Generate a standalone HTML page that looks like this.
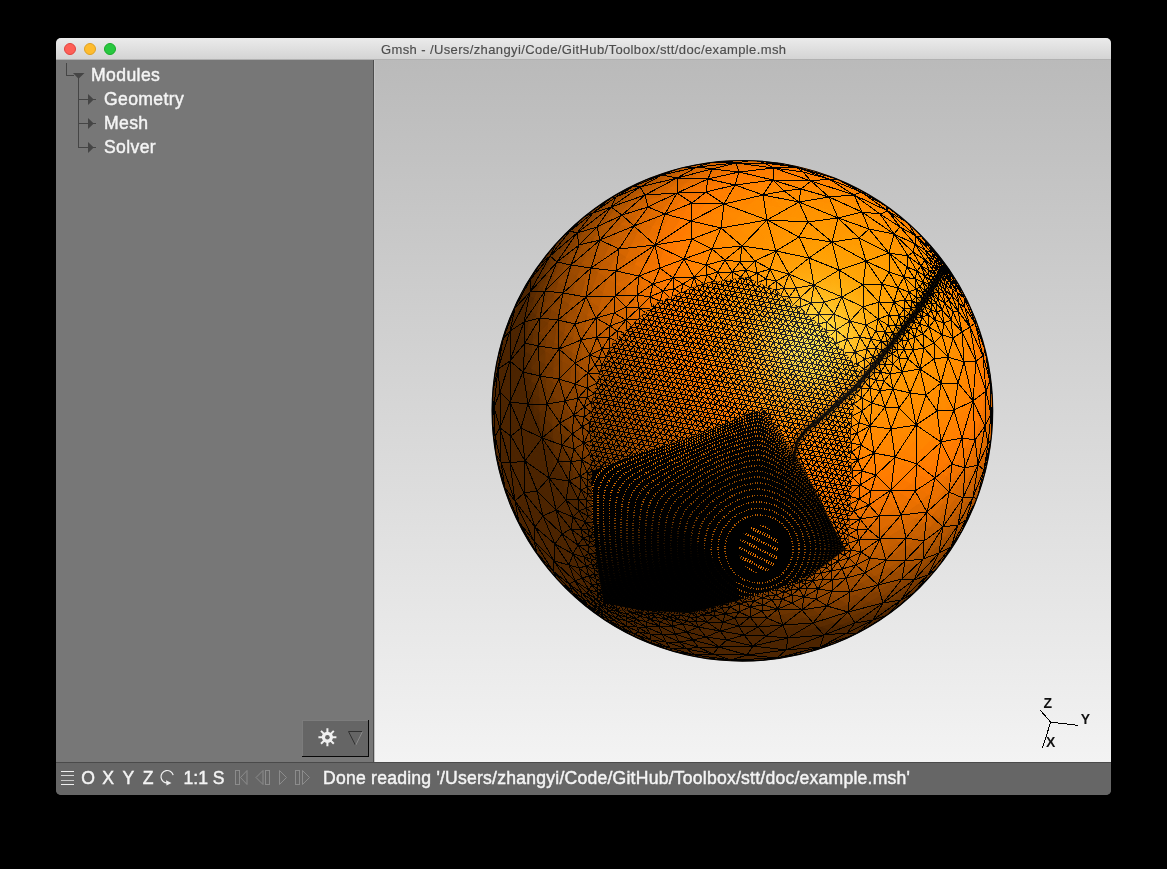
<!DOCTYPE html>
<html><head><meta charset="utf-8">
<style>
*{box-sizing:border-box;margin:0;padding:0}
html,body{width:1167px;height:869px;background:#000;overflow:hidden;font-family:"Liberation Sans",sans-serif}
#win{position:absolute;left:56px;top:38px;width:1055px;height:757px;border-radius:5px;overflow:hidden;background:#666}
#title{position:absolute;left:0;top:0;width:1055px;height:22px;background:linear-gradient(#ebebeb,#d4d4d4);border-bottom:1px solid #b1b1b1}
#title .t{position:absolute;left:325px;top:4px;font-size:13px;letter-spacing:0.38px;color:#4d4d4d;white-space:nowrap;-webkit-text-stroke:0.15px #4d4d4d;will-change:transform}
.dot{position:absolute;top:5px;width:12px;height:12px;border-radius:50%}
#side{position:absolute;left:0;top:22px;width:318px;height:702px;background:#777;border-right:1px solid #4d4d4d}
#view{position:absolute;left:318px;top:22px;width:737px;height:702px;background:linear-gradient(#bababa,#f3f3f3);border-left:1px solid #c4c4c4}
#status{position:absolute;left:0;top:724px;width:1055px;height:33px;background:#666;border-top:1px solid #4a4a4a}
.lbl{position:absolute;color:#f4f4f4;font-size:17.6px;white-space:nowrap;-webkit-text-stroke:0.45px #f4f4f4;will-change:transform}
svg{position:absolute;overflow:visible}
</style></head><body>
<div id="win">
 <div id="title">
  <div class="dot" style="left:8px;background:#fe5f57;border:0.5px solid #e0443e"></div>
  <div class="dot" style="left:28px;background:#febc2e;border:0.5px solid #dea123"></div>
  <div class="dot" style="left:48px;background:#28c840;border:0.5px solid #1aab29"></div>
  <div class="t">Gmsh - /Users/zhangyi/Code/GitHub/Toolbox/stt/doc/example.msh</div>
 </div>
 <div id="side">
  <div class="lbl" style="left:35px;top:5px;letter-spacing:0.4px">Modules</div>
  <div class="lbl" style="left:48px;top:29px;letter-spacing:0.35px">Geometry</div>
  <div class="lbl" style="left:48px;top:53px;letter-spacing:0.35px">Mesh</div>
  <div class="lbl" style="left:48px;top:77px;letter-spacing:0.35px">Solver</div>
 </div>
 <div id="view"></div>
 <div id="status">
  <div class="lbl" style="left:266.5px;top:5px;letter-spacing:0.22px">Done reading '/Users/zhangyi/Code/GitHub/Toolbox/stt/doc/example.msh'</div>
 </div>
</div>
<svg width="1167" height="869" viewBox="0 0 1167 869" style="left:0;top:0">
<g shape-rendering="crispEdges" stroke="#454545" stroke-width="1" fill="none">
<path d="M66.5 63V75.5H74M78.5 78V148M78.5 99.5H96M78.5 123.5H96M78.5 147.5H96"/>
</g>
<g fill="#454545">
<path d="M73 73H84.5L78.5 78.8Z"/>
<path d="M88 94V105L93.8 99.5Z"/>
<path d="M88 118V129L93.8 123.5Z"/>
<path d="M88 142V153L93.8 147.5Z"/>
</g>
<!-- gear button -->
<g shape-rendering="crispEdges">
<rect x="302" y="720" width="67" height="37" fill="#656565"/>
<path d="M302.5 757V720.5H368" stroke="#7c7c7c" fill="none"/>
<path d="M302 756.5H368.5V720" stroke="#080808" fill="none"/>
</g>
<g transform="translate(327.4 737.3)" fill="#f0f0f0" stroke="none">
<circle r="5.6"/>
<g stroke="#f0f0f0" stroke-width="2" stroke-linecap="butt">
<path d="M0 -9V9M-9 0H9M-6.4 -6.4L6.4 6.4M-6.4 6.4L6.4 -6.4"/>
</g>
<circle r="2.3" fill="#656565"/>
</g>
<path d="M348.5 731.5H362.5" stroke="#303030" stroke-width="1"/>
<path d="M348.5 731.5L355.6 745.5" stroke="#303030" stroke-width="1"/>
<path d="M362.5 731.5L355.6 745.5" stroke="#8a8a8a" stroke-width="1"/>
<!-- status icons -->
<g stroke-width="1" shape-rendering="crispEdges">
<path d="M61 771.5H74" stroke="#f0f0f0"/>
<path d="M61 775.5H74" stroke="#d8d8d8"/>
<path d="M61 780.5H74" stroke="#c8c8c8"/>
<path d="M61 784.5H74" stroke="#f0f0f0"/>
</g>
<g fill="none" stroke="#eeeeee" stroke-width="1.2">
<path d="M173.2 775.2A6.2 6.2 0 1 0 167.5 782.9"/>
</g>
<path d="M166 780.3L171.5 783L166.5 785.5Z" fill="#eeeeee"/>
<g fill="none" stroke="#8c8c8c" stroke-width="1">
<rect x="235.5" y="770.5" width="4" height="14"/>
<path d="M247 770.5V784.5L240.5 777.5Z"/>
<path d="M263 770.5V784.5L256 777.5Z"/>
<rect x="265.5" y="770.5" width="4" height="14"/>
<path d="M279.5 770.5V784.5L286.5 777.5Z"/>
<rect x="295.5" y="770.5" width="4" height="14"/>
<path d="M302.5 770.5V784.5L309.5 777.5Z"/>
</g>
<!-- axes -->
<g stroke="#000" stroke-width="1" fill="none" shape-rendering="crispEdges">
<path d="M1040.1 710.1L1050.7 722.1L1077.6 725.3M1050.7 722.1L1042.4 748.3"/>
</g>
<g font-family="Liberation Sans" font-size="14px" font-weight="bold" fill="#111">
<text x="1043.5" y="707.8">Z</text>
<text x="1080.8" y="723.6">Y</text>
<text x="1046" y="747.2">X</text>
</g>
<!-- status letters -->
<g font-family="Liberation Sans" font-size="17.6px" fill="#f4f4f4" stroke="#f4f4f4" stroke-width="0.45" style="will-change:transform">
<text x="81.3" y="783.9">O</text>
<text x="102.3" y="783.9">X</text>
<text x="122.6" y="783.9">Y</text>
<text x="142.8" y="783.9">Z</text>
<text x="183.5" y="783.9">1:1</text>
<text x="212.8" y="783.9">S</text>
</g>
</svg>

<svg id="sph" width="1167" height="869" viewBox="0 0 1167 869" style="left:0;top:0">
<defs>
<clipPath id="cs"><circle cx="742.4" cy="410.8" r="250.6"/></clipPath>
<clipPath id="cD"><polygon points="592.0,471.0 640.0,452.0 683.0,440.0 720.0,425.0 751.0,412.0 765.0,410.0 798.0,458.0 816.0,491.0 841.0,542.0 846.0,549.0 803.0,582.0 740.0,600.0 690.0,613.0 640.0,610.0 604.0,603.0 596.0,560.0 592.0,520.0"/></clipPath>
<clipPath id="cE"><ellipse cx="759" cy="549" rx="20" ry="24"/></clipPath>
<linearGradient id="gR" gradientUnits="userSpaceOnUse" x1="690" y1="445" x2="735" y2="560"><stop offset="0" stop-color="#fff" stop-opacity="1"/><stop offset="1" stop-color="#fff" stop-opacity="0.12"/></linearGradient>
<radialGradient id="gRc" gradientUnits="userSpaceOnUse" cx="759" cy="549" r="75"><stop offset="0" stop-color="#fff" stop-opacity="0.9"/><stop offset="0.6" stop-color="#fff" stop-opacity="0.7"/><stop offset="1" stop-color="#fff" stop-opacity="0"/></radialGradient>
<mask id="mR" maskUnits="userSpaceOnUse" x="0" y="0" width="1167" height="869"><rect width="1167" height="869" fill="url(#gR)"/><circle cx="759" cy="549" r="75" fill="url(#gRc)"/></mask>
<linearGradient id="gSo" gradientUnits="userSpaceOnUse" x1="640" y1="505" x2="660" y2="570"><stop offset="0" stop-color="#000" stop-opacity="0"/><stop offset="1" stop-color="#000" stop-opacity="0.96"/></linearGradient>
<clipPath id="cF"><polygon points="745.0,277.0 771.0,288.0 803.0,311.0 829.0,333.0 852.0,361.0 862.0,372.0 855.0,400.0 850.0,430.0 852.0,480.0 848.0,548.0 800.0,575.0 749.0,600.0 690.0,615.0 618.0,610.0 607.0,574.0 593.0,527.0 590.0,469.0 590.0,415.0 596.0,383.0 613.0,342.0 654.0,304.0 700.0,284.0"/></clipPath>
<mask id="mF" maskUnits="userSpaceOnUse" x="0" y="0" width="1167" height="869"><rect width="1167" height="869" fill="#fff"/><polygon points="745.0,277.0 771.0,288.0 803.0,311.0 829.0,333.0 852.0,361.0 862.0,372.0 855.0,400.0 850.0,430.0 852.0,480.0 848.0,548.0 800.0,575.0 749.0,600.0 690.0,615.0 618.0,610.0 607.0,574.0 593.0,527.0 590.0,469.0 590.0,415.0 596.0,383.0 613.0,342.0 654.0,304.0 700.0,284.0" fill="#000"/></mask>
<radialGradient id="gS"><stop offset="0.000" stop-color="#ffffd0" stop-opacity="0.130"/><stop offset="0.067" stop-color="#ffffd0" stop-opacity="0.126"/><stop offset="0.133" stop-color="#ffffd0" stop-opacity="0.114"/><stop offset="0.200" stop-color="#ffffd0" stop-opacity="0.098"/><stop offset="0.267" stop-color="#ffffd0" stop-opacity="0.078"/><stop offset="0.333" stop-color="#ffffd0" stop-opacity="0.058"/><stop offset="0.400" stop-color="#ffffd0" stop-opacity="0.041"/><stop offset="0.467" stop-color="#ffffd0" stop-opacity="0.027"/><stop offset="0.533" stop-color="#ffffd0" stop-opacity="0.016"/><stop offset="0.600" stop-color="#ffffd0" stop-opacity="0.009"/><stop offset="0.667" stop-color="#ffffd0" stop-opacity="0.005"/><stop offset="0.733" stop-color="#ffffd0" stop-opacity="0.002"/><stop offset="0.800" stop-color="#ffffd0" stop-opacity="0.001"/><stop offset="0.867" stop-color="#ffffd0" stop-opacity="0.000"/><stop offset="0.933" stop-color="#ffffd0" stop-opacity="0.000"/><stop offset="1.000" stop-color="#ffffd0" stop-opacity="0.000"/></radialGradient>
<radialGradient id="gS2"><stop offset="0.000" stop-color="#dde4ff" stop-opacity="0.190"/><stop offset="0.067" stop-color="#dde4ff" stop-opacity="0.184"/><stop offset="0.133" stop-color="#dde4ff" stop-opacity="0.167"/><stop offset="0.200" stop-color="#dde4ff" stop-opacity="0.143"/><stop offset="0.267" stop-color="#dde4ff" stop-opacity="0.114"/><stop offset="0.333" stop-color="#dde4ff" stop-opacity="0.085"/><stop offset="0.400" stop-color="#dde4ff" stop-opacity="0.060"/><stop offset="0.467" stop-color="#dde4ff" stop-opacity="0.039"/><stop offset="0.533" stop-color="#dde4ff" stop-opacity="0.024"/><stop offset="0.600" stop-color="#dde4ff" stop-opacity="0.014"/><stop offset="0.667" stop-color="#dde4ff" stop-opacity="0.007"/><stop offset="0.733" stop-color="#dde4ff" stop-opacity="0.004"/><stop offset="0.800" stop-color="#dde4ff" stop-opacity="0.002"/><stop offset="0.867" stop-color="#dde4ff" stop-opacity="0.001"/><stop offset="0.933" stop-color="#dde4ff" stop-opacity="0.000"/><stop offset="1.000" stop-color="#dde4ff" stop-opacity="0.000"/></radialGradient>
<filter id="fb" x="-20%" y="-20%" width="140%" height="140%"><feGaussianBlur stdDeviation="2"/></filter>
</defs>
<g clip-path="url(#cs)" style="isolation:isolate">
<path fill="#4c2400" stroke="#4c2400" stroke-width="1.2" d="M534 404l-6 -4l1 11zM533 393l-7 -5l2 12zM529 411l-1 -11l-5 11zM528 400l-6 0l1 11zM523 411l-1 -11l-4 11zM522 400l-6 -1l2 12zM518 411l-2 -12l-4 12zM516 399l-5 0l1 12zM512 411l-1 -12l-4 12zM511 399l-5 0l1 12zM507 411l-1 -12l-3 12zM506 399l-4 0l1 12zM503 411l-1 -12l-3 12zM502 399l-4 -1l1 13zM499 411l-1 -13l-2 13zM498 398l-3 0l1 13zM496 411l-1 -13l-1 13zM495 398l-2 0l1 13zM494 411l-1 -13l-1 13zM493 398l-1 0l0 13zM492 411l0 -13l0 13zM492 398l0 0l0 13zM492 411l0 -13l0 13zM492 398l1 0l-1 13zM528 400l-2 -12l-4 12zM526 388l-6 0l2 12zM522 400l-2 -12l-4 11zM520 388l-5 -1l1 12zM516 399l-1 -12l-4 12zM515 387l-5 0l1 12zM511 399l-1 -12l-4 12zM510 387l-5 -1l1 13zM506 399l-1 -13l-3 13zM505 386l-4 0l1 13zM502 399l-1 -13l-3 12zM501 386l-3 -1l0 13zM498 398l0 -13l-3 13zM498 385l-3 0l0 13zM495 398l0 -13l-2 13zM495 385l-1 0l-1 13zM493 398l1 -13l-2 13zM494 385l-1 0l-1 13zM492 398l1 -13l-1 13zM493 385l1 0l-2 13zM492 398l2 -13l-1 13zM526 388l0 -12l-6 12zM526 376l-6 -1l0 13zM520 388l0 -13l-5 12zM520 375l-6 0l1 12zM515 387l-1 -12l-4 12zM514 375l-5 -1l1 13zM510 387l-1 -13l-4 12zM509 374l-4 -1l0 13zM505 386l0 -13l-4 13zM505 373l-4 -1l0 14zM501 386l0 -14l-3 13zM501 372l-3 0l0 13zM498 385l0 -13l-3 13zM498 372l-2 0l-1 13zM495 385l1 -13l-2 13zM496 372l-1 -1l-1 14zM494 385l1 -14l-2 14zM495 371l0 0l-2 14zM493 385l2 -14l-1 14zM495 371l1 1l-2 13zM526 376l-1 -12l-5 11zM525 364l-5 -1l0 12zM520 375l0 -12l-6 12zM520 363l-6 -2l0 14zM514 375l0 -14l-5 13zM514 361l-4 -1l-1 14zM509 374l1 -14l-5 13zM510 360l-5 -1l0 14zM505 373l0 -14l-4 13zM505 359l-3 0l-1 13zM501 372l1 -13l-4 13zM502 359l-2 -1l-2 14zM498 372l2 -14l-4 14zM500 358l-2 0l-2 14zM496 372l2 -14l-3 13zM498 358l-1 0l-2 13zM495 371l2 -13l-2 13zM497 358l1 0l-3 13zM495 371l3 -13l-2 14zM525 364l1 -13l-6 12zM526 351l-6 -2l0 14zM520 363l0 -14l-6 12zM520 349l-5 -1l-1 13zM514 361l1 -13l-5 12zM515 348l-4 -1l-1 13zM510 360l1 -13l-6 12zM511 347l-4 -1l-2 13zM505 359l2 -13l-5 13zM507 346l-3 -1l-2 14zM502 359l2 -14l-4 13zM504 345l-2 -1l-2 14zM500 358l2 -14l-4 14zM502 344l-1 0l-3 14zM498 358l3 -14l-4 14zM501 344l0 0l-4 14zM497 358l4 -14l-3 14zM501 344l1 0l-4 14zM527 338l-5 -2l-2 13zM520 349l2 -13l-7 12zM522 336l-5 -2l-2 14zM515 348l2 -14l-6 13zM517 334l-4 -1l-2 14zM511 347l2 -14l-6 13zM513 333l-3 -1l-3 14zM507 346l3 -14l-6 13zM510 332l-3 -1l-3 14zM504 345l3 -14l-5 13zM507 331l-1 0l-4 13zM502 344l4 -13l-5 13zM506 331l-1 -1l-4 14zM501 344l4 -14l-4 14zM505 330l1 1l-5 13zM501 344l5 -13l-4 13zM522 336l2 -13l-7 11zM524 323l-4 -2l-3 13zM517 334l3 -13l-7 12zM520 321l-4 -2l-3 14zM513 333l3 -14l-6 13zM516 319l-3 -1l-3 14zM510 332l3 -14l-6 13zM513 318l-2 -1l-4 14zM507 331l4 -14l-5 14zM511 317l-1 0l-4 14zM506 331l4 -14l-5 13zM510 317l0 0l-5 13zM505 330l5 -13l-4 14zM510 317l1 0l-5 14zM524 323l3 -14l-7 12zM527 309l-4 -2l-3 14zM520 321l3 -14l-7 12zM523 307l-3 -1l-4 13zM516 319l4 -13l-7 12zM520 306l-2 -1l-5 13zM513 318l5 -13l-7 12zM518 305l-2 -1l-5 13zM511 317l5 -13l-6 13zM516 304l0 0l-6 13zM510 317l6 -13l-6 13zM516 304l0 0l-6 13zM510 317l6 -13l-5 13zM527 309l4 -13l-8 11zM531 296l-3 -2l-5 13zM523 307l5 -13l-8 12zM528 294l-3 -1l-5 13zM520 306l5 -13l-7 12zM525 293l-2 -1l-5 13zM518 305l5 -13l-7 12zM523 292l-1 -1l-6 13zM516 304l6 -13l-6 13zM522 291l0 0l-6 13zM516 304l6 -13l-6 13zM522 291l1 1l-7 12zM536 283l-3 -2l-5 13zM528 294l5 -13l-8 12zM533 281l-2 -1l-6 13zM525 293l6 -13l-8 12zM531 280l-1 -1l-7 13zM523 292l7 -13l-8 12zM530 279l-1 0l-7 12zM522 291l7 -12l-7 12zM529 279l1 0l-8 12zM522 291l8 -12l-7 13zM533 281l6 -12l-8 11zM539 269l-1 -1l-7 12zM531 280l7 -12l-8 11zM538 268l-1 0l-7 11zM530 279l7 -11l-8 11zM537 268l0 0l-8 11zM529 279l8 -11l-7 11zM537 268l1 0l-8 11zM539 269l7 -11l-8 10zM546 258l-1 -1l-7 11zM538 268l7 -11l-8 11zM545 257l0 0l-8 11zM537 268l8 -11l-8 11zM545 257l0 0l-8 11zM537 268l8 -11l-7 11zM546 258l8 -10l-9 9zM554 248l-1 -1l-8 10zM545 257l8 -10l-8 10zM553 247l0 0l-8 10zM545 257l8 -10l-8 10zM553 247l1 1l-9 9zM554 248l8 -10l-9 9zM562 238l-1 0l-8 9zM553 247l8 -9l-8 9zM561 238l1 0l-9 9zM553 247l9 -9l-8 10zM570 229l0 0l-9 9zM561 238l9 -9l-8 9zM570 229l0 1l-8 8zM570 229l8 -7l-8 8zM534 418l0 -14l-5 7zM611 624l-8 -5l0 0zM603 619l-8 -6l8 6zM603 619l-8 -6l0 0zM595 613l-8 -6l8 6zM595 613l-8 -6l0 -1zM587 607l-9 -7l9 6zM603 619l-8 -6l0 0zM595 613l-8 -6l8 6zM595 613l-8 -6l0 0zM587 607l-9 -7l9 7zM587 607l-9 -7l0 0zM578 600l-8 -8l8 8zM578 600l-8 -8l0 0zM570 592l-8 -8l8 8zM595 613l-8 -7l0 1zM587 606l-9 -6l9 7zM587 607l-9 -7l0 0zM578 600l-8 -8l8 8zM578 600l-8 -8l0 0zM570 592l-9 -8l9 8zM570 592l-9 -8l1 0zM561 584l-8 -9l9 9zM562 584l-9 -9l1 -1zM553 575l-8 -11l9 10zM587 606l-8 -7l-1 1zM579 599l-9 -7l8 8zM578 600l-8 -8l0 0zM570 592l-8 -8l8 8zM570 592l-8 -8l-1 0zM562 584l-9 -9l8 9zM561 584l-8 -9l0 0zM553 575l-8 -10l8 10zM553 575l-8 -10l0 -1zM545 565l-8 -11l8 10zM545 564l-8 -10l1 -1zM537 554l-7 -12l8 11zM579 599l-7 -9l-2 2zM572 590l-9 -7l7 9zM570 592l-7 -9l-1 1zM563 583l-9 -9l8 10zM562 584l-8 -10l-1 1zM554 574l-9 -10l8 11zM553 575l-8 -11l0 1zM545 564l-8 -10l8 11zM545 565l-8 -11l0 0zM537 554l-8 -11l8 11zM537 554l-8 -11l1 -1zM529 543l-7 -13l8 12zM530 542l-8 -12l1 0zM522 530l-6 -12l7 12zM572 590l-8 -9l-1 2zM564 581l-9 -8l8 10zM563 583l-8 -10l-1 1zM555 573l-9 -9l8 10zM554 574l-8 -10l-1 0zM546 564l-8 -11l7 11zM545 564l-7 -11l-1 1zM538 553l-8 -11l7 12zM537 554l-7 -12l-1 1zM530 542l-8 -12l7 13zM529 543l-7 -13l0 0zM522 530l-6 -12l6 12zM522 530l-6 -12l0 0zM516 518l-6 -13l6 13zM516 518l-6 -13l1 -1zM510 505l-4 -14l5 13zM564 581l-7 -10l-2 2zM557 571l-9 -9l7 11zM555 573l-7 -11l-2 2zM548 562l-9 -10l7 12zM546 564l-7 -12l-1 1zM539 552l-8 -11l7 12zM538 553l-7 -12l-1 1zM531 541l-8 -11l7 12zM530 542l-7 -12l-1 0zM523 530l-7 -12l6 12zM522 530l-6 -12l0 0zM516 518l-6 -13l6 13zM516 518l-6 -13l0 0zM510 505l-5 -14l5 14zM510 505l-5 -14l1 0zM505 491l-4 -13l5 13zM506 491l-5 -13l1 -1zM501 478l-3 -14l4 13zM557 571l-6 -11l-3 2zM551 560l-9 -9l6 11zM548 562l-6 -11l-3 1zM542 551l-9 -11l6 12zM539 552l-6 -12l-2 1zM533 540l-8 -11l6 12zM531 541l-6 -12l-2 1zM525 529l-7 -12l5 13zM523 530l-5 -13l-2 1zM518 517l-7 -13l5 14zM516 518l-5 -14l-1 1zM511 504l-5 -13l4 14zM510 505l-4 -14l-1 0zM506 491l-5 -13l4 13zM505 491l-4 -13l0 0zM501 478l-4 -14l4 14zM501 478l-4 -14l1 0zM497 464l-2 -14l3 14zM498 464l-3 -14l1 0zM495 450l-1 -13l2 13zM551 560l-6 -12l-3 3zM545 548l-9 -10l6 13zM542 551l-6 -13l-3 2zM536 538l-8 -11l5 13zM533 540l-5 -13l-3 2zM528 527l-8 -11l5 13zM525 529l-5 -13l-2 1zM520 516l-7 -13l5 14zM518 517l-5 -14l-2 1zM513 503l-6 -12l4 13zM511 504l-4 -13l-1 0zM507 491l-5 -14l4 14zM506 491l-4 -14l-1 1zM502 477l-4 -13l3 14zM501 478l-3 -14l-1 0zM498 464l-3 -14l2 14zM497 464l-2 -14l0 0zM495 450l-2 -13l2 13zM495 450l-2 -13l1 0zM493 437l-1 -13l2 13zM494 437l-2 -13l1 0zM492 424l0 -13l1 13zM545 548l-5 -12l-4 2zM540 536l-9 -10l5 12zM536 538l-5 -12l-3 1zM531 526l-8 -12l5 13zM528 527l-5 -13l-3 2zM523 514l-7 -12l4 14zM520 516l-4 -14l-3 1zM516 502l-6 -12l3 13zM513 503l-3 -13l-3 1zM510 490l-6 -13l3 14zM507 491l-3 -14l-2 0zM504 477l-4 -14l2 14zM502 477l-2 -14l-2 1zM500 463l-4 -13l2 14zM498 464l-2 -14l-1 0zM496 450l-2 -13l1 13zM495 450l-1 -13l-1 0zM494 437l-2 -13l1 13zM493 437l-1 -13l0 0zM492 424l0 -13l0 13zM492 424l0 -13l0 0zM540 536l-5 -13l-4 3zM535 523l-8 -11l4 14zM531 526l-4 -14l-4 2zM527 512l-7 -11l3 13zM523 514l-3 -13l-4 1zM520 501l-7 -12l3 13zM516 502l-3 -13l-3 1zM513 489l-6 -13l3 14zM510 490l-3 -14l-3 1zM507 476l-5 -13l2 14zM504 477l-2 -14l-2 0zM502 463l-4 -13l2 13zM500 463l-2 -13l-2 0zM498 450l-3 -13l1 13zM496 450l-1 -13l-1 0zM495 437l-2 -13l1 13zM494 437l-1 -13l-1 0zM493 424l-1 -13l0 13zM492 424l0 -13l0 0zM535 523l-3 -13l-5 2zM532 510l-8 -11l3 13zM527 512l-3 -13l-4 2zM524 499l-7 -12l3 14zM520 501l-3 -14l-4 2zM517 487l-6 -12l2 14zM513 489l-2 -14l-4 1zM511 475l-6 -13l2 14zM507 476l-2 -14l-3 1zM505 462l-4 -13l1 14zM502 463l-1 -14l-3 1zM501 449l-3 -13l0 14zM498 450l0 -14l-3 1zM498 436l-3 -13l0 14zM495 437l0 -14l-2 1zM495 423l-1 -12l-1 13zM493 424l1 -13l-2 0zM532 510l-3 -13l-5 2zM529 497l-7 -11l2 13zM524 499l-2 -13l-5 1zM522 486l-7 -12l2 13zM517 487l-2 -13l-4 1zM515 474l-5 -13l1 14zM511 475l-1 -14l-5 1zM510 461l-5 -12l0 13zM505 462l0 -13l-4 0zM505 449l-4 -13l0 13zM501 449l0 -13l-3 0zM501 436l-3 -13l0 13zM498 436l0 -13l-3 0zM498 423l-2 -12l-1 12zM495 423l1 -12l-2 0zM529 497l-2 -13l-5 2zM527 484l-7 -12l2 14zM522 486l-2 -14l-5 2zM520 472l-6 -12l1 14zM515 474l-1 -14l-4 1zM514 460l-5 -12l1 13zM510 461l-1 -13l-4 1zM509 448l-4 -13l0 14zM505 449l0 -14l-4 1zM505 435l-3 -12l-1 13zM501 436l1 -13l-4 0zM502 423l-3 -12l-1 12zM498 423l1 -12l-3 0zM527 484l-1 -13l-6 1zM526 471l-6 -12l0 13zM520 472l0 -13l-6 1zM520 459l-6 -12l0 13zM514 460l0 -13l-5 1zM514 447l-4 -12l-1 13zM509 448l1 -13l-5 0zM510 435l-4 -12l-1 12zM505 435l1 -12l-4 0zM506 423l-3 -12l-1 12zM502 423l1 -12l-4 0zM526 471l-1 -13l-5 1zM525 458l-5 -12l0 13zM520 459l0 -13l-6 1zM520 446l-5 -12l-1 13zM514 447l1 -13l-5 1zM515 434l-4 -11l-1 12zM510 435l1 -12l-5 0zM511 423l-4 -12l-1 12zM506 423l1 -12l-4 0zM525 458l1 -13l-6 1zM526 445l-6 -11l0 12zM520 446l0 -12l-5 0zM520 434l-4 -12l-1 12zM515 434l1 -12l-5 1zM516 422l-4 -11l-1 12zM511 423l1 -12l-5 0zM526 445l0 -12l-6 1zM526 433l-4 -11l-2 12zM520 434l2 -12l-6 0zM522 422l-4 -11l-2 11zM516 422l2 -11l-6 0zM526 433l2 -11l-6 0zM528 422l-5 -11l-1 11zM522 422l1 -11l-5 0zM528 422l1 -11l-6 0zM848 626l5 1l8 -6zM853 627l13 -6l-5 0zM853 627l6 1l7 -7zM859 628l12 -6l-5 -1zM866 621l5 1l8 -7zM871 622l12 -7l-4 0zM859 628l4 0l8 -6zM863 628l12 -7l-4 1zM871 622l4 -1l8 -6zM875 621l12 -7l-4 1zM883 615l4 -1l8 -7zM887 614l11 -8l-3 1zM863 628l4 -1l8 -6zM867 627l12 -7l-4 1zM875 621l4 -1l8 -6zM879 620l11 -7l-3 1zM887 614l3 -1l8 -7zM867 627l4 -1l8 -6zM871 626l11 -7l-3 1zM879 620l3 -1l8 -6zM871 626l3 -2l8 -5zM611 624l10 6l-7 -4zM621 630l3 1l-10 -5zM614 626l10 5l-7 -4zM624 631l4 2l-11 -6zM617 627l11 6l-6 -5zM628 633l5 0l-11 -5zM622 628l11 5l-7 -5zM633 633l5 0l-12 -5zM626 628l12 5l-7 -6zM638 633l6 0l-13 -6zM631 627l13 6l-7 -7zM644 633l6 -2l-13 -5zM637 626l13 5l-7 -7zM650 631l7 -2l-14 -5zM643 624l14 5l-7 -7zM657 629l7 -3l-14 -4zM650 622l14 4l-7 -8zM664 626l7 -4l-14 -4zM657 618l14 4l-6 -8zM671 622l8 -5l-14 -3zM665 614l14 3l-6 -9zM679 617l8 -6l-14 -3zM673 608l14 3l-6 -8zM687 611l9 -6l-15 -2zM681 603l15 2l-7 -9zM621 630l10 5l-7 -4zM631 635l4 2l-11 -6zM624 631l11 6l-7 -4zM635 637l5 1l-12 -5zM628 633l12 5l-7 -5zM640 638l5 1l-12 -6zM633 633l12 6l-7 -6zM645 639l6 0l-13 -6zM638 633l13 6l-7 -6zM651 639l6 -1l-13 -5zM644 633l13 5l-7 -7zM657 638l7 -2l-14 -5zM650 631l14 5l-7 -7zM664 636l7 -3l-14 -4zM657 629l14 4l-7 -7zM671 633l7 -3l-14 -4zM664 626l14 4l-7 -8zM678 630l8 -5l-15 -3zM671 622l15 3l-7 -8zM686 625l8 -5l-15 -3zM679 617l15 3l-7 -9zM694 620l9 -6l-16 -3zM687 611l16 3l-7 -9zM703 614l8 -7l-15 -2zM631 635l12 6l-8 -4zM643 641l5 1l-13 -5zM635 637l13 5l-8 -4zM648 642l5 2l-13 -6zM640 638l13 6l-8 -5zM653 644l5 0l-13 -5zM645 639l13 5l-7 -5zM658 644l7 0l-14 -5zM651 639l14 5l-8 -6zM665 644l6 -2l-14 -4zM657 638l14 4l-7 -6zM671 642l7 -2l-14 -4zM664 636l14 4l-7 -7zM678 640l8 -3l-15 -4zM671 633l15 4l-8 -7zM686 637l8 -4l-16 -3zM678 630l16 3l-8 -8zM694 633l8 -5l-16 -3zM686 625l16 3l-8 -8zM702 628l8 -6l-16 -2zM694 620l16 2l-7 -8zM710 622l8 -6l-15 -2zM703 614l15 2l-7 -9zM643 641l12 5l-7 -4zM655 646l5 1l-12 -5zM648 642l12 5l-7 -3zM660 647l6 1l-13 -4zM653 644l13 4l-8 -4zM666 648l6 0l-14 -4zM658 644l14 4l-7 -4zM672 648l7 0l-14 -4zM665 644l14 4l-8 -6zM679 648l7 -2l-15 -4zM671 642l15 4l-8 -6zM686 646l8 -2l-16 -4zM678 640l16 4l-8 -7zM694 644l8 -4l-16 -3zM686 637l16 3l-8 -7zM702 640l8 -5l-16 -2zM694 633l16 2l-8 -7zM710 635l8 -5l-16 -2zM702 628l16 2l-8 -8zM718 630l8 -6l-16 -2zM710 622l16 2l-8 -8zM726 624l8 -8l-16 0zM655 646l13 4l-8 -3zM668 650l6 2l-14 -5zM660 647l14 5l-8 -4zM674 652l6 0l-14 -4zM666 648l14 4l-8 -4zM680 652l7 0l-15 -4zM672 648l15 4l-8 -4zM687 652l7 -1l-15 -3zM679 648l15 3l-8 -5zM694 651l8 -2l-16 -3zM686 646l16 3l-8 -5zM702 649l8 -3l-16 -2zM694 644l16 2l-8 -6zM710 646l8 -4l-16 -2zM702 640l16 2l-8 -7zM718 642l8 -5l-16 -2zM710 635l16 2l-8 -7zM726 637l8 -6l-16 -1zM718 630l16 1l-8 -7zM734 631l8 -7l-16 0zM726 624l16 0l-8 -8zM668 650l14 4l-8 -2zM682 654l7 1l-15 -3zM674 652l15 3l-9 -3zM689 655l6 1l-15 -4zM680 652l15 4l-8 -4zM695 656l7 -1l-15 -3zM687 652l15 3l-8 -4zM702 655l8 -1l-16 -3zM694 651l16 3l-8 -5zM710 654l8 -3l-16 -2zM702 649l16 2l-8 -5zM718 651l8 -3l-16 -2zM710 646l16 2l-8 -6zM726 648l8 -5l-16 -1zM718 642l16 1l-8 -6zM734 643l8 -6l-16 0zM726 637l16 0l-8 -6zM742 637l9 -6l-17 0zM734 631l17 0l-9 -7zM751 631l8 -7l-17 0zM682 654l15 3l-8 -2zM697 657l6 1l-14 -3zM689 655l14 3l-8 -2zM703 658l8 0l-16 -2zM695 656l16 2l-9 -3zM711 658l7 -1l-16 -2zM702 655l16 2l-8 -3zM718 657l8 -2l-16 -1zM710 654l16 1l-8 -4zM726 655l8 -3l-16 -1zM718 651l16 1l-8 -4zM734 652l8 -4l-16 0zM726 648l16 0l-8 -5zM742 648l9 -5l-17 0zM734 643l17 0l-9 -6zM751 643l8 -6l-17 0zM742 637l17 0l-8 -6zM759 637l8 -7l-16 1zM751 631l16 -1l-8 -6zM697 657l15 3l-9 -2zM712 660l7 0l-16 -2zM703 658l16 2l-8 -2zM719 660l7 0l-15 -2zM711 658l15 2l-8 -3zM726 660l8 -2l-16 -1zM718 657l16 1l-8 -3zM734 658l8 -2l-16 -1zM726 655l16 1l-8 -4zM742 656l9 -4l-17 0zM734 652l17 0l-9 -4zM751 652l8 -4l-17 0zM742 648l17 0l-8 -5zM759 648l8 -6l-16 1zM751 643l16 -1l-8 -5zM767 642l8 -7l-16 2zM759 637l16 -2l-8 -5zM775 635l8 -7l-16 2zM712 660l15 1l-8 -1zM727 661l8 0l-16 -1zM719 660l16 1l-9 -1zM735 661l7 -1l-16 0zM726 660l16 0l-8 -2zM742 660l9 -2l-17 0zM734 658l17 0l-9 -2zM751 658l8 -3l-17 1zM742 656l17 -1l-8 -3zM759 655l8 -4l-16 1zM751 652l16 -1l-8 -3zM767 651l8 -5l-16 2zM759 648l16 -2l-8 -4zM775 646l8 -6l-16 2zM767 642l16 -2l-8 -5zM783 640l8 -7l-16 2zM775 635l16 -2l-8 -5zM727 661l15 0l-7 0zM742 661l8 0l-15 0zM735 661l15 0l-8 -1zM750 661l8 -1l-16 0zM742 660l16 0l-7 -2zM758 660l9 -3l-16 1zM751 658l16 -1l-8 -2zM767 657l8 -3l-16 1zM759 655l16 -1l-8 -3zM775 654l8 -5l-16 2zM767 651l16 -2l-8 -3zM783 649l8 -5l-16 2zM775 646l16 -2l-8 -4zM791 644l8 -7l-16 3zM783 640l16 -3l-8 -4zM799 637l7 -7l-15 3zM742 661l16 0l-8 0zM758 661l8 -1l-16 1zM750 661l16 -1l-8 0zM766 660l8 -2l-16 2zM758 660l16 -2l-7 -1zM774 658l8 -3l-15 2zM767 657l15 -2l-7 -1zM782 655l9 -4l-16 3zM775 654l16 -3l-8 -2zM791 651l8 -5l-16 3zM783 649l16 -3l-8 -2zM799 646l7 -6l-15 4zM791 644l15 -4l-7 -3zM806 640l8 -7l-15 4zM799 637l15 -4l-8 -3zM814 633l7 -7l-15 4zM758 661l15 -1l-7 0zM773 660l8 -2l-15 2zM766 660l15 -2l-7 0zM781 658l9 -2l-16 2zM774 658l16 -2l-8 -1zM790 656l8 -4l-16 3zM782 655l16 -3l-7 -1zM798 652l8 -4l-15 3zM791 651l15 -3l-7 -2zM806 648l8 -6l-15 4zM799 646l15 -4l-8 -2zM814 642l7 -6l-15 4zM806 640l15 -4l-7 -3zM821 636l7 -7l-14 4zM814 633l14 -4l-7 -3zM773 660l15 -3l-7 1zM788 657l8 -2l-15 3zM781 658l15 -3l-6 1zM796 655l8 -3l-14 4zM790 656l14 -4l-6 0zM804 652l8 -4l-14 4zM798 652l14 -4l-6 0zM812 648l8 -4l-14 4zM806 648l14 -4l-6 -2zM820 644l8 -6l-14 4zM814 642l14 -4l-7 -2zM828 638l7 -7l-14 5zM821 636l14 -5l-7 -2zM835 631l6 -7l-13 5zM788 657l15 -3l-7 1zM803 654l8 -2l-15 3zM796 655l15 -3l-7 0zM811 652l8 -4l-15 4zM804 652l15 -4l-7 0zM819 648l7 -4l-14 4zM812 648l14 -4l-6 0zM826 644l8 -5l-14 5zM820 644l14 -5l-6 -1zM834 639l7 -6l-13 5zM828 638l13 -5l-6 -2zM841 633l7 -7l-13 5zM835 631l13 -5l-7 -2zM803 654l13 -4l-5 2zM816 650l8 -3l-13 5zM811 652l13 -5l-5 1zM824 647l8 -3l-13 4zM819 648l13 -4l-6 0zM832 644l8 -5l-14 5zM826 644l14 -5l-6 0zM840 639l7 -6l-13 6zM834 639l13 -6l-6 0zM847 633l6 -6l-12 6zM841 633l12 -6l-5 -1zM816 650l14 -4l-6 1zM830 646l7 -4l-13 5zM824 647l13 -5l-5 2zM837 642l8 -4l-13 6zM832 644l13 -6l-5 1zM845 638l7 -5l-12 6zM840 639l12 -6l-5 0zM852 633l7 -5l-12 5zM847 633l12 -5l-6 -1zM830 646l12 -5l-5 1zM842 641l7 -4l-12 5zM837 642l12 -5l-4 1zM849 637l7 -4l-11 5zM845 638l11 -5l-4 0zM856 633l7 -5l-11 5zM852 633l11 -5l-4 0zM842 641l11 -6l-4 2zM853 635l8 -4l-12 6zM849 637l12 -6l-5 2zM861 631l6 -4l-11 6zM856 633l11 -6l-4 1zM853 635l11 -5l-3 1zM864 630l7 -4l-10 5zM861 631l10 -5l-4 1zM864 630l10 -6l-3 2zM628 633l-4 -2l-7 -4zM617 627l7 4l-10 -5zM624 631l-3 -1l-7 -4zM614 626l7 4l-10 -6zM640 638l-5 -1l-7 -4zM628 633l7 4l-11 -6zM635 637l-4 -2l-7 -4zM624 631l7 4l-10 -5zM653 644l-5 -2l-8 -4zM640 638l8 4l-13 -5zM648 642l-5 -1l-8 -4zM635 637l8 4l-12 -6zM653 644l7 3l-12 -5zM660 647l-5 -1l-7 -4zM648 642l7 4l-12 -5zM666 648l8 4l-14 -5zM674 652l-6 -2l-8 -3zM660 647l8 3l-13 -4zM680 652l9 3l-15 -3zM689 655l-7 -1l-8 -2zM674 652l8 2l-14 -4zM695 656l8 2l-14 -3zM703 658l-6 -1l-8 -2zM689 655l8 2l-15 -3zM711 658l8 2l-16 -2zM719 660l-7 0l-9 -2zM703 658l9 2l-15 -3zM726 660l9 1l-16 -1zM735 661l-8 0l-8 -1zM719 660l8 1l-15 -1zM742 660l8 1l-15 0zM750 661l-8 0l-7 0zM735 661l7 0l-15 0zM758 660l8 0l-16 1zM766 660l-8 1l-8 0zM750 661l8 0l-16 0zM774 658l7 0l-15 2zM781 658l-8 2l-7 0zM766 660l7 0l-15 1zM790 656l6 -1l-15 3zM796 655l-8 2l-7 1zM781 658l7 -1l-15 3zM804 652l7 0l-15 3zM811 652l-8 2l-7 1zM796 655l7 -1l-15 3zM819 648l5 -1l-13 5zM824 647l-8 3l-5 2zM811 652l5 -2l-13 4zM845 638l-8 4l-5 2zM832 644l5 -2l-13 5zM837 642l-7 4l-6 1zM824 647l6 -1l-14 4zM856 633l-7 4l-4 1zM845 638l4 -1l-12 5zM849 637l-7 4l-5 1zM837 642l5 -1l-12 5zM867 627l-6 4l-5 2zM856 633l5 -2l-12 6zM861 631l-8 4l-4 2zM849 637l4 -2l-11 6zM867 627l4 -1l-10 5zM871 626l-7 4l-3 1zM861 631l3 -1l-11 5zM871 626l3 -2l-10 6zM890 613l-11 7l8 -6zM890 613l-8 6l-3 1zM882 619l-11 7l8 -6zM879 620l-8 6l-4 1zM882 619l-8 5l-3 2zM924 584l-1 0l9 -9zM932 575l-9 9l8 -10zM915 592l0 0l9 -8zM924 584l-9 8l8 -8zM915 592l-1 0l9 -8zM906 600l1 0l8 -8zM915 592l-8 8l8 -8zM907 600l-1 0l9 -8zM915 592l-9 8l8 -8zM906 599l-8 7l8 -6zM898 606l0 1l8 -7zM906 600l-8 7l9 -7zM898 607l0 0l9 -7zM907 600l-9 7l8 -7zM898 607l0 -1l8 -6zM898 606l-8 7l8 -6zM890 613l0 0l8 -6zM898 607l-8 6l8 -6zM890 613l0 0l8 -6zM898 607l-8 6l8 -7zM890 613l-8 6l8 -6zM882 619l0 0l8 -6zM890 613l-8 6l8 -6zM882 619l-8 5l8 -5zM529 411l-1 11l6 -4zM528 422l5 7l1 -11zM534 418l-1 11l7 -4zM533 429l6 8l1 -12zM528 422l-2 11l7 -4zM526 433l6 8l1 -12zM533 429l-1 12l7 -4zM532 441l7 8l0 -12zM539 437l0 12l7 -4zM539 449l7 8l0 -12zM546 445l0 12l8 -4zM546 457l8 9l0 -13zM526 433l0 12l6 -4zM526 445l6 9l0 -13zM532 441l0 13l7 -5zM532 454l6 8l1 -13zM539 449l-1 13l8 -5zM538 462l8 9l0 -14zM546 457l0 14l8 -5zM546 471l9 9l-1 -14zM554 466l1 14l9 -5zM555 480l10 9l-1 -14zM565 489l11 9l-2 -15zM526 445l-1 13l7 -4zM525 458l7 8l0 -12zM532 454l0 12l6 -4zM532 466l7 9l-1 -13zM538 462l1 13l7 -4zM539 475l8 10l-1 -14zM546 471l1 14l8 -5zM547 485l10 9l-2 -14zM555 480l2 14l8 -5zM557 494l10 9l-2 -14zM565 489l2 14l9 -5zM567 503l11 9l-2 -14zM576 498l2 14l10 -5zM578 512l13 9l-3 -14zM525 458l1 13l6 -5zM526 471l7 9l-1 -14zM532 466l1 14l6 -5zM533 480l7 9l-1 -14zM539 475l1 14l7 -4zM540 489l9 10l-2 -14zM547 485l2 14l8 -5zM549 499l10 9l-2 -14zM557 494l2 14l8 -5zM559 508l11 9l-3 -14zM567 503l3 14l8 -5zM570 517l12 10l-4 -15zM578 512l4 15l9 -6zM582 527l12 8l-3 -14zM591 521l3 14l10 -6zM594 535l14 9l-4 -15zM604 529l4 15l9 -7zM608 544l14 7l-5 -14zM526 471l1 13l6 -4zM527 484l7 9l-1 -13zM533 480l1 13l6 -4zM534 493l8 10l-2 -14zM540 489l2 14l7 -4zM542 503l10 10l-3 -14zM549 499l3 14l7 -5zM552 513l10 9l-3 -14zM559 508l3 14l8 -5zM562 522l12 10l-4 -15zM570 517l4 15l8 -5zM574 532l12 9l-4 -14zM582 527l4 14l8 -6zM586 541l13 8l-5 -14zM594 535l5 14l9 -5zM599 549l14 8l-5 -13zM608 544l5 13l9 -6zM613 557l14 7l-5 -13zM622 551l5 13l9 -6zM627 564l14 7l-5 -13zM527 484l2 13l5 -4zM529 497l8 10l-3 -14zM534 493l3 14l5 -4zM537 507l8 10l-3 -14zM542 503l3 14l7 -4zM545 517l10 9l-3 -13zM552 513l3 13l7 -4zM555 526l11 10l-4 -14zM562 522l4 14l8 -4zM566 536l12 9l-4 -13zM574 532l4 13l8 -4zM578 545l13 9l-5 -13zM586 541l5 13l8 -5zM591 554l13 9l-5 -14zM599 549l5 14l9 -6zM604 563l14 7l-5 -13zM613 557l5 13l9 -6zM618 570l14 7l-5 -13zM627 564l5 13l9 -6zM632 577l15 6l-6 -12zM641 571l6 12l8 -6zM647 583l14 5l-6 -11zM655 577l6 11l9 -6zM661 588l14 4l-5 -10zM529 497l3 13l5 -3zM532 510l8 10l-3 -13zM537 507l3 13l5 -3zM540 520l9 10l-4 -13zM545 517l4 13l6 -4zM549 530l10 10l-4 -14zM555 526l4 14l7 -4zM559 540l12 10l-5 -14zM566 536l5 14l7 -5zM571 550l12 9l-5 -14zM578 545l5 14l8 -5zM583 559l13 8l-5 -13zM591 554l5 13l8 -4zM596 567l14 8l-6 -12zM604 563l6 12l8 -5zM610 575l14 7l-6 -12zM618 570l6 12l8 -5zM624 582l14 7l-6 -12zM632 577l6 12l9 -6zM638 589l15 5l-6 -11zM647 583l6 11l8 -6zM653 594l14 5l-6 -11zM661 588l6 11l8 -7zM667 599l14 4l-6 -11zM675 592l6 11l8 -7zM532 510l3 13l5 -3zM535 523l9 10l-4 -13zM540 520l4 13l5 -3zM544 533l10 10l-5 -13zM549 530l5 13l5 -3zM554 543l10 10l-5 -13zM559 540l5 13l7 -3zM564 553l12 10l-5 -13zM571 550l5 13l7 -4zM576 563l13 8l-6 -12zM583 559l6 12l7 -4zM589 571l13 9l-6 -13zM596 567l6 13l8 -5zM602 580l14 7l-6 -12zM610 575l6 12l8 -5zM616 587l14 7l-6 -12zM624 582l6 12l8 -5zM630 594l14 5l-6 -10zM638 589l6 10l9 -5zM644 599l15 5l-6 -10zM653 594l6 10l8 -5zM659 604l14 4l-6 -9zM667 599l6 9l8 -5zM535 523l5 13l4 -3zM540 536l9 10l-5 -13zM544 533l5 13l5 -3zM549 546l10 10l-5 -13zM554 543l5 13l5 -3zM559 556l11 10l-6 -13zM564 553l6 13l6 -3zM570 566l12 9l-6 -12zM576 563l6 12l7 -4zM582 575l13 8l-6 -12zM589 571l6 12l7 -3zM595 583l14 8l-7 -11zM602 580l7 11l7 -4zM609 591l13 7l-6 -11zM616 587l6 11l8 -4zM622 598l15 6l-7 -10zM630 594l7 10l7 -5zM637 604l14 5l-7 -10zM644 599l7 10l8 -5zM651 609l14 5l-6 -10zM659 604l6 10l8 -6zM540 536l5 12l4 -2zM545 548l9 10l-5 -12zM549 546l5 12l5 -2zM554 558l11 10l-6 -12zM559 556l6 12l5 -2zM565 568l12 9l-7 -11zM570 566l7 11l5 -2zM577 577l12 9l-7 -11zM582 575l7 11l6 -3zM589 586l13 8l-7 -11zM595 583l7 11l7 -3zM602 594l13 7l-6 -10zM609 591l6 10l7 -3zM615 601l14 7l-7 -10zM622 598l7 10l8 -4zM629 608l14 5l-6 -9zM637 604l6 9l8 -4zM643 613l14 5l-6 -9zM651 609l6 9l8 -4zM545 548l6 12l3 -2zM551 560l10 10l-7 -12zM554 558l7 12l4 -2zM561 570l11 9l-7 -11zM565 568l7 11l5 -2zM572 579l11 9l-6 -11zM577 577l6 11l6 -2zM583 588l13 8l-7 -10zM589 586l7 10l6 -2zM596 596l13 8l-7 -10zM602 594l7 10l6 -3zM609 604l14 7l-8 -10zM615 601l8 10l6 -3zM623 611l13 6l-7 -9zM629 608l7 9l7 -4zM636 617l14 5l-7 -9zM643 613l7 9l7 -4zM551 560l6 11l4 -1zM557 571l11 9l-7 -10zM561 570l7 10l4 -1zM568 580l11 10l-7 -11zM572 579l7 11l4 -2zM579 590l12 8l-8 -10zM583 588l8 10l5 -2zM591 598l12 8l-7 -10zM596 596l7 10l6 -2zM603 606l13 7l-7 -9zM609 604l7 9l7 -2zM616 613l14 6l-7 -8zM623 611l7 8l6 -2zM630 619l13 5l-7 -7zM636 617l7 7l7 -2zM557 571l7 10l4 -1zM564 581l11 9l-7 -10zM568 580l7 10l4 0zM575 590l11 9l-7 -9zM579 590l7 9l5 -1zM586 599l12 8l-7 -9zM591 598l7 9l5 -1zM598 607l13 7l-8 -8zM603 606l8 8l5 -1zM611 614l13 7l-8 -8zM616 613l8 8l6 -2zM624 621l13 5l-7 -7zM630 619l7 7l6 -2zM564 581l8 9l3 0zM572 590l10 9l-7 -9zM575 590l7 9l4 0zM582 599l12 8l-8 -8zM586 599l8 8l4 0zM594 607l12 8l-8 -8zM598 607l8 8l5 -1zM606 615l13 6l-8 -7zM611 614l8 7l5 0zM619 621l12 6l-7 -6zM624 621l7 6l6 -1zM572 590l7 9l3 0zM579 599l11 8l-8 -8zM582 599l8 8l4 0zM590 607l12 8l-8 -8zM594 607l8 8l4 0zM602 615l12 7l-8 -7zM606 615l8 7l5 -1zM614 622l12 6l-7 -7zM619 621l7 7l5 -1zM579 599l8 7l3 1zM587 606l11 8l-8 -7zM590 607l8 7l4 1zM598 614l12 7l-8 -6zM602 615l8 6l4 1zM610 621l12 7l-8 -6zM614 622l8 6l4 0zM587 606l8 7l3 1zM595 613l11 7l-8 -6zM598 614l8 6l4 1zM606 620l11 7l-7 -6zM610 621l7 6l5 1zM595 613l8 6l3 1zM603 619l11 7l-8 -6zM606 620l8 6l3 1zM603 619l8 5l3 2zM598 614l8 6l-11 -7zM595 613l11 7l-3 -1zM606 620l8 6l-11 -7zM603 619l11 7l-3 -2zM606 620l11 7l-3 -1z"/>
<path fill="#502600" stroke="#502600" stroke-width="1.2" d="M533 393l-5 7l6 4zM532 381l-6 -5l0 12zM526 351l1 -13l-7 11zM529 325l-5 -2l-2 13zM531 296l5 -13l-8 11zM536 283l6 -12l-9 10zM542 271l-3 -2l-6 12zM548 260l-2 -2l-7 11zM562 238l8 -9l-9 9zM578 222l0 0l-8 7zM540 425l0 -14l-6 7zM879 615l4 0l8 -8zM883 615l12 -8l-4 0zM895 607l3 -1l8 -7zM696 605l8 -7l-15 -2zM696 605l15 2l-7 -9zM718 616l9 -8l-16 -1zM718 616l16 0l-7 -8zM742 624l8 -8l-16 0zM742 624l17 0l-9 -8zM767 630l8 -8l-16 2zM767 630l16 -2l-8 -6zM791 633l7 -8l-15 3zM791 633l15 -3l-8 -5zM932 575l-1 -1l9 -10zM914 592l-8 8l9 -8zM540 425l-1 12l8 -5zM539 437l7 8l1 -13zM554 466l10 9l-1 -14zM564 475l1 14l9 -6zM588 507l3 14l9 -6zM591 521l13 8l-4 -14zM636 558l5 13l9 -7zM641 571l14 6l-5 -13zM675 592l14 4l-5 -10z"/>
<path fill="#542800" stroke="#542800" stroke-width="1.2" d="M532 381l-6 7l7 5zM532 368l-6 8l6 5zM532 368l-7 -4l1 12zM532 355l-6 -4l-1 13zM527 338l2 -13l-7 11zM529 325l3 -14l-8 12zM532 311l-5 -2l-3 14zM535 298l-4 -2l-4 13zM542 271l6 -11l-9 9zM555 249l-1 -1l-8 10zM570 229l8 -7l-8 7zM578 222l9 -7l-9 7zM587 215l0 0l-9 7zM540 411l-6 -7l0 14zM841 624l7 2l7 -7zM848 626l13 -5l-6 -2zM861 621l5 0l8 -7zM866 621l13 -6l-5 -1zM806 630l7 -8l-15 3zM806 630l15 -4l-8 -4zM828 629l7 -7l-14 4zM828 629l13 -5l-6 -2zM932 575l-8 9l8 -9zM914 592l1 0l8 -8zM923 584l-8 8l9 -8zM906 599l0 1l8 -8zM547 432l-1 13l8 -5zM546 445l8 8l0 -13zM554 453l0 13l9 -5zM574 483l2 15l9 -6zM576 498l12 9l-3 -15zM617 537l5 14l9 -6zM622 551l14 7l-5 -13zM655 577l15 5l-6 -12zM670 582l5 10l9 -6z"/>
<path fill="#582a00" stroke="#582a00" stroke-width="1.2" d="M540 397l-7 -4l1 11zM539 385l-7 -4l1 12zM532 355l-7 9l7 4zM533 342l-6 -4l-1 13zM532 311l3 -13l-8 11zM540 286l-4 -3l-5 13zM548 260l7 -11l-9 9zM555 249l8 -10l-9 9zM563 239l-1 -1l-8 10zM570 230l0 -1l-8 9zM587 215l8 -6l-8 6zM547 432l-1 -14l-6 7zM546 418l-6 -7l0 14zM540 411l0 -14l-6 7zM861 621l13 -7l-6 -1zM874 614l5 1l7 -8zM879 615l12 -8l-5 0zM891 607l4 0l7 -8zM895 607l11 -8l-4 0zM689 596l15 2l-7 -9zM711 607l8 -7l-15 -2zM711 607l16 1l-8 -8zM734 616l8 -7l-15 -1zM734 616l16 0l-8 -7zM759 624l7 -8l-16 0zM759 624l16 -2l-9 -6zM783 628l7 -8l-15 2zM783 628l15 -3l-8 -5zM940 565l-8 10l8 -11zM923 584l1 0l8 -9zM563 461l1 14l9 -6zM564 475l10 8l-1 -14zM600 515l4 14l9 -6zM604 529l13 8l-4 -14zM636 558l14 6l-5 -13zM650 564l5 13l9 -7zM684 586l5 10l8 -7z"/>
<path fill="#5c2c00" stroke="#5c2c00" stroke-width="1.2" d="M539 385l-6 8l7 4zM539 373l-7 -5l0 13zM533 342l-7 9l6 4zM534 328l-7 10l6 4zM534 328l-5 -3l-2 13zM537 315l-5 -4l-3 14zM595 209l11 -8l-8 7zM535 298l5 -12l-9 10zM540 286l5 -13l-9 10zM545 273l-3 -2l-6 12zM551 262l-3 -2l-6 11zM563 239l7 -9l-8 8zM570 230l8 -8l-8 7zM578 222l0 0l-8 7zM587 215l0 0l-9 7zM554 440l-1 -15l-6 7zM553 425l-7 -7l1 14zM546 418l0 -14l-6 7zM835 622l6 2l7 -7zM841 624l14 -5l-7 -2zM855 619l6 2l7 -8zM902 599l4 0l7 -9zM798 625l7 -8l-15 3zM798 625l15 -3l-8 -5zM821 626l6 -8l-14 4zM821 626l14 -4l-8 -4zM948 554l-8 10l7 -11zM932 575l0 0l8 -10zM922 583l-8 9l9 -8zM913 590l-7 9l8 -7zM554 440l0 13l9 -5zM554 453l9 8l0 -13zM574 483l11 9l-2 -14zM585 492l3 15l9 -6zM588 507l12 8l-3 -14zM613 523l4 14l10 -6zM617 537l14 8l-4 -14zM631 545l5 13l9 -7zM664 570l6 12l8 -8zM670 582l14 4l-6 -12z"/>
<path fill="#602e00" stroke="#602e00" stroke-width="1.2" d="M539 373l-7 8l7 4zM538 360l-6 -5l0 13zM537 315l-8 10l5 3zM540 301l-5 -3l-3 13zM595 209l8 -6l3 -2zM545 273l6 -11l-9 9zM557 251l-2 -2l-7 11zM564 241l-1 -2l-8 10zM578 222l9 -7l-9 7zM587 215l8 -7l-8 7zM595 208l0 1l-8 6zM546 404l-6 -7l0 14zM868 613l6 1l7 -8zM874 614l12 -7l-5 -1zM886 607l5 0l8 -8zM891 607l11 -8l-3 0zM704 598l8 -7l-15 -2zM704 598l15 2l-7 -9zM727 608l8 -8l-16 0zM727 608l15 1l-7 -9zM750 616l8 -8l-16 1zM750 616l16 0l-8 -8zM775 622l7 -8l-16 2zM775 622l15 -2l-8 -6zM948 554l-1 -1l8 -11zM940 565l0 -1l8 -10zM931 574l-8 10l9 -9zM913 590l1 2l8 -9zM563 448l0 13l9 -5zM563 461l10 8l-1 -13zM573 469l1 14l9 -5zM597 501l3 14l10 -6zM600 515l13 8l-3 -14zM645 551l5 13l9 -7zM650 564l14 6l-5 -13zM678 574l6 12l8 -8zM684 586l13 3l-5 -11z"/>
<path fill="#643000" stroke="#643000" stroke-width="1.2" d="M547 389l-8 -4l1 12zM538 360l-6 8l7 5zM539 346l-7 9l6 5zM539 346l-6 -4l-1 13zM540 333l-6 -5l-1 14zM540 301l-8 10l5 4zM544 288l-9 10l5 3zM544 288l-4 -2l-5 12zM549 275l-4 -2l-5 13zM551 262l6 -11l-9 9zM557 251l7 -10l-9 8zM572 231l-2 -1l-7 9zM579 223l-1 -1l-8 8zM595 208l8 -5l-8 6zM563 448l-1 -15l-8 7zM562 433l-9 -8l1 15zM553 425l0 -14l-7 7zM553 411l-7 -7l0 14zM546 404l1 -15l-7 8zM827 618l8 4l6 -9zM835 622l13 -5l-7 -4zM848 617l7 2l7 -8zM855 619l13 -6l-6 -2zM899 599l3 0l8 -9zM902 599l11 -9l-3 0zM697 589l15 2l-7 -9zM790 620l7 -9l-15 3zM790 620l15 -3l-8 -6zM813 622l7 -8l-15 3zM813 622l14 -4l-7 -4zM940 564l-8 11l8 -10zM922 583l1 1l8 -10zM583 478l2 14l10 -6zM585 492l12 9l-2 -15zM627 531l4 14l10 -7zM631 545l14 6l-4 -13zM659 557l5 13l9 -8zM664 570l14 4l-5 -12z"/>
<path fill="#683200" stroke="#683200" stroke-width="1.2" d="M546 377l-7 8l8 4zM546 377l-7 -4l0 12zM546 364l-8 -4l1 13zM540 333l-7 9l6 4zM542 319l-5 -4l-3 13zM549 275l-9 11l4 2zM554 263l-3 -1l-6 11zM603 203l11 -7l-8 5zM606 201l8 -5l3 -1zM564 241l8 -10l-9 8zM572 231l7 -8l-9 7zM587 215l0 0l-9 7zM595 209l0 -1l-8 7zM572 456l-1 -15l-8 7zM571 441l-9 -8l1 15zM862 611l6 2l8 -9zM868 613l13 -7l-5 -2zM881 606l5 1l8 -9zM886 607l13 -8l-5 -1zM719 600l8 -8l-15 -1zM719 600l16 0l-8 -8zM742 609l8 -9l-15 0zM742 609l16 -1l-8 -8zM766 616l8 -9l-16 1zM766 616l16 -2l-8 -7zM940 564l0 1l8 -11zM948 554l-8 11l8 -11zM931 574l1 1l8 -11zM921 581l-8 9l9 -7zM572 456l1 13l9 -5zM573 469l10 9l-1 -14zM597 501l13 8l-3 -15zM610 509l3 14l10 -6zM613 523l14 8l-4 -14zM641 538l4 13l10 -7zM645 551l14 6l-4 -13zM678 574l14 4l-5 -11zM692 578l5 11l8 -7z"/>
<path fill="#6c3400" stroke="#6c3400" stroke-width="1.2" d="M546 364l-7 9l7 4zM546 351l-7 -5l-1 14zM542 319l-8 9l6 5zM545 305l-5 -4l-3 14zM554 263l-9 10l4 2zM561 252l-10 10l3 1zM561 252l-4 -1l-6 11zM568 241l-4 0l-7 10zM617 195l-3 1l10 -6zM603 203l8 -5l3 -2zM579 223l8 -8l-9 7zM587 215l8 -6l-8 6zM595 209l8 -6l-8 5zM603 203l0 0l-8 5zM562 433l-1 -15l-8 7zM561 418l-8 -7l0 14zM553 411l0 -15l-7 8zM553 396l-6 -7l-1 15zM820 614l7 4l7 -9zM827 618l14 -5l-7 -4zM841 613l7 4l7 -9zM848 617l14 -6l-7 -3zM894 598l5 1l7 -9zM899 599l11 -9l-4 0zM910 590l3 0l8 -9zM712 591l8 -8l-15 -1zM712 591l15 1l-7 -9zM735 600l7 -8l-15 0zM735 600l15 0l-8 -8zM758 608l8 -8l-16 0zM758 608l16 -1l-8 -7zM782 614l7 -9l-15 2zM782 614l15 -3l-8 -6zM805 617l7 -9l-15 3zM805 617l15 -3l-8 -6zM962 530l-7 12l7 -12zM948 554l0 0l8 -11zM956 543l-8 11l7 -12zM930 573l-8 10l9 -9zM582 464l1 14l10 -6zM583 478l12 8l-2 -14zM595 486l2 15l10 -7zM623 517l4 14l10 -7zM627 531l14 7l-4 -14zM659 557l14 5l-4 -12zM673 562l5 12l9 -7z"/>
<path fill="#703600" stroke="#703600" stroke-width="1.2" d="M554 382l-8 -5l1 12zM546 351l-8 9l8 4zM547 337l-7 -4l-1 13zM545 305l-8 10l5 4zM549 291l-9 10l5 4zM549 291l-5 -3l-4 13zM554 278l-5 -3l-5 13zM568 241l-11 10l4 1zM575 231l-11 10l4 0zM575 231l-3 0l-8 10zM582 223l-3 0l-7 8zM617 195l7 -5l4 -1zM603 203l8 -5l-8 5zM582 464l-2 -15l-8 7zM580 449l-9 -8l1 15zM571 441l-1 -15l-8 7zM570 426l-9 -8l1 15zM561 418l0 -15l-8 8zM561 403l-8 -7l0 15zM553 396l1 -14l-7 7zM855 608l7 3l7 -10zM862 611l14 -7l-7 -3zM876 604l5 2l8 -10zM881 606l13 -8l-5 -2zM956 543l-1 -1l7 -12zM939 564l-8 10l9 -10zM921 581l1 2l8 -10zM607 494l3 15l10 -7zM610 509l13 8l-3 -15zM641 538l14 6l-5 -13zM655 544l4 13l10 -7zM687 567l5 11l9 -7zM692 578l13 4l-4 -11z"/>
<path fill="#743700" stroke="#743700" stroke-width="1.2" d="M554 369l-8 -5l0 13zM547 337l-8 9l7 5zM549 323l-7 -4l-2 14zM554 278l-10 10l5 3zM559 266l-5 -3l-5 12zM565 254l-4 -2l-7 11zM582 223l-10 8l3 0zM590 215l-11 8l3 0zM590 215l-3 0l-8 8zM598 208l-3 1l-8 6zM606 201l-3 2l-8 6zM628 189l-4 1l11 -6zM614 196l7 -4l3 -2zM614 196l-3 2l10 -6zM593 472l-2 -14l-9 6zM591 458l-11 -9l2 15zM812 608l8 6l6 -10zM820 614l14 -5l-8 -5zM834 609l7 4l7 -9zM841 613l14 -5l-7 -4zM889 596l5 2l7 -10zM894 598l12 -8l-5 -2zM906 590l4 0l7 -10zM910 590l11 -9l-4 -1zM705 582l15 1l-7 -9zM727 592l8 -9l-15 0zM727 592l15 0l-7 -9zM750 600l8 -8l-16 0zM750 600l16 0l-8 -8zM774 607l7 -9l-15 2zM774 607l15 -2l-8 -7zM797 611l7 -8l-15 2zM797 611l15 -3l-8 -5zM962 530l0 0l7 -12zM939 564l1 0l7 -11zM947 553l-7 11l8 -10zM930 573l1 1l8 -10zM593 472l2 14l10 -6zM595 486l12 8l-2 -14zM623 517l14 7l-4 -14zM637 524l4 14l9 -7zM669 550l4 12l9 -7zM673 562l14 5l-5 -12zM701 571l4 11l8 -8z"/>
<path fill="#793900" stroke="#793900" stroke-width="1.2" d="M554 369l-8 8l8 5zM554 356l-8 8l8 5zM554 356l-8 -5l0 13zM549 323l-9 10l7 4zM552 309l-10 10l7 4zM552 309l-7 -4l-3 14zM555 295l-6 -4l-4 14zM559 266l-10 9l5 3zM565 254l-11 9l5 3zM572 242l-4 -1l-7 11zM598 208l-11 7l3 0zM606 201l-11 8l3 -1zM614 196l-11 7l3 -2zM614 196l-3 2l-8 5zM621 192l-10 6l3 -2zM628 189l7 -5l5 -1zM580 449l-1 -15l-8 7zM579 434l-9 -8l1 15zM570 426l-1 -15l-8 7zM569 411l-8 -8l0 15zM561 403l1 -15l-9 8zM562 388l-8 -6l-1 14zM848 604l7 4l7 -10zM855 608l14 -7l-7 -3zM869 601l7 3l7 -10zM876 604l13 -8l-6 -2zM917 580l4 1l7 -10zM962 530l-6 13l6 -13zM947 553l1 1l7 -12zM955 542l-7 12l8 -11zM928 571l-7 10l9 -8zM605 480l2 14l10 -6zM607 494l13 8l-3 -14zM620 502l3 15l10 -7zM650 531l5 13l9 -7zM655 544l14 6l-5 -13zM682 555l5 12l9 -8zM687 567l14 4l-5 -12z"/>
<path fill="#7d3b00" stroke="#7d3b00" stroke-width="1.2" d="M555 342l-9 9l8 5zM555 342l-8 -5l-1 14zM555 295l-10 10l7 4zM559 282l-5 -4l-5 13zM572 242l-11 10l4 2zM579 232l-11 9l4 1zM579 232l-4 -1l-7 10zM586 223l-4 0l-7 8zM594 214l-4 1l-8 8zM640 183l-5 1l13 -5zM624 190l7 -4l4 -2zM624 190l-3 2l10 -6zM605 480l-2 -14l-10 6zM603 466l-12 -8l2 14zM591 458l-1 -16l-10 7zM590 442l-11 -8l1 15zM804 603l8 5l6 -9zM812 608l14 -4l-8 -5zM826 604l8 5l6 -10zM834 609l14 -5l-8 -5zM889 596l12 -8l-5 -2zM901 588l5 2l7 -11zM906 590l11 -10l-4 -1zM720 583l8 -8l-15 -1zM720 583l15 0l-7 -8zM742 592l8 -9l-15 0zM742 592l16 0l-8 -9zM766 600l7 -9l-15 1zM766 600l15 -2l-8 -7zM789 605l7 -9l-15 2zM789 605l15 -2l-8 -7zM969 518l-7 12l7 -12zM955 542l1 1l6 -13zM928 571l2 2l7 -11zM937 562l-7 11l9 -9zM633 510l4 14l9 -7zM637 524l13 7l-4 -14zM664 537l5 13l9 -8zM669 550l13 5l-4 -13zM696 559l5 12l8 -8zM701 571l12 3l-4 -11z"/>
<path fill="#813d00" stroke="#813d00" stroke-width="1.2" d="M563 374l-9 -5l0 13zM563 361l-9 -5l0 13zM557 328l-10 9l8 5zM557 328l-8 -5l-2 14zM559 314l-7 -5l-3 14zM559 282l-10 9l6 4zM564 268l-5 -2l-5 12zM570 256l-5 -2l-6 12zM586 223l-11 8l4 1zM594 214l-12 9l4 0zM602 207l-4 1l-8 7zM610 200l-4 1l-8 7zM617 195l-3 1l-8 5zM631 186l-10 6l3 -2zM621 192l-7 4l10 -6zM640 183l8 -4l5 -1zM617 488l-2 -14l-10 6zM579 434l0 -15l-9 7zM579 419l-10 -8l1 15zM569 411l1 -15l-9 7zM570 396l-8 -8l-1 15zM562 388l1 -14l-9 8zM848 604l14 -6l-7 -4zM862 598l7 3l7 -10zM869 601l14 -7l-7 -3zM883 594l6 2l7 -10zM913 579l4 1l7 -10zM917 580l11 -9l-4 -1zM713 574l15 1l-7 -9zM975 505l-6 13l5 -14zM962 530l0 0l7 -12zM954 541l-7 12l8 -11zM937 562l2 2l6 -12zM945 552l-6 12l8 -11zM617 488l3 14l10 -6zM620 502l13 8l-3 -14zM646 517l4 14l10 -8zM650 531l14 6l-4 -14zM682 555l14 4l-5 -12z"/>
<path fill="#853f00" stroke="#853f00" stroke-width="1.2" d="M563 361l-9 8l9 5zM564 347l-9 -5l-1 14zM559 314l-10 9l8 5zM562 299l-7 -4l-3 14zM564 268l-10 10l5 4zM570 256l-11 10l5 2zM577 244l-5 -2l-7 12zM583 233l-4 -1l-7 10zM602 207l-12 8l4 -1zM610 200l-12 8l4 -1zM617 195l-11 6l4 -1zM624 190l-10 6l3 -1zM653 178l-5 1l12 -5zM635 184l8 -3l5 -2zM635 184l-4 2l12 -5zM615 474l-12 -8l2 14zM603 466l-2 -15l-10 7zM601 451l-11 -9l1 16zM590 442l-1 -15l-10 7zM589 427l-10 -8l0 15zM579 419l0 -16l-10 8zM796 596l8 7l6 -11zM804 603l14 -4l-8 -7zM818 599l8 5l6 -10zM826 604l14 -5l-8 -5zM840 599l8 5l7 -10zM896 586l5 2l7 -11zM901 588l12 -9l-5 -2zM735 583l7 -8l-14 0zM735 583l15 0l-8 -8zM758 592l7 -9l-15 0zM758 592l15 -1l-8 -8zM781 598l7 -9l-15 2zM781 598l15 -2l-8 -7zM975 505l-1 -1l5 -13zM969 518l0 0l6 -13zM962 530l-7 12l7 -12zM945 552l2 1l7 -12zM934 560l-6 11l9 -9zM630 496l3 14l10 -7zM633 510l13 7l-3 -14zM664 537l14 5l-5 -13zM678 542l4 13l9 -8zM696 559l13 4l-5 -12zM709 563l4 11l8 -8z"/>
<path fill="#894100" stroke="#894100" stroke-width="1.2" d="M564 347l-10 9l9 5zM565 333l-8 -5l-2 14zM562 299l-10 10l7 5zM566 285l-7 -3l-4 13zM577 244l-12 10l5 2zM583 233l-11 9l5 2zM591 224l-5 -1l-7 9zM598 215l-4 -1l-8 9zM643 181l-12 5l4 -2zM631 186l-7 4l11 -6zM630 496l-2 -14l-11 6zM628 482l-13 -8l2 14zM615 474l-2 -15l-10 7zM579 403l-9 -7l-1 15zM570 396l1 -16l-9 8zM571 380l-8 -6l-1 14zM855 594l7 4l7 -11zM862 598l14 -7l-7 -4zM876 591l7 3l7 -11zM883 594l13 -8l-6 -3zM913 579l11 -9l-4 -2zM924 570l4 1l6 -11zM728 575l7 -8l-14 -1zM728 575l14 0l-7 -8zM750 583l7 -8l-15 0zM750 583l15 0l-8 -8zM773 591l6 -9l-14 1zM773 591l15 -2l-9 -7zM969 518l-7 12l7 -12zM954 541l1 1l7 -12zM943 551l-6 11l8 -10zM646 517l14 6l-4 -13zM660 523l4 14l9 -8zM691 547l5 12l8 -8zM709 563l12 3l-4 -11z"/>
<path fill="#8d4300" stroke="#8d4300" stroke-width="1.2" d="M572 366l-9 -5l0 13zM565 333l-10 9l9 5zM567 319l-8 -5l-2 14zM566 285l-11 10l7 4zM571 272l-7 -4l-5 14zM576 259l-6 -3l-6 12zM591 224l-12 8l4 1zM598 215l-12 8l5 1zM606 207l-12 7l4 1zM606 207l-4 0l-8 7zM614 200l-4 0l-8 7zM622 194l-5 1l-7 5zM635 184l-11 6l4 -1zM624 190l-7 5l11 -6zM648 179l7 -3l5 -2zM648 179l-5 2l12 -5zM643 503l-2 -14l-11 7zM613 459l-12 -8l2 15zM601 451l-1 -16l-10 7zM600 435l-11 -8l1 15zM589 427l-1 -16l-9 8zM588 411l-9 -8l0 16zM579 403l0 -15l-9 8zM579 388l-8 -8l-1 16zM571 380l1 -14l-9 8zM788 589l8 7l5 -10zM796 596l14 -4l-9 -6zM810 592l8 7l6 -11zM818 599l14 -5l-8 -6zM832 594l8 5l7 -10zM840 599l15 -5l-8 -5zM890 583l6 3l7 -11zM896 586l12 -9l-5 -2zM908 577l5 2l7 -11zM975 505l-6 13l6 -13zM962 530l0 0l7 -12zM952 540l-7 12l9 -11zM934 560l3 2l6 -11zM643 503l3 14l10 -7zM673 529l5 13l9 -7zM678 542l13 5l-4 -12zM704 551l5 12l8 -8z"/>
<path fill="#914500" stroke="#914500" stroke-width="1.2" d="M573 352l-10 9l9 5zM573 352l-9 -5l-1 14zM567 319l-10 9l8 5zM570 304l-8 -5l-3 15zM571 272l-12 10l7 3zM576 259l-12 9l7 4zM582 247l-5 -3l-7 12zM614 200l-12 7l4 0zM622 194l-12 6l4 0zM655 176l-12 5l5 -2zM643 181l-8 3l13 -5zM628 189l-11 6l5 -1zM666 173l-6 1l14 -4zM641 489l-13 -7l2 14zM628 482l-2 -15l-11 7zM626 467l-13 -8l2 15zM779 582l9 7l5 -11zM788 589l13 -3l-8 -8zM801 586l9 6l5 -10zM847 589l8 5l6 -12zM855 594l14 -7l-8 -5zM869 587l7 4l7 -11zM876 591l14 -8l-7 -3zM920 568l4 2l6 -12zM924 570l10 -10l-4 -2zM721 566l14 1l-6 -9zM742 575l8 -8l-15 0zM742 575l15 0l-7 -8zM765 583l6 -9l-14 1zM765 583l14 -1l-8 -8zM984 478l-5 13l4 -14zM975 505l0 0l5 -14zM980 491l-5 14l4 -14zM969 518l0 0l6 -13zM960 529l-6 12l8 -11zM943 551l2 1l7 -12zM656 510l4 13l9 -7zM660 523l13 6l-4 -13zM687 535l4 12l9 -8zM691 547l13 4l-4 -12zM717 555l4 11l8 -8z"/>
<path fill="#954700" stroke="#954700" stroke-width="1.2" d="M574 338l-9 -5l-1 14zM570 304l-11 10l8 5zM574 290l-8 -5l-4 14zM582 247l-12 9l6 3zM589 236l-12 8l5 3zM589 236l-6 -3l-6 11zM596 225l-5 -1l-8 9zM603 216l-5 -1l-7 9zM648 179l-13 5l5 -1zM635 184l-7 5l12 -6zM628 189l-6 5l11 -6zM660 174l8 -3l6 -1zM660 174l-5 2l13 -5zM656 510l-2 -14l-11 7zM654 496l-13 -7l2 14zM641 489l-2 -14l-11 7zM613 459l-1 -16l-11 8zM612 443l-12 -8l1 16zM600 435l-1 -16l-10 8zM599 419l-11 -8l1 16zM588 411l1 -16l-10 8zM589 395l-10 -7l0 15zM579 388l1 -16l-9 8zM580 372l-8 -6l-1 14zM810 592l14 -4l-9 -6zM824 588l8 6l6 -11zM832 594l15 -5l-9 -6zM903 575l5 2l7 -11zM908 577l12 -9l-5 -2zM930 558l4 2l6 -12zM735 567l7 -9l-13 0zM735 567l15 0l-8 -9zM757 575l7 -9l-14 1zM980 491l-1 0l5 -13zM967 517l-5 13l7 -12zM952 540l2 1l6 -12zM940 548l-6 12l9 -9zM669 516l4 13l10 -7zM673 529l14 6l-4 -13zM700 539l4 12l8 -7zM704 551l13 4l-5 -11zM717 555l12 3l-5 -11z"/>
<path fill="#994900" stroke="#994900" stroke-width="1.2" d="M582 358l-9 -6l-1 14zM574 338l-10 9l9 5zM576 324l-9 -5l-2 14zM574 290l-12 9l8 5zM578 276l-12 9l8 5zM578 276l-7 -4l-5 13zM583 263l-7 -4l-5 13zM596 225l-13 8l6 3zM603 216l-12 8l5 1zM611 207l-13 8l5 1zM611 207l-5 0l-8 8zM619 200l-5 0l-8 7zM626 194l-4 0l-8 6zM655 176l-7 3l12 -5zM640 183l-12 6l5 -1zM680 169l-6 1l15 -4zM669 516l-1 -13l-12 7zM668 503l-14 -7l2 14zM639 475l-13 -8l2 15zM626 467l-2 -16l-11 8zM624 451l-12 -8l1 16zM771 574l8 8l5 -11zM779 582l14 -4l-9 -7zM793 578l8 8l5 -12zM801 586l14 -4l-9 -8zM815 582l9 6l5 -11zM824 588l14 -5l-9 -6zM838 583l9 6l6 -12zM847 589l14 -7l-8 -5zM861 582l8 5l6 -12zM869 587l14 -7l-8 -5zM883 580l7 3l6 -12zM890 583l13 -8l-7 -4zM920 568l10 -10l-4 -2zM757 575l14 -1l-7 -8zM984 478l-1 -1l4 -13zM974 504l-5 14l6 -13zM960 529l2 1l5 -13zM949 538l-6 13l9 -11zM683 522l4 13l8 -8zM687 535l13 4l-5 -12zM712 544l5 11l7 -8z"/>
<path fill="#9d4b00" stroke="#9d4b00" stroke-width="1.2" d="M576 324l-11 9l9 5zM578 309l-8 -5l-3 15zM583 263l-12 9l7 4zM589 250l-7 -3l-6 12zM619 200l-13 7l5 0zM626 194l-12 6l5 0zM668 171l-13 5l5 -2zM660 174l-12 5l5 -1zM648 179l-8 4l13 -5zM633 188l-11 6l4 0zM674 170l8 -2l7 -2zM674 170l-6 1l14 -3zM683 522l-2 -13l-12 7zM681 509l-13 -6l1 13zM654 496l-2 -14l-11 7zM652 482l-13 -7l2 14zM612 443l-1 -16l-11 8zM611 427l-12 -8l1 16zM599 419l0 -16l-11 8zM599 403l-10 -8l-1 16zM589 395l1 -16l-11 9zM590 379l-10 -7l-1 16zM580 372l2 -14l-10 8zM764 566l7 8l5 -11zM771 574l13 -3l-8 -8zM896 571l7 4l6 -12zM903 575l12 -9l-6 -3zM915 566l5 2l6 -12zM930 558l10 -10l-4 -2zM729 558l13 0l-6 -8zM750 567l6 -9l-14 0zM750 567l14 -1l-8 -8zM984 478l-4 13l4 -13zM974 504l1 1l4 -14zM979 491l-4 14l5 -14zM967 517l2 1l5 -14zM957 527l-5 13l8 -11zM940 548l3 3l6 -13zM695 527l5 12l8 -7zM700 539l12 5l-4 -12zM724 547l5 11l7 -8z"/>
<path fill="#a14d00" stroke="#a14d00" stroke-width="1.2" d="M583 344l-10 8l9 6zM583 344l-9 -6l-1 14zM578 309l-11 10l9 5zM582 295l-8 -5l-4 14zM589 250l-13 9l7 4zM595 238l-13 9l7 3zM595 238l-6 -2l-7 11zM602 227l-6 -2l-7 11zM609 218l-6 -2l-7 9zM668 171l-8 3l14 -4zM653 178l-13 5l5 0zM640 183l-7 5l12 -5zM633 188l-7 6l12 -6zM695 166l-6 0l14 -2zM695 527l-1 -12l-11 7zM694 515l-13 -6l2 13zM668 503l-2 -14l-12 7zM666 489l-14 -7l2 14zM639 475l-2 -16l-11 8zM637 459l-13 -8l2 16zM624 451l-1 -16l-11 8zM623 435l-12 -8l1 16zM784 571l9 7l5 -11zM793 578l13 -4l-8 -7zM806 574l9 8l5 -12zM815 582l14 -5l-9 -7zM829 577l9 6l6 -12zM838 583l15 -6l-9 -6zM853 577l8 5l6 -12zM861 582l14 -7l-8 -5zM875 575l8 5l6 -13zM883 580l13 -9l-7 -4zM926 556l4 2l6 -12zM742 558l7 -8l-13 0zM742 558l14 0l-7 -8zM990 450l-3 14l2 -14zM987 464l-3 14l3 -14zM979 491l1 0l4 -13zM965 516l-5 13l7 -12zM949 538l3 2l5 -13zM708 532l4 12l8 -8zM712 544l12 3l-4 -11zM724 547l12 3l-5 -11z"/>
<path fill="#a54f00" stroke="#a54f00" stroke-width="1.2" d="M585 329l-11 9l9 6zM585 329l-9 -5l-2 14zM582 295l-12 9l8 5zM586 281l-12 9l8 5zM586 281l-8 -5l-4 14zM591 267l-8 -4l-5 13zM602 227l-13 9l6 2zM609 218l-13 7l6 2zM616 209l-13 7l6 2zM616 209l-5 -2l-8 9zM624 201l-5 -1l-8 7zM631 194l-5 0l-7 6zM682 168l-14 3l6 -1zM660 174l-7 4l13 -5zM645 183l-12 5l5 0zM689 166l-7 2l15 -4zM708 532l-1 -12l-12 7zM707 520l-13 -5l1 12zM681 509l-1 -13l-12 7zM652 482l-1 -15l-12 8zM651 467l-14 -8l2 16zM611 427l0 -16l-12 8zM611 411l-12 -8l0 16zM599 403l1 -16l-11 8zM600 387l-10 -8l-1 16zM590 379l1 -15l-11 8zM591 364l-9 -6l-2 14zM756 558l8 8l4 -11zM764 566l12 -3l-8 -8zM776 563l8 8l5 -12zM784 571l14 -4l-9 -8zM896 571l13 -8l-7 -4zM909 563l6 3l5 -13zM915 566l11 -10l-6 -3zM936 546l4 2l5 -12zM736 550l13 0l-7 -7zM987 464l0 0l3 -14zM984 478l0 0l3 -14zM972 503l-5 14l7 -13zM957 527l3 2l5 -13zM945 536l-5 12l9 -10zM720 536l4 11l7 -8z"/>
<path fill="#a95100" stroke="#a95100" stroke-width="1.2" d="M593 349l-10 -5l-1 14zM588 315l-12 9l9 5zM588 315l-10 -6l-2 15zM591 267l-13 9l8 5zM596 254l-7 -4l-6 13zM624 201l-13 6l5 2zM631 194l-12 6l5 1zM682 168l-8 2l15 -4zM674 170l-14 4l6 -1zM666 173l-13 5l5 0zM653 178l-8 5l13 -5zM638 188l-12 6l5 0zM711 164l-8 0l16 -2zM689 166l8 -2l6 0zM720 536l-1 -11l-11 7zM719 525l-12 -5l1 12zM694 515l-1 -13l-12 7zM680 496l-14 -7l2 14zM666 489l-1 -14l-13 7zM637 459l-1 -15l-12 7zM636 444l-13 -9l1 16zM623 435l0 -16l-12 8zM591 364l2 -15l-11 9zM749 550l7 8l5 -11zM756 558l12 -3l-7 -8zM798 567l8 7l5 -12zM806 574l14 -4l-9 -8zM820 570l9 7l6 -13zM829 577l15 -6l-9 -7zM844 571l9 6l5 -13zM853 577l14 -7l-9 -6zM867 570l8 5l6 -12zM875 575l14 -8l-8 -4zM889 567l7 4l6 -12zM920 553l6 3l5 -13zM926 556l10 -10l-5 -3zM990 450l-1 0l2 -13zM983 477l-4 14l5 -13zM972 503l2 1l4 -13zM978 491l-4 13l5 -13zM965 516l2 1l5 -14zM945 536l4 2l5 -12zM954 526l-5 12l8 -11zM731 539l5 11l6 -7z"/>
<path fill="#ad5300" stroke="#ad5300" stroke-width="1.2" d="M595 335l-10 -6l-2 15zM591 301l-13 8l10 6zM591 301l-9 -6l-4 14zM596 254l-13 9l8 4zM602 242l-13 8l7 4zM602 242l-7 -4l-6 12zM609 231l-7 -4l-7 11zM615 220l-6 -2l-7 9zM697 164l-15 4l7 -2zM674 170l-8 3l14 -4zM658 178l-13 5l6 0zM645 183l-7 5l13 -5zM638 188l-7 6l13 -5zM703 164l-6 0l15 -2zM742 543l0 -10l-11 6zM731 539l0 -10l-11 7zM731 529l-12 -4l1 11zM707 520l-1 -12l-12 7zM693 502l-13 -6l1 13zM665 475l-14 -8l1 15zM651 467l-1 -15l-13 7zM623 419l-12 -8l0 16zM611 411l0 -16l-12 8zM611 395l-11 -8l-1 16zM600 387l1 -16l-11 8zM601 371l-10 -7l-1 15zM742 543l7 7l4 -11zM749 550l12 -3l-8 -8zM768 555l8 8l5 -12zM776 563l13 -4l-8 -8zM789 559l9 8l4 -12zM902 559l7 4l5 -13zM909 563l11 -10l-6 -3zM931 543l5 3l5 -13zM936 546l9 -10l-4 -3zM990 450l-3 14l3 -14zM987 464l-3 14l3 -14zM978 491l1 0l4 -14zM954 526l3 1l5 -13zM962 514l-5 13l8 -11z"/>
<path fill="#b15500" stroke="#b15500" stroke-width="1.2" d="M595 335l-12 9l10 5zM597 321l-9 -6l-3 14zM594 286l-12 9l9 6zM594 286l-8 -5l-4 14zM599 272l-8 -5l-5 14zM609 231l-14 7l7 4zM615 220l-13 7l7 4zM623 211l-7 -2l-7 9zM630 203l-6 -2l-8 8zM637 195l-6 -1l-7 7zM689 166l-15 4l6 -1zM666 173l-8 5l14 -5zM651 183l-13 5l6 1zM726 162l-7 0l16 -1zM703 164l9 -2l7 0zM742 533l-11 -4l0 10zM719 525l0 -12l-12 7zM706 508l-13 -6l1 13zM680 496l-2 -14l-12 7zM678 482l-13 -7l1 14zM650 452l-14 -8l1 15zM636 444l0 -17l-13 8zM636 427l-13 -8l0 16zM623 419l0 -16l-12 8zM611 395l1 -16l-12 8zM612 379l-11 -8l-1 16zM601 371l2 -15l-12 8zM603 356l-10 -7l-2 15zM761 547l7 8l5 -11zM768 555l13 -4l-8 -7zM798 567l13 -5l-9 -7zM811 562l9 8l5 -13zM820 570l15 -6l-10 -7zM835 564l9 7l5 -13zM844 571l14 -7l-9 -6zM858 564l9 6l5 -13zM867 570l14 -7l-9 -6zM881 563l8 4l5 -13zM889 567l13 -8l-8 -5zM920 553l11 -10l-6 -3zM993 424l-2 13l1 -13zM992 437l-2 13l1 -13zM987 464l0 0l3 -14zM983 477l1 1l3 -14zM975 490l-3 13l6 -12zM962 514l3 2l4 -14zM969 502l-4 14l7 -13zM950 523l-5 13l9 -10zM742 533l0 10l11 -4z"/>
<path fill="#b55600" stroke="#b55600" stroke-width="1.2" d="M605 341l-10 -6l-2 14zM597 321l-12 8l10 6zM600 307l-9 -6l-3 14zM599 272l-13 9l8 5zM604 259l-8 -5l-5 13zM623 211l-14 7l6 2zM630 203l-14 6l7 2zM637 195l-13 6l6 2zM712 162l-15 2l6 0zM697 164l-8 2l14 -2zM680 169l-14 4l6 0zM658 178l-7 5l14 -5zM644 189l-13 5l6 1zM719 162l-7 0l15 -1zM742 533l0 -11l-11 7zM731 529l0 -11l-12 7zM731 518l-12 -5l0 12zM719 513l-13 -5l1 12zM693 502l-1 -13l-12 7zM692 489l-14 -7l2 14zM665 475l-1 -15l-13 7zM664 460l-14 -8l1 15zM623 403l-12 -8l0 16zM753 539l8 8l4 -11zM761 547l12 -3l-8 -8zM781 551l8 8l5 -12zM789 559l13 -4l-8 -8zM802 555l9 7l5 -12zM894 554l8 5l5 -14zM902 559l12 -9l-7 -5zM914 550l6 3l5 -13zM931 543l10 -10l-5 -3zM941 533l4 3l5 -13zM993 424l-1 0l1 -13zM992 437l-1 0l2 -13zM990 450l0 0l2 -13zM981 477l-3 14l5 -14zM969 502l3 1l3 -13zM958 512l-4 14l8 -12zM742 533l11 6l1 -10z"/>
<path fill="#b95800" stroke="#b95800" stroke-width="1.2" d="M600 307l-12 8l9 6zM604 292l-10 -6l-3 15zM604 259l-13 8l8 5zM610 246l-14 8l8 5zM610 246l-8 -4l-6 12zM616 234l-7 -3l-7 11zM622 224l-7 -4l-6 11zM703 164l-14 2l6 0zM689 166l-9 3l15 -3zM672 173l-14 5l7 0zM665 178l-14 5l6 1zM651 183l-7 6l13 -5zM644 189l-7 6l13 -5zM742 162l-7 -1l15 0zM719 162l8 -1l8 0zM742 522l-11 -4l0 11zM706 508l-1 -13l-12 7zM705 495l-13 -6l1 13zM678 482l-1 -15l-12 8zM677 467l-13 -7l1 15zM650 452l-1 -16l-13 8zM649 436l-13 -9l0 17zM636 427l-1 -16l-12 8zM635 411l-12 -8l0 16zM623 403l0 -17l-12 9zM623 386l-11 -7l-1 16zM612 379l1 -16l-12 8zM613 363l-10 -7l-2 15zM603 356l2 -15l-12 8zM773 544l8 7l4 -12zM781 551l13 -4l-9 -8zM811 562l14 -5l-9 -7zM825 557l10 7l5 -13zM835 564l14 -6l-9 -7zM849 558l9 6l5 -13zM858 564l14 -7l-9 -6zM872 557l9 6l5 -14zM881 563l13 -9l-8 -5zM925 540l6 3l5 -13zM989 450l-2 14l3 -14zM985 463l-2 14l4 -13zM975 490l3 1l3 -14zM965 501l-3 13l7 -12zM950 523l4 3l4 -14zM742 522l0 11l12 -4zM754 529l-1 10l12 -3z"/>
<path fill="#bd5a00" stroke="#bd5a00" stroke-width="1.2" d="M607 327l-12 8l10 6zM607 327l-10 -6l-2 14zM604 292l-13 9l9 6zM608 278l-9 -6l-5 14zM616 234l-14 8l8 4zM622 224l-13 7l7 3zM629 214l-6 -3l-8 9zM636 205l-6 -2l-7 8zM643 197l-6 -2l-7 8zM727 161l-15 1l7 0zM712 162l-9 2l16 -2zM695 166l-15 3l7 0zM680 169l-8 4l15 -4zM657 184l-13 5l6 1zM735 161l-8 0l15 -1zM731 518l0 -12l-12 7zM719 513l-1 -12l-12 7zM718 501l-13 -6l1 13zM692 489l-1 -15l-13 8zM664 460l-1 -16l-13 8zM663 444l-14 -8l1 16zM765 536l8 8l4 -12zM773 544l12 -5l-8 -7zM794 547l8 8l5 -13zM802 555l14 -5l-9 -8zM816 550l9 7l5 -13zM894 554l13 -9l-8 -4zM907 545l7 5l5 -14zM914 550l11 -10l-6 -4zM936 530l5 3l4 -13zM941 533l9 -10l-5 -3zM993 411l0 13l0 -13zM993 424l-1 13l1 -13zM991 437l-1 13l2 -13zM985 463l2 1l2 -14zM981 477l2 0l2 -14zM972 489l-3 13l6 -12zM958 512l4 2l3 -13zM993 398l0 13l-1 -13z"/>
<path fill="#c15c00" stroke="#c15c00" stroke-width="1.2" d="M610 313l-13 8l10 6zM610 313l-10 -6l-3 14zM608 278l-14 8l10 6zM613 264l-9 -5l-5 13zM629 214l-14 6l7 4zM636 205l-13 6l6 3zM643 197l-13 6l6 2zM719 162l-16 2l8 0zM703 164l-8 2l16 -2zM687 169l-15 4l7 1zM672 173l-7 5l14 -4zM665 178l-8 6l14 -5zM650 190l-13 5l6 2zM758 162l-8 -1l16 1zM735 161l7 -1l8 1zM742 522l0 -12l-11 8zM742 510l-11 -4l0 12zM731 506l-13 -5l1 12zM705 495l0 -14l-13 8zM691 474l-14 -7l1 15zM677 467l0 -15l-13 8zM649 436l0 -17l-13 8zM649 419l-14 -8l1 16zM635 411l1 -17l-13 9zM636 394l-13 -8l0 17zM623 386l1 -16l-12 9zM624 370l-11 -7l-1 16zM613 363l2 -15l-12 8zM615 348l-10 -7l-2 15zM785 539l9 8l4 -12zM794 547l13 -5l-9 -7zM825 557l15 -6l-10 -7zM840 551l9 7l5 -13zM849 558l14 -7l-9 -6zM863 551l9 6l5 -13zM872 557l14 -8l-9 -5zM886 549l8 5l5 -13zM919 536l6 4l5 -14zM925 540l11 -10l-6 -4zM945 520l5 3l3 -13zM993 424l0 0l0 -13zM991 437l1 0l1 -13zM989 450l1 0l1 -13zM978 476l-3 14l6 -13zM965 501l4 1l3 -13zM953 510l-3 13l8 -11zM742 522l12 7l0 -11zM754 529l11 7l0 -11zM765 525l0 11l12 -4zM991 385l2 13l-1 0zM993 398l0 13l0 0z"/>
<path fill="#c55e00" stroke="#c55e00" stroke-width="1.2" d="M617 333l-10 -6l-2 14zM613 298l-13 9l10 6zM613 298l-9 -6l-4 15zM613 264l-14 8l9 6zM618 251l-14 8l9 5zM618 251l-8 -5l-6 13zM624 239l-8 -5l-6 12zM630 228l-8 -4l-6 10zM742 160l-15 1l8 0zM727 161l-8 1l16 -1zM711 164l-16 2l7 0zM695 166l-8 3l15 -3zM679 174l-14 4l6 1zM657 184l-7 6l14 -5zM650 190l-7 7l14 -5zM774 164l-8 -2l15 2zM750 161l8 0l8 1zM750 161l-8 -1l16 1zM718 501l0 -14l-13 8zM718 487l-13 -6l0 14zM705 481l-14 -7l1 15zM691 474l-1 -15l-13 8zM677 452l-14 -8l1 16zM663 444l-1 -17l-13 9zM615 348l2 -15l-12 8zM777 532l8 7l4 -12zM785 539l13 -4l-9 -8zM807 542l9 8l5 -13zM816 550l14 -6l-9 -7zM830 544l10 7l4 -13zM886 549l13 -8l-9 -6zM899 541l8 4l4 -13zM907 545l12 -9l-8 -4zM930 526l6 4l3 -13zM936 530l9 -10l-6 -3zM987 450l-2 13l4 -13zM978 476l3 1l2 -14zM983 463l-2 14l4 -14zM972 489l3 1l3 -14zM953 510l5 2l3 -13zM961 499l-3 13l7 -11zM742 510l0 12l12 -4zM754 518l0 11l11 -4z"/>
<path fill="#c96000" stroke="#c96000" stroke-width="1.2" d="M620 319l-13 8l10 6zM620 319l-10 -6l-3 14zM617 284l-13 8l9 6zM617 284l-9 -6l-4 14zM624 239l-14 7l8 5zM630 228l-14 6l8 5zM637 218l-8 -4l-7 10zM643 208l-7 -3l-7 9zM650 200l-7 -3l-7 8zM735 161l-16 1l7 0zM719 162l-8 2l15 -2zM702 166l-15 3l7 1zM687 169l-8 5l15 -4zM671 179l-14 5l7 1zM664 185l-14 5l7 2zM742 510l0 -12l-11 8zM731 506l-1 -13l-12 8zM730 493l-12 -6l0 14zM705 481l-1 -15l-13 8zM690 459l-13 -7l0 15zM662 427l-13 -8l0 17zM649 419l0 -16l-14 8zM649 403l-13 -9l-1 17zM636 394l0 -16l-13 8zM636 378l-12 -8l-1 16zM624 370l2 -15l-13 8zM626 355l-11 -7l-2 15zM798 535l9 7l4 -13zM807 542l14 -5l-10 -8zM840 551l14 -6l-10 -7zM854 545l9 6l5 -14zM863 551l14 -7l-9 -7zM877 544l9 5l4 -14zM911 532l8 4l4 -14zM919 536l11 -10l-7 -4zM939 517l6 3l3 -13zM945 520l8 -10l-5 -3zM993 411l0 13l0 -13zM992 424l-1 13l2 -13zM987 450l2 0l1 -13zM990 437l-1 13l2 -13zM983 463l2 0l2 -13zM974 475l-2 14l6 -13zM961 499l4 2l3 -14zM968 487l-3 14l7 -12zM742 510l12 8l0 -12zM754 518l11 7l1 -12zM765 525l12 7l1 -12zM778 520l-1 12l12 -5zM990 371l1 14l-2 -13zM992 385l1 13l-2 -13zM993 398l0 13l0 -13z"/>
<path fill="#ce6200" stroke="#ce6200" stroke-width="1.2" d="M623 305l-10 -7l-3 15zM622 270l-14 8l9 6zM622 270l-9 -6l-5 14zM627 257l-9 -6l-5 13zM637 218l-15 6l8 4zM643 208l-14 6l8 4zM650 200l-14 5l7 3zM758 161l-16 -1l8 1zM742 160l-7 1l15 0zM711 164l-9 2l16 -2zM694 170l-15 4l7 1zM679 174l-8 5l15 -4zM671 179l-7 6l14 -4zM657 192l-14 5l7 3zM790 166l-9 -2l15 2zM766 162l7 0l8 2zM766 162l-8 -1l15 1zM742 498l-12 -5l1 13zM718 487l-1 -14l-12 8zM704 466l-14 -7l1 15zM677 452l-1 -17l-13 9zM676 435l-14 -8l1 17zM662 427l0 -16l-13 8zM626 355l2 -15l-13 8zM628 340l-11 -7l-2 15zM789 527l9 8l4 -13zM821 537l9 7l4 -13zM830 544l14 -6l-10 -7zM844 538l10 7l4 -14zM854 545l14 -8l-10 -6zM868 537l9 7l4 -15zM877 544l13 -9l-9 -6zM890 535l9 6l4 -14zM899 541l12 -9l-8 -5zM930 526l9 -9l-6 -4zM948 507l5 3l3 -13zM992 424l1 0l0 -13zM990 437l1 0l1 -13zM979 462l-1 14l5 -13zM968 487l4 2l2 -14zM956 497l-3 13l8 -11zM742 498l0 12l12 -4zM754 506l0 12l12 -5zM766 513l-1 12l13 -5zM987 358l3 13l-1 1zM990 371l2 14l-1 0zM992 385l1 13l0 0zM993 398l0 13l0 0z"/>
<path fill="#d26400" stroke="#d26400" stroke-width="1.2" d="M630 326l-10 -7l-3 14zM623 305l-13 8l10 6zM627 291l-10 -7l-4 14zM627 257l-14 7l9 6zM632 245l-8 -6l-6 12zM638 233l-8 -5l-6 11zM750 161l-15 0l7 1zM735 161l-9 1l16 0zM726 162l-15 2l7 0zM702 166l-8 4l16 -2zM686 175l-15 4l7 2zM664 185l-7 7l14 -4zM657 192l-7 8l14 -4zM804 169l-8 -3l15 4zM730 493l0 -14l-12 8zM717 473l-13 -7l1 15zM690 459l0 -16l-13 9zM690 443l-14 -8l1 17zM662 411l-13 -8l0 16zM649 403l0 -17l-13 8zM649 386l-13 -8l0 16zM636 378l1 -16l-13 8zM637 362l-11 -7l-2 15zM798 535l13 -6l-9 -7zM811 529l10 8l4 -14zM821 537l13 -6l-9 -8zM911 532l12 -10l-8 -5zM923 522l7 4l3 -13zM939 517l9 -10l-6 -4zM987 436l0 14l3 -13zM979 462l4 1l1 -14zM984 449l-1 14l4 -13zM974 475l4 1l1 -14zM956 497l5 2l2 -13zM963 486l-2 13l7 -12zM766 513l12 7l1 -12zM778 520l11 7l2 -12zM791 515l-2 12l13 -5z"/>
<path fill="#d66600" stroke="#d66600" stroke-width="1.2" d="M633 312l-10 -7l-3 14zM627 291l-14 7l10 7zM631 277l-9 -7l-5 14zM632 245l-14 6l9 6zM638 233l-14 6l8 6zM644 222l-14 6l8 5zM644 222l-7 -4l-7 10zM651 212l-8 -4l-6 10zM657 204l-7 -4l-7 8zM773 162l-15 -1l8 1zM758 161l-8 0l16 1zM726 162l-8 2l16 -1zM718 164l-16 2l8 2zM694 170l-8 5l16 -3zM678 181l-14 4l7 3zM671 188l-14 4l7 4zM781 164l7 0l8 2zM781 164l-8 -2l15 2zM742 498l0 -13l-12 8zM742 485l-12 -6l0 14zM730 479l-13 -6l1 14zM704 466l0 -15l-14 8zM704 451l-14 -8l0 16zM676 435l0 -16l-14 8zM676 419l-14 -8l0 16zM662 411l0 -17l-13 9zM662 394l-13 -8l0 17zM650 370l-13 -8l-1 16zM637 362l2 -15l-13 8zM639 347l-11 -7l-2 15zM628 340l2 -14l-13 7zM802 522l9 7l4 -13zM834 531l10 7l4 -14zM844 538l14 -7l-10 -7zM858 531l10 6l4 -14zM868 537l13 -8l-9 -6zM881 529l9 6l4 -14zM890 535l13 -8l-9 -6zM903 527l8 5l4 -15zM933 513l6 4l3 -14zM948 507l8 -10l-5 -4zM991 411l1 13l1 -13zM987 436l3 1l0 -14zM990 423l0 14l2 -13zM984 449l3 1l0 -14zM963 486l5 1l2 -13zM970 474l-2 13l6 -12zM742 498l12 8l0 -13zM754 493l0 13l13 -5zM754 506l12 7l1 -12zM767 501l-1 12l13 -5zM779 508l-1 12l13 -5zM979 331l5 13l-1 0zM984 344l3 14l-4 -14zM987 358l3 13l-3 -13zM990 371l2 14l-2 -14zM991 385l2 13l-1 -13zM992 398l1 13l0 -13z"/>
<path fill="#da6800" stroke="#da6800" stroke-width="1.2" d="M633 312l-13 7l10 7zM631 277l-14 7l10 7zM636 264l-9 -7l-5 13zM651 212l-14 6l7 4zM657 204l-14 4l8 4zM788 164l-15 -2l8 2zM773 162l-7 0l15 2zM766 162l-16 -1l8 1zM750 161l-8 1l16 0zM742 162l-16 0l8 1zM718 164l-8 4l16 -2zM710 168l-16 2l8 2zM702 172l-16 3l8 3zM686 175l-8 6l16 -3zM664 196l-14 4l7 4zM819 173l-8 -3l13 4zM796 166l7 2l8 2zM796 166l-8 -2l15 4zM730 479l0 -14l-13 8zM717 473l0 -15l-13 8zM717 458l-13 -7l0 15zM690 443l-1 -16l-13 8zM689 427l-13 -8l0 16zM649 386l1 -16l-14 8zM641 332l-11 -6l-2 14zM811 529l14 -6l-10 -7zM825 523l9 8l4 -14zM834 531l14 -7l-10 -7zM903 527l12 -10l-9 -5zM915 517l8 5l3 -14zM923 522l10 -9l-7 -5zM942 503l6 4l3 -14zM951 493l5 4l2 -13zM990 423l2 1l-1 -13zM980 449l-1 13l5 -13zM970 474l4 1l1 -14zM975 461l-1 14l5 -13zM958 484l-2 13l7 -11zM791 515l11 7l2 -13zM742 485l0 13l12 -5zM984 344l3 14l0 0zM987 358l3 13l0 0zM990 371l1 14l1 0zM991 385l1 13l1 0zM992 398l-1 13l2 0z"/>
<path fill="#de6a00" stroke="#de6a00" stroke-width="1.2" d="M643 319l-10 -7l-3 14zM637 298l-14 7l10 7zM637 298l-10 -7l-4 14zM636 264l-14 6l9 7zM641 251l-14 6l9 7zM641 251l-9 -6l-5 12zM647 239l-9 -6l-6 12zM653 227l-9 -5l-6 11zM659 217l-8 -5l-7 10zM665 208l-8 -4l-6 8zM742 162l-8 1l17 0zM734 163l-16 1l8 2zM710 168l-8 4l16 -2zM694 178l-16 3l8 3zM678 181l-7 7l15 -4zM671 188l-7 8l14 -4zM664 196l-7 8l14 -4zM845 183l4 1l7 5zM832 178l5 1l8 4zM832 178l-8 -4l13 5zM811 170l5 1l8 3zM811 170l-8 -2l13 3zM742 485l0 -14l-12 8zM730 465l-13 -7l0 15zM704 451l-1 -16l-13 8zM676 419l0 -16l-14 8zM676 403l-14 -9l0 17zM662 394l1 -16l-14 8zM663 378l-13 -8l-1 16zM650 370l1 -16l-14 8zM651 354l-12 -7l-2 15zM639 347l2 -15l-13 8zM815 516l10 7l4 -13zM848 524l10 7l4 -14zM858 531l14 -8l-10 -6zM872 523l9 6l4 -14zM881 529l13 -8l-9 -6zM894 521l9 6l3 -15zM926 508l7 5l3 -14zM933 513l9 -10l-6 -4zM942 503l9 -10l-7 -4zM989 411l1 12l1 -12zM987 423l0 13l3 -13zM980 449l4 0l0 -13zM984 436l0 13l3 -13zM975 461l4 1l1 -13zM958 484l5 2l1 -14zM964 472l-1 14l7 -12zM742 485l12 8l1 -14zM754 493l13 8l0 -14zM767 501l12 7l0 -13zM779 508l12 7l1 -13zM792 502l-1 13l13 -6zM804 509l-2 13l13 -6zM969 304l6 13l-1 0zM975 317l4 14l-5 -14zM980 330l4 14l-5 -13z"/>
<path fill="#e26c00" stroke="#e26c00" stroke-width="1.2" d="M641 284l-14 7l10 7zM641 284l-10 -7l-4 14zM645 270l-9 -6l-5 13zM647 239l-15 6l9 6zM653 227l-15 6l9 6zM659 217l-15 5l9 5zM665 208l-14 4l8 5zM803 168l-15 -4l8 2zM788 164l-7 0l15 2zM781 164l-15 -2l8 2zM766 162l-8 0l16 2zM758 162l-16 0l9 1zM726 166l-16 2l8 2zM702 172l-8 6l16 -2zM686 184l-15 4l7 4zM678 192l-14 4l7 4zM671 200l-14 4l8 4zM856 189l5 1l6 5zM845 183l-8 -4l12 5zM824 174l6 2l7 3zM742 471l-12 -6l0 14zM717 458l0 -15l-13 8zM703 435l-14 -8l1 16zM689 427l0 -16l-13 8zM689 411l-13 -8l0 16zM652 339l-11 -7l-2 15zM641 332l2 -13l-13 7zM825 523l13 -6l-9 -7zM838 517l10 7l4 -14zM848 524l14 -7l-10 -7zM862 517l10 6l3 -14zM885 515l9 6l3 -14zM894 521l12 -9l-9 -5zM906 512l9 5l3 -14zM915 517l11 -9l-8 -5zM936 499l6 4l2 -14zM951 493l7 -9l-6 -4zM987 423l3 0l-1 -12zM984 436l3 0l0 -13zM964 472l6 2l0 -14zM970 460l0 14l5 -13zM804 509l11 7l2 -13zM742 471l0 14l13 -6zM755 479l-1 14l13 -6zM767 487l0 14l12 -6zM779 495l0 13l13 -6zM975 317l5 13l-1 1zM980 330l4 14l0 0zM984 344l3 14l-3 -14zM987 358l3 13l-3 -13zM989 372l2 13l-1 -14zM990 385l2 13l-1 -13zM990 398l1 13l1 -13zM990 398l-1 13l2 0z"/>
<path fill="#e66e00" stroke="#e66e00" stroke-width="1.2" d="M646 305l-13 7l10 7zM646 305l-9 -7l-4 14zM645 270l-14 7l10 7zM650 257l-9 -6l-5 13zM816 171l-13 -3l8 2zM803 168l-7 -2l15 4zM796 166l-15 -2l9 2zM781 164l-7 0l16 2zM774 164l-16 -2l9 2zM758 162l-7 1l16 1zM751 163l-17 0l8 3zM734 163l-8 3l16 0zM718 170l-16 2l8 4zM694 178l-8 6l16 -2zM867 195l-6 -5l10 6zM856 189l-7 -5l12 6zM837 179l5 2l7 3zM824 174l-8 -3l14 5zM742 471l0 -15l-12 9zM730 465l0 -15l-13 8zM730 450l-13 -7l0 15zM717 443l-14 -8l1 16zM703 435l0 -16l-14 8zM676 403l0 -17l-14 8zM676 386l-13 -8l-1 16zM663 378l1 -16l-14 8zM664 362l-13 -8l-1 16zM651 354l1 -15l-13 8zM654 325l-11 -6l-2 13zM887 208l-8 -7l11 8zM879 201l-12 -6l4 1zM829 510l9 7l4 -14zM872 523l13 -8l-10 -6zM918 503l8 5l2 -14zM926 508l10 -9l-8 -5zM944 489l7 4l1 -13zM952 480l6 4l1 -13zM980 435l0 14l4 -13zM970 460l5 1l1 -13zM976 448l-1 13l5 -12zM959 471l-1 13l6 -12zM767 487l12 8l1 -14zM779 495l13 7l1 -13zM792 502l12 7l1 -13zM805 496l-1 13l13 -6zM817 503l-2 13l14 -6zM955 279l7 12l0 1zM962 291l7 13l-7 -12zM969 304l6 13l-6 -13zM984 344l3 14l0 0zM987 358l2 14l1 -1zM989 372l1 13l1 0zM990 385l0 13l2 0z"/>
<path fill="#ea7000" stroke="#ea7000" stroke-width="1.2" d="M650 291l-13 7l9 7zM650 291l-9 -7l-4 14zM650 257l-14 7l9 6zM655 245l-14 6l9 6zM655 245l-8 -6l-6 12zM661 233l-8 -6l-6 12zM667 223l-8 -6l-6 10zM673 213l-8 -5l-6 9zM830 176l-14 -5l8 3zM816 171l-5 -1l13 4zM742 166l-16 0l8 3zM726 166l-8 4l16 -1zM710 176l-16 2l8 4zM702 182l-16 2l8 4zM686 184l-8 8l16 -4zM678 192l-7 8l15 -4zM671 200l-6 8l14 -4zM849 184l4 2l8 4zM849 184l-7 -3l11 5zM837 179l-7 -3l12 5zM742 456l-12 -6l0 15zM717 443l0 -16l-14 8zM703 419l-14 -8l0 16zM689 411l0 -17l-13 9zM689 394l-13 -8l0 17zM664 362l1 -15l-14 7zM665 347l-13 -8l-1 15zM652 339l2 -14l-13 7zM890 209l-11 -8l3 2zM879 201l-8 -5l11 7zM838 517l14 -7l-10 -7zM852 510l10 7l3 -15zM862 517l13 -8l-10 -7zM875 509l10 6l3 -14zM885 515l12 -8l-9 -6zM897 507l9 5l3 -14zM906 512l12 -9l-9 -5zM928 494l8 5l1 -14zM936 499l8 -10l-7 -4zM944 489l8 -9l-6 -5zM983 423l4 0l-1 -12zM986 411l1 12l2 -12zM980 435l4 1l-1 -13zM983 423l1 13l3 -13zM976 448l4 1l0 -14zM959 471l5 1l1 -13zM965 459l-1 13l6 -12zM817 503l12 7l2 -14zM742 456l0 15l13 -6zM742 471l13 8l0 -14zM755 465l0 14l13 -6zM755 479l12 8l1 -14zM768 473l-1 14l13 -6zM780 481l-1 14l14 -6zM793 489l-1 13l13 -6zM932 247l8 10l-9 -9zM940 257l8 11l-1 0zM948 268l7 11l-8 -11zM962 291l7 13l0 0zM975 317l5 13l-5 -13zM979 331l5 13l-4 -14zM987 398l2 13l1 -13z"/>
<path fill="#ee7200" stroke="#ee7200" stroke-width="1.2" d="M656 312l-10 -7l-3 14zM655 277l-14 7l9 7zM655 277l-10 -7l-4 14zM659 264l-9 -7l-5 13zM661 233l-14 6l8 6zM667 223l-14 4l8 6zM673 213l-14 4l8 6zM842 181l-12 -5l7 3zM830 176l-6 -2l13 5zM811 170l-15 -4l8 3zM796 166l-6 0l14 3zM790 166l-16 -2l8 2zM774 164l-7 0l15 2zM767 164l-16 -1l8 3zM751 163l-9 3l17 0zM734 169l-16 1l8 4zM718 170l-8 6l16 -2zM710 176l-8 6l16 -2zM694 188l-16 4l8 4zM686 196l-15 4l8 4zM679 204l-14 4l8 5zM861 190l3 2l7 4zM861 190l-8 -4l11 6zM730 450l0 -16l-13 9zM717 427l-14 -8l0 16zM703 419l0 -16l-14 8zM676 386l1 -16l-14 8zM677 370l-13 -8l-1 16zM666 332l-12 -7l-2 14zM654 325l2 -13l-13 7zM882 203l-11 -7l3 2zM842 503l10 7l3 -14zM852 510l13 -8l-10 -6zM897 507l12 -9l-9 -6zM909 498l9 5l2 -14zM918 503l10 -9l-8 -5zM937 485l7 4l2 -14zM952 480l7 -9l-6 -5zM975 435l1 13l4 -13zM965 459l5 1l1 -13zM971 447l-1 13l6 -12zM793 489l12 7l1 -14zM805 496l12 7l2 -14zM819 489l-2 14l14 -7zM831 496l-2 14l13 -7zM890 209l8 6l0 0zM898 215l8 7l-8 -7zM906 222l9 7l-1 1zM915 229l8 9l-9 -8zM923 238l9 9l-1 1zM948 268l8 11l-1 0zM956 279l6 12l-7 -12zM969 304l6 13l0 0zM975 317l4 14l1 -1zM979 331l4 13l1 0zM983 344l4 14l-3 -14zM985 358l4 14l-2 -14zM987 372l3 13l-1 -13zM987 385l3 13l0 -13zM987 385l0 13l3 0zM987 398l-1 13l3 0z"/>
<path fill="#f27300" stroke="#f27300" stroke-width="1.2" d="M660 298l-14 7l10 7zM660 298l-10 -7l-4 14zM659 264l-14 6l10 7zM664 252l-14 5l9 7zM664 252l-9 -7l-5 12zM670 240l-9 -7l-6 12zM864 192l-11 -6l8 4zM853 186l-11 -5l7 3zM842 181l-5 -2l12 5zM824 174l-13 -4l8 3zM811 170l-7 -1l15 4zM804 169l-14 -3l8 3zM790 166l-8 0l16 3zM782 166l-15 -2l8 4zM767 164l-8 2l16 2zM759 166l-17 0l9 3zM742 166l-8 3l17 0zM726 174l-16 2l8 4zM702 182l-8 6l16 -2zM694 188l-8 8l16 -2zM871 196l-7 -4l10 6zM742 456l0 -14l-12 8zM742 442l-12 -8l0 16zM730 434l-13 -7l0 16zM717 427l-1 -16l-13 8zM703 403l-14 -9l0 17zM689 394l1 -16l-14 8zM690 378l-13 -8l-1 16zM677 370l0 -15l-13 7zM677 355l-12 -8l-1 15zM665 347l1 -15l-14 7zM668 318l-12 -6l-2 13zM865 502l10 7l3 -15zM875 509l13 -8l-10 -7zM888 501l9 6l3 -15zM920 489l8 5l2 -14zM928 494l9 -9l-7 -5zM937 485l9 -10l-8 -4zM946 475l6 5l1 -14zM953 466l6 5l0 -13zM982 411l1 12l3 -12zM975 435l5 0l-1 -12zM979 423l1 12l3 -12zM971 447l5 1l-1 -13zM965 446l0 13l6 -12zM959 458l0 13l6 -12zM831 496l11 7l2 -14zM844 489l-2 14l13 -7zM742 456l13 9l0 -15zM755 465l13 8l0 -15zM768 473l12 8l1 -15zM780 481l13 8l1 -15zM794 474l-1 15l13 -7zM806 482l-1 14l14 -7zM882 203l8 5l0 1zM890 208l8 7l-8 -6zM898 215l9 7l-1 0zM907 222l8 7l-9 -7zM915 229l9 9l-1 0zM924 238l8 9l-9 -9zM932 247l8 10l0 0zM940 257l8 11l-8 -11zM956 279l6 12l0 0zM962 291l7 13l-7 -13zM969 304l6 13l-6 -13zM983 344l2 14l2 0zM985 358l2 14l2 0zM987 372l0 13l3 0zM983 399l3 12l1 -13z"/>
<path fill="#f67500" stroke="#f67500" stroke-width="1.2" d="M669 306l-9 -8l-4 14zM664 285l-14 6l10 7zM664 285l-9 -8l-5 14zM669 272l-10 -8l-4 13zM670 240l-15 5l9 7zM675 229l-14 4l9 7zM681 219l-14 4l8 6zM675 229l-8 -6l-6 10zM681 219l-8 -6l-6 10zM874 198l-10 -6l7 4zM864 192l-3 -2l10 6zM853 186l-4 -2l12 6zM837 179l-13 -5l8 4zM824 174l-5 -1l13 5zM751 169l-17 0l8 4zM734 169l-8 5l16 -1zM718 180l-16 2l8 4zM710 186l-16 2l8 6zM702 194l-16 2l8 6zM686 196l-7 8l15 -2zM679 204l-6 9l14 -3zM730 434l0 -15l-13 8zM716 411l-13 -8l0 16zM703 403l0 -16l-14 7zM703 387l-13 -9l-1 16zM677 355l1 -15l-13 7zM678 340l-12 -8l-1 15zM666 332l2 -14l-14 7zM855 496l10 6l3 -14zM865 502l13 -8l-10 -6zM878 494l10 7l2 -15zM888 501l12 -9l-10 -6zM900 492l9 6l2 -15zM909 498l11 -9l-9 -6zM930 480l7 5l1 -14zM946 475l7 -9l-7 -4zM979 423l4 0l-1 -12zM965 446l6 1l-1 -13zM970 434l1 13l4 -12zM959 458l6 1l0 -13zM819 489l12 7l1 -14zM832 482l-1 14l13 -7zM742 442l0 14l13 -6zM755 450l0 15l13 -7zM768 458l0 15l13 -7zM781 466l-1 15l14 -7zM874 198l8 5l0 0zM882 203l8 5l-8 -5zM890 208l8 7l0 0zM898 215l9 7l-9 -7zM932 247l8 10l-8 -10zM940 257l8 11l0 0zM948 268l8 11l-8 -11zM962 291l7 13l0 0zM974 317l5 14l-4 -14zM978 331l5 13l-4 -13zM981 345l4 13l-2 -14zM983 359l4 13l-2 -14zM984 372l3 13l0 -13zM984 386l3 12l0 -13zM983 399l-1 12l4 0z"/>
<path fill="#fa7700" stroke="#fa7700" stroke-width="1.2" d="M673 292l-9 -7l-4 13zM669 272l-14 5l9 8zM673 259l-9 -7l-5 12zM861 190l-12 -6l7 5zM849 184l-12 -5l8 4zM837 179l-5 -1l13 5zM819 173l-15 -4l8 4zM804 169l-6 0l14 4zM798 169l-16 -3l9 4zM782 166l-7 2l16 2zM775 168l-16 -2l8 4zM759 166l-8 3l16 1zM742 173l-16 1l8 5zM726 174l-8 6l16 -1zM718 180l-8 6l16 -1zM694 202l-15 2l8 6zM687 210l-14 3l8 6zM882 203l-8 -5l-3 -2zM742 442l0 -16l-12 8zM742 426l-12 -7l0 15zM730 419l-14 -8l1 16zM716 411l1 -16l-14 8zM690 378l0 -15l-13 7zM690 363l-13 -8l0 15zM680 325l-12 -7l-2 14zM668 318l1 -12l-13 6zM868 488l10 6l2 -14zM878 494l12 -8l-10 -6zM890 486l10 6l1 -14zM900 492l11 -9l-10 -5zM911 483l9 6l1 -14zM920 489l10 -9l-9 -5zM930 480l8 -9l-8 -5zM938 471l8 4l0 -13zM946 462l7 4l0 -12zM953 466l6 -8l-6 -4zM953 454l6 4l0 -13zM977 411l2 12l3 -12zM970 434l5 1l-1 -12zM974 423l1 12l4 -12zM959 445l0 13l6 -12zM844 489l11 7l2 -14zM857 482l-2 14l13 -8zM742 442l13 8l0 -16zM755 450l13 8l0 -15zM768 458l13 8l0 -15zM781 466l13 8l0 -15zM794 474l12 8l1 -15zM806 482l13 7l1 -14zM820 475l-1 14l13 -7zM882 203l8 6l0 -1zM890 209l8 6l-8 -7zM907 222l8 7l0 0zM915 229l9 9l-9 -9zM924 238l8 9l0 0zM948 268l7 11l1 0zM955 279l7 12l-6 -12zM969 304l5 13l1 0zM974 317l4 14l1 0zM978 331l3 14l2 -1zM981 345l2 14l2 -1zM983 359l1 13l3 0zM984 372l0 14l3 -1zM984 386l-1 13l4 -1z"/>
<path fill="#fe7900" stroke="#fe7900" stroke-width="1.2" d="M673 292l-13 6l9 8zM678 279l-9 -7l-5 13zM673 259l-14 5l10 8zM678 247l-14 5l9 7zM678 247l-8 -7l-6 12zM684 236l-9 -7l-5 11zM689 226l-8 -7l-6 10zM871 196l-10 -6l6 5zM861 190l-5 -1l11 6zM849 184l-4 -1l11 6zM845 183l-13 -5l8 5zM832 178l-13 -5l7 5zM819 173l-7 0l14 5zM812 173l-14 -4l8 5zM798 169l-7 1l15 4zM791 170l-16 -2l8 4zM775 168l-8 2l16 2zM767 170l-16 -1l8 5zM751 169l-9 4l17 1zM734 179l-16 1l8 5zM726 185l-16 1l8 6zM710 186l-8 8l16 -2zM702 194l-8 8l16 -3zM694 202l-7 8l16 -2zM687 210l-6 9l15 -2zM890 209l-8 -6l-3 -2zM882 203l-11 -7l8 5zM730 419l0 -16l-14 8zM717 395l-14 -8l0 16zM703 387l1 -16l-14 7zM704 371l-14 -8l0 15zM690 363l1 -16l-14 8zM691 347l-13 -7l-1 15zM678 340l2 -15l-14 7zM680 325l1 -13l-13 6zM681 312l-12 -6l-1 12zM911 483l10 -8l-9 -6zM921 475l9 5l0 -14zM930 466l8 5l1 -14zM938 471l8 -9l-7 -5zM974 423l5 0l-2 -12zM969 422l1 12l4 -11zM959 445l6 1l-1 -12zM964 434l1 12l5 -12zM832 482l12 7l2 -14zM846 475l-2 14l13 -7zM742 426l0 16l13 -8zM755 434l0 16l13 -7zM768 443l0 15l13 -7zM781 451l0 15l13 -7zM794 459l0 15l13 -7zM807 467l-1 15l14 -7zM898 215l8 7l1 0zM906 222l9 7l-8 -7zM915 229l8 9l1 0zM923 238l9 9l-8 -9zM932 247l8 10l0 0zM940 257l8 11l-8 -11zM955 279l7 13l0 -1zM962 292l7 12l-7 -13zM967 305l7 12l-5 -13zM980 386l3 13l1 -13zM979 399l3 12l1 -12zM979 399l-2 12l5 0z"/>
<path fill="#ff7b00" stroke="#ff7b00" stroke-width="1.2" d="M683 300l-10 -8l-4 14zM678 279l-14 6l9 7zM682 267l-13 5l9 7zM682 267l-9 -8l-4 13zM684 236l-14 4l8 7zM689 226l-14 3l9 7zM856 189l-11 -6l7 5zM845 183l-5 0l12 5zM832 178l-6 0l14 5zM826 178l-14 -5l8 5zM812 173l-6 1l14 4zM759 174l-17 -1l9 6zM742 173l-8 6l17 0zM734 179l-8 6l16 -1zM718 192l-16 2l8 5zM710 199l-16 3l9 6zM703 208l-16 2l9 7zM696 217l-15 2l8 7zM890 209l-11 -8l8 7zM879 201l-8 -5l-4 -1zM742 426l0 -15l-12 8zM742 411l-12 -8l0 16zM730 403l-13 -8l-1 16zM717 395l0 -16l-14 8zM717 379l-13 -8l-1 16zM704 371l0 -16l-14 8zM704 355l-13 -8l-1 16zM691 347l1 -14l-14 7zM692 333l-12 -8l-2 15zM681 312l2 -12l-14 6zM880 480l10 6l2 -14zM890 486l11 -8l-9 -6zM901 478l10 5l1 -14zM912 469l9 6l1 -14zM921 475l9 -9l-8 -5zM939 457l7 5l0 -13zM946 462l7 -8l-7 -5zM946 449l7 5l0 -13zM953 454l6 -9l-6 -4zM969 422l5 1l-2 -12zM972 411l2 12l3 -12zM964 434l6 0l-1 -12zM958 433l1 12l5 -11zM857 482l11 6l2 -14zM870 474l-2 14l12 -8zM742 426l13 8l0 -15zM807 467l13 8l1 -15zM820 475l12 7l2 -15zM834 467l-2 15l14 -7zM890 209l8 6l0 0zM898 215l8 7l-8 -7zM906 222l8 8l1 -1zM914 230l9 8l-8 -9zM923 238l8 10l1 -1zM931 248l9 9l-8 -10zM940 257l7 11l1 0zM947 268l8 11l-7 -11zM962 292l5 13l2 -1zM967 305l5 13l2 -1zM972 318l6 13l-4 -14zM975 332l6 13l-3 -14zM978 346l5 13l-2 -14zM979 359l5 13l-1 -13zM980 373l4 13l0 -14zM980 373l0 13l4 0zM980 386l-1 13l4 0zM974 399l3 12l2 -12z"/>
<path fill="#ff7d00" stroke="#ff7d00" stroke-width="1.2" d="M687 287l-14 5l10 8zM687 287l-9 -8l-5 13zM687 255l-14 4l9 8zM692 243l-14 4l9 8zM687 255l-9 -8l-5 12zM692 243l-8 -7l-6 11zM697 233l-8 -7l-5 10zM867 195l-11 -6l7 5zM856 189l-4 -1l11 6zM840 183l-14 -5l8 5zM826 178l-6 0l14 5zM806 174l-15 -4l8 5zM791 170l-8 2l16 3zM783 172l-16 -2l8 6zM767 170l-8 4l16 2zM751 179l-17 0l8 5zM726 185l-8 7l16 -1zM718 192l-8 7l16 -1zM696 217l-7 9l15 -3zM898 215l-8 -6l-3 -1zM887 208l-8 -7l-4 -1zM879 201l-12 -6l8 5zM875 200l-8 -5l-4 -1zM730 403l0 -16l-13 8zM730 387l-13 -8l0 16zM692 333l1 -14l-13 6zM693 319l-12 -7l-1 13zM892 472l9 6l2 -14zM901 478l11 -9l-9 -5zM922 461l8 5l1 -13zM930 466l9 -9l-8 -4zM939 457l7 -8l-7 -4zM953 441l6 4l-1 -12zM967 411l2 11l3 -11zM958 433l6 1l-1 -12zM963 422l1 12l5 -12zM870 474l10 6l2 -14zM882 466l-2 14l12 -8zM834 467l12 8l1 -16zM846 475l11 7l2 -15zM859 467l-2 15l13 -8zM742 411l0 15l13 -7zM755 419l0 15l13 -7zM755 434l13 9l0 -16zM768 443l13 8l1 -16zM781 451l13 8l1 -16zM794 459l13 8l1 -15zM808 452l-1 15l14 -7zM821 460l-1 15l14 -8zM898 215l8 8l0 -1zM906 223l8 7l-8 -8zM939 258l8 10l-7 -11zM947 268l7 12l1 -1zM954 280l8 12l-7 -13zM960 293l7 12l-5 -13zM972 318l3 14l3 -1zM975 332l3 14l3 -1zM978 346l1 13l4 0zM979 359l1 14l4 -1zM975 387l4 12l1 -13zM974 399l-2 12l5 0z"/>
<path fill="#ff7f00" stroke="#ff7f00" stroke-width="1.2" d="M695 295l-8 -8l-4 13zM691 274l-13 5l9 8zM691 274l-9 -7l-4 12zM696 262l-9 -7l-5 12zM697 233l-13 3l8 7zM863 194l-11 -6l7 6zM852 188l-12 -5l7 5zM840 183l-6 0l13 5zM820 178l-14 -4l8 5zM806 174l-7 1l15 4zM799 175l-16 -3l8 6zM783 172l-8 4l16 2zM775 176l-16 -2l8 6zM759 174l-8 5l16 1zM751 179l-9 5l17 1zM742 184l-16 1l8 6zM734 191l-16 1l8 6zM726 198l-16 1l8 7zM710 199l-7 9l15 -2zM718 206l-15 2l8 7zM703 208l-7 9l15 -2zM711 215l-15 2l8 6zM704 223l-15 3l8 7zM906 223l-8 -8l-3 0zM898 215l-11 -7l8 7zM887 208l-12 -8l8 7zM742 411l0 -16l-12 8zM742 395l-12 -8l0 16zM717 379l0 -15l-13 7zM717 364l-13 -9l0 16zM704 355l1 -14l-14 6zM705 341l-13 -8l-1 14zM693 319l1 -13l-13 6zM694 306l-11 -6l-2 12zM903 464l9 5l1 -13zM912 469l10 -8l-9 -5zM931 453l8 4l0 -12zM939 445l7 4l0 -12zM946 449l7 -8l-7 -4zM953 441l5 -8l-6 -4zM963 422l6 0l-2 -11zM957 422l1 11l5 -11zM882 466l10 6l2 -14zM894 458l-2 14l11 -8zM859 467l11 7l2 -15zM872 459l-2 15l12 -8zM742 411l13 8l0 -16zM821 460l13 7l1 -15zM847 459l-1 16l13 -8zM768 427l0 16l14 -8zM782 435l-1 16l14 -8zM795 443l-1 16l14 -7zM914 230l8 9l1 -1zM922 239l9 9l-8 -10zM931 248l8 10l1 -1zM945 269l9 11l-7 -12zM954 280l6 13l2 -1zM960 293l5 13l2 -1zM965 306l7 12l-5 -13zM969 319l6 13l-3 -14zM972 333l6 13l-3 -14zM974 347l5 12l-1 -13zM975 360l5 13l-1 -14zM976 374l4 12l0 -13zM976 374l-1 13l5 -1zM975 387l-1 12l5 0zM969 399l3 12l2 -12zM969 399l-2 12l5 0z"/>
<path fill="#ff8100" stroke="#ff8100" stroke-width="1.2" d="M700 282l-13 5l8 8zM700 282l-9 -8l-4 13zM696 262l-14 5l9 7zM701 251l-14 4l9 7zM701 251l-9 -8l-5 12zM705 240l-8 -7l-5 10zM852 188l-5 0l12 6zM834 183l-14 -5l8 6zM820 178l-6 1l14 5zM814 179l-15 -4l7 6zM799 175l-8 3l15 3zM791 178l-16 -2l8 6zM775 176l-8 4l16 2zM767 180l-16 -1l8 6zM742 184l-8 7l17 0zM704 223l-7 10l15 -2zM906 223l-11 -8l7 8zM895 215l-8 -7l-4 -1zM883 207l-8 -7l-4 0zM875 200l-12 -6l8 6zM871 200l-8 -6l-4 0zM742 395l0 -15l-12 7zM730 387l0 -15l-13 7zM730 372l-13 -8l0 15zM717 364l0 -15l-13 6zM717 349l-12 -8l-1 14zM705 341l0 -14l-13 6zM705 327l-12 -8l-1 14zM706 314l-12 -8l-1 13zM694 306l1 -11l-12 5zM913 456l9 5l0 -13zM922 461l9 -8l-9 -5zM922 448l9 5l-1 -13zM931 453l8 -8l-9 -5zM946 437l7 4l-1 -12zM952 429l6 4l-1 -11zM957 422l6 0l-2 -11zM961 411l2 11l4 -11zM894 458l9 6l1 -15zM904 449l-1 15l10 -8zM847 459l12 8l1 -16zM860 451l-1 16l13 -8zM742 395l0 16l13 -8zM755 403l0 16l13 -8zM755 419l13 8l0 -16zM768 427l14 8l0 -16zM782 435l13 8l0 -16zM795 443l13 9l1 -17zM808 452l13 8l1 -16zM822 444l-1 16l14 -8zM835 452l-1 15l13 -8zM906 223l7 8l1 -1zM913 231l9 8l-8 -9zM922 239l8 10l1 -1zM930 249l9 9l-8 -10zM939 258l6 11l2 -1zM952 281l8 12l-6 -13zM965 306l4 13l3 -1zM969 319l3 14l3 -1zM972 333l2 14l4 -1zM974 347l1 13l4 -1zM975 360l1 14l4 -1zM971 375l4 12l1 -13zM970 387l4 12l1 -12zM970 387l-1 12l5 0z"/>
<path fill="#ff8300" stroke="#ff8300" stroke-width="1.2" d="M708 290l-8 -8l-5 13zM704 270l-13 4l9 8zM704 270l-8 -8l-5 12zM709 259l-8 -8l-5 11zM705 240l-13 3l9 8zM859 194l-12 -6l6 6zM847 188l-13 -5l7 6zM834 183l-6 1l13 5zM828 184l-14 -5l7 6zM783 182l-16 -2l8 6zM767 180l-8 5l16 1zM759 185l-17 -1l9 7zM751 191l-17 0l8 7zM734 191l-8 7l16 0zM742 198l-16 0l8 7zM726 198l-8 8l16 -1zM718 206l-7 9l16 -2zM711 215l-7 8l15 -1zM719 222l-15 1l8 8zM712 231l-15 2l8 7zM913 231l-7 -8l-4 0zM902 223l-7 -8l-4 -1zM895 215l-12 -8l8 7zM883 207l-12 -7l8 7zM871 200l-12 -6l7 6zM742 380l-12 -8l0 15zM730 372l0 -15l-13 7zM730 357l-13 -8l0 15zM717 349l1 -14l-13 6zM718 335l-13 -8l0 14zM705 327l1 -13l-13 5zM706 314l1 -13l-13 5zM707 301l-12 -6l-1 11zM930 440l9 5l-1 -13zM939 445l7 -8l-8 -5zM938 432l8 5l-1 -12zM946 437l6 -8l-7 -4zM945 425l7 4l-2 -11zM952 429l5 -7l-7 -4zM950 418l7 4l-1 -11zM956 411l1 11l4 -11zM904 449l9 7l1 -15zM914 441l-1 15l9 -8zM872 459l10 7l2 -15zM884 451l-2 15l12 -8zM742 380l0 15l13 -8zM742 395l13 8l0 -16zM835 452l12 7l1 -15zM848 444l-1 15l13 -8zM768 411l0 16l14 -8zM782 419l0 16l13 -8zM795 427l0 16l14 -8zM809 435l-1 17l14 -8zM913 231l8 10l1 -2zM921 241l9 8l-8 -10zM930 249l7 11l2 -2zM937 260l8 9l-6 -11zM945 269l7 12l2 -1zM952 281l5 13l3 -1zM957 294l8 12l-5 -13zM962 307l7 12l-4 -13zM965 321l7 12l-3 -14zM970 348l5 12l-1 -13zM970 361l6 13l-1 -14zM970 361l1 14l5 -1zM971 375l-1 12l5 0zM964 388l5 11l1 -12zM963 400l4 11l2 -12zM963 400l-2 11l6 0z"/>
<path fill="#ff8500" stroke="#ff8500" stroke-width="1.2" d="M712 278l-12 4l8 8zM712 278l-8 -8l-4 12zM709 259l-13 3l8 8zM713 248l-12 3l8 8zM713 248l-8 -8l-4 11zM847 188l-6 1l12 5zM841 189l-13 -5l7 6zM828 184l-7 1l14 5zM814 179l-8 2l15 4zM806 181l-15 -3l8 6zM791 178l-8 4l16 2zM775 186l-16 -1l8 7zM759 185l-8 6l16 1zM712 231l-7 9l15 -1zM734 205l-16 1l9 7zM727 213l-16 2l8 7zM921 241l-8 -10l-3 0zM913 231l-11 -8l8 8zM902 223l-11 -9l8 9zM891 214l-8 -7l-4 0zM879 207l-8 -7l-5 0zM866 200l-7 -6l-6 0zM742 380l0 -15l-12 7zM742 365l-12 -8l0 15zM730 357l0 -14l-13 6zM730 343l-12 -8l-1 14zM718 335l0 -14l-13 6zM718 321l-12 -7l-1 13zM719 308l-12 -7l-1 13zM707 301l1 -11l-13 5zM939 418l-1 14l7 -7zM931 425l-1 15l8 -8zM914 441l8 7l1 -15zM923 433l-1 15l8 -8zM884 451l10 7l1 -16zM895 442l-1 16l10 -9zM860 451l12 8l1 -16zM873 443l-1 16l12 -8zM755 387l0 16l13 -8zM755 403l13 8l0 -16zM768 411l14 8l0 -16zM782 419l13 8l0 -16zM795 427l14 8l0 -16zM809 435l13 9l1 -17zM822 444l13 8l1 -16zM836 436l-1 16l13 -8zM921 241l7 10l2 -2zM928 251l9 9l-7 -11zM937 260l6 11l2 -2zM943 271l9 10l-7 -12zM957 294l5 13l3 -1zM962 307l3 14l4 -2zM965 321l3 13l4 -1zM968 334l6 13l-2 -14zM968 334l2 14l4 -1zM970 348l0 13l5 -1zM965 375l5 12l1 -12zM965 375l-1 13l6 -1zM964 388l-1 12l6 -1zM957 400l4 11l2 -11zM957 400l-1 11l5 0z"/>
<path fill="#ff8700" stroke="#ff8700" stroke-width="1.2" d="M720 286l-8 -8l-4 12zM717 267l-13 3l8 8zM717 267l-8 -8l-5 11zM721 255l-8 -7l-4 11zM853 194l-12 -5l7 6zM841 189l-6 1l13 5zM821 185l-15 -4l8 7zM806 181l-7 3l15 4zM799 184l-16 -2l8 6zM783 182l-8 4l16 2zM767 192l-16 -1l8 7zM751 191l-9 7l17 0zM759 198l-17 0l8 7zM742 198l-8 7l16 0zM734 205l-7 8l15 0zM727 213l-8 9l16 -1zM735 221l-16 1l8 8zM719 222l-7 9l15 -1zM727 230l-15 1l8 8zM720 239l-15 1l8 8zM956 411l1 -11l-7 4zM928 251l-7 -10l-4 0zM921 241l-11 -10l7 10zM910 231l-8 -8l-3 0zM899 223l-8 -9l-5 1zM891 214l-12 -7l7 8zM879 207l-13 -7l8 7zM866 200l-13 -6l8 7zM742 365l0 -14l-12 6zM742 351l-12 -8l0 14zM730 343l0 -14l-12 6zM730 329l-12 -8l0 14zM718 321l1 -13l-13 6zM719 308l0 -11l-12 4zM719 297l-11 -7l-1 11zM945 411l5 7l0 -14zM950 404l0 14l6 -7zM939 418l6 7l0 -14zM945 411l0 14l5 -7zM931 425l7 7l1 -14zM923 433l7 7l1 -15zM915 426l-1 15l9 -8zM895 442l9 7l2 -15zM906 434l-2 15l10 -8zM873 443l11 8l1 -16zM885 435l-1 16l11 -9zM742 365l0 15l13 -8zM742 380l13 7l0 -15zM755 387l13 8l0 -16zM836 436l12 8l1 -17zM848 444l12 7l1 -16zM861 435l-1 16l13 -8zM768 395l0 16l14 -8zM782 403l0 16l13 -8zM795 411l0 16l14 -8zM809 419l0 16l14 -8zM823 427l-1 17l14 -8zM928 251l6 11l3 -2zM934 262l9 9l-6 -11zM943 271l6 12l3 -2zM949 283l8 11l-5 -13zM949 283l5 13l3 -2zM954 296l8 11l-5 -13zM958 309l7 12l-3 -14zM963 336l7 12l-2 -14zM964 349l6 12l0 -13zM965 363l6 12l-1 -14zM965 363l0 12l6 0zM958 388l5 12l1 -12zM958 388l-1 12l6 0z"/>
<path fill="#ff8900" stroke="#ff8900" stroke-width="1.2" d="M724 274l-12 4l8 8zM724 274l-7 -7l-5 11zM721 255l-12 4l8 8zM848 195l-13 -5l6 7zM835 190l-14 -5l7 7zM821 185l-7 3l14 4zM814 188l-15 -4l7 8zM799 184l-8 4l15 4zM791 188l-16 -2l8 8zM775 186l-8 6l16 2zM767 192l-8 6l16 1zM727 230l-7 9l15 -1zM720 239l-7 9l15 -1zM728 247l-15 1l8 7zM750 205l-16 0l8 8zM742 213l-15 0l8 8zM957 400l-5 -7l-2 11zM957 400l1 -12l-6 5zM934 262l-6 -11l-4 1zM928 251l-11 -10l7 11zM917 241l-7 -10l-4 1zM910 231l-11 -8l7 9zM899 223l-13 -8l8 9zM886 215l-7 -8l-5 0zM874 207l-8 -7l-5 1zM861 201l-8 -7l-5 1zM742 351l0 -14l-12 6zM742 337l-12 -8l0 14zM730 329l1 -13l-13 5zM731 316l-12 -8l-1 13zM731 304l-12 -7l0 11zM719 297l1 -11l-12 4zM945 397l0 14l5 -7zM939 404l0 14l6 -7zM924 418l7 7l1 -14zM932 411l-1 14l8 -7zM915 426l8 7l1 -15zM924 418l-1 15l8 -8zM906 434l8 7l1 -15zM885 435l10 7l1 -15zM896 427l-1 15l11 -8zM742 351l0 14l13 -8zM742 365l13 7l0 -15zM861 435l12 8l1 -16zM874 427l-1 16l12 -8zM755 372l0 15l13 -8zM768 379l0 16l14 -8zM768 395l14 8l0 -16zM782 403l13 8l0 -17zM795 411l14 8l0 -16zM809 419l14 8l0 -16zM823 427l13 9l0 -17zM836 419l0 17l13 -9zM849 427l-1 17l13 -9zM934 262l6 11l3 -2zM940 273l9 10l-6 -12zM954 296l4 13l4 -2zM958 309l3 14l4 -2zM961 323l7 11l-3 -13zM961 323l2 13l5 -2zM963 336l1 13l6 -1zM964 349l1 14l5 -2zM959 364l6 11l0 -12zM959 364l0 12l6 -1zM959 376l5 12l1 -13zM959 376l-1 12l6 0z"/>
<path fill="#ff8b00" stroke="#ff8b00" stroke-width="1.2" d="M731 282l-7 -8l-4 12zM729 263l-12 4l7 7zM729 263l-8 -8l-4 12zM835 190l-7 2l13 5zM828 192l-14 -4l7 8zM814 188l-8 4l15 4zM806 192l-15 -4l7 8zM791 188l-8 6l15 2zM728 247l-7 8l14 0zM735 255l-14 0l8 8zM783 194l-16 -2l8 7zM775 199l-16 -1l7 8zM759 198l-9 7l16 1zM766 206l-16 -1l8 8zM750 205l-8 8l16 0zM742 213l-7 8l15 0zM750 221l-15 0l7 9zM735 221l-8 9l15 0zM742 230l-15 0l8 8zM735 238l-15 1l8 8zM950 404l2 -11l-7 4zM952 393l-6 -8l-1 12zM958 388l-5 -7l-1 12zM952 393l1 -12l-7 4zM958 388l1 -12l-6 5zM959 376l-6 -8l0 13zM959 376l0 -12l-6 4zM940 273l-6 -11l-4 1zM934 262l-10 -10l6 11zM924 252l-7 -11l-4 1zM917 241l-11 -9l7 10zM906 232l-7 -9l-5 1zM894 224l-8 -9l-5 1zM886 215l-12 -8l7 9zM881 216l-7 -9l-6 2zM874 207l-13 -6l7 8zM868 209l-7 -8l-6 2zM861 201l-13 -6l7 8zM855 203l-7 -8l-7 2zM742 337l0 -13l-12 5zM742 324l-11 -8l-1 13zM731 316l0 -12l-12 4zM731 304l0 -11l-12 4zM731 293l-11 -7l-1 11zM731 293l0 -11l-11 4zM939 404l6 7l0 -14zM932 411l7 7l0 -14zM916 411l-1 15l9 -8zM896 427l10 7l0 -15zM906 419l0 15l9 -8zM742 337l0 14l13 -8zM742 351l13 6l0 -14zM874 427l11 8l1 -16zM886 419l-1 16l11 -8zM755 357l0 15l13 -8zM755 372l13 7l0 -15zM849 427l12 8l1 -16zM862 419l-1 16l13 -8zM782 387l0 16l13 -9zM795 394l0 17l14 -8zM809 403l0 16l14 -8zM823 411l0 16l13 -8zM940 273l5 13l4 -3zM945 286l9 10l-5 -13zM945 286l5 12l4 -2zM950 298l8 11l-4 -13zM953 311l8 12l-3 -14zM956 325l7 11l-2 -13zM958 338l6 11l-1 -13zM958 338l1 13l5 -2zM959 351l6 12l-1 -14zM959 351l0 13l6 -1z"/>
<path fill="#ff8d00" stroke="#ff8d00" stroke-width="1.2" d="M736 271l-12 3l7 8zM736 271l-7 -8l-5 11zM841 197l-13 -5l7 8zM828 192l-7 4l14 4zM821 196l-15 -4l7 8zM806 192l-8 4l15 4zM735 255l-6 8l13 0zM742 263l-13 0l7 8zM798 196l-15 -2l7 8zM783 194l-8 5l15 3zM775 199l-9 7l16 2zM742 230l-7 8l15 0zM735 238l-7 9l14 0zM742 247l-14 0l7 8zM758 213l-16 0l8 8zM945 397l1 -12l-8 4zM953 381l-7 -8l0 12zM953 381l0 -13l-7 5zM959 364l-6 -9l0 13zM959 364l0 -13l-6 4zM945 286l-5 -13l-4 2zM940 273l-10 -10l6 12zM930 263l-6 -11l-4 2zM924 252l-11 -10l7 12zM913 242l-7 -10l-5 1zM906 232l-12 -8l7 9zM894 224l-13 -8l8 9zM881 216l-13 -7l8 9zM868 209l-13 -6l7 8zM855 203l-14 -6l7 8zM742 324l0 -13l-11 5zM742 311l-11 -7l0 12zM742 311l0 -11l-11 4zM742 300l-11 -7l0 11zM742 289l-11 -7l0 11zM931 396l8 8l-1 -15zM938 389l1 15l6 -7zM924 403l8 8l-1 -15zM931 396l1 15l7 -7zM916 411l8 7l0 -15zM924 403l0 15l8 -7zM906 419l9 7l1 -15zM742 324l0 13l12 -8zM742 337l13 6l-1 -14zM886 419l10 8l0 -16zM896 411l0 16l10 -8zM755 343l0 14l13 -8zM755 357l13 7l0 -15zM862 419l12 8l0 -16zM874 411l0 16l12 -8zM768 364l0 15l13 -8zM768 379l14 8l-1 -16zM781 371l1 16l13 -9zM782 387l13 7l0 -16zM795 394l14 9l0 -17zM809 403l14 8l0 -17zM823 411l13 8l0 -16zM836 403l0 16l13 -8zM836 419l13 8l0 -16zM849 411l0 16l13 -8zM950 298l3 13l5 -2zM953 311l3 14l5 -2zM956 325l2 13l5 -2z"/>
<path fill="#ff8f00" stroke="#ff8f00" stroke-width="1.2" d="M742 279l-6 -8l-5 11zM835 200l-14 -4l6 8zM821 196l-8 4l14 4zM742 263l-6 8l13 0zM749 271l-13 0l6 8zM813 200l-15 -4l7 8zM798 196l-8 6l15 2zM742 247l-7 8l15 0zM750 255l-15 0l7 8zM790 202l-15 -3l7 9zM782 208l-16 -2l8 9zM766 206l-8 7l16 2zM774 215l-16 -2l8 9zM758 213l-8 8l16 1zM766 222l-16 -1l8 9zM750 221l-8 9l16 0zM758 230l-16 0l8 8zM750 238l-15 0l7 9zM946 385l-7 -8l-1 12zM946 385l0 -12l-7 4zM953 368l-7 -8l0 13zM953 368l0 -13l-7 5zM959 351l-7 -9l1 13zM959 351l-1 -13l-6 4zM958 338l-7 -10l1 14zM958 338l-2 -13l-5 3zM956 325l-8 -10l3 13zM956 325l-3 -14l-5 4zM953 311l-8 -10l3 14zM953 311l-3 -13l-5 3zM950 298l-9 -10l4 13zM950 298l-5 -12l-4 2zM945 286l-9 -11l5 13zM936 275l-6 -12l-4 3zM930 263l-10 -9l6 12zM920 254l-7 -12l-5 2zM913 242l-12 -9l7 11zM901 233l-7 -9l-5 1zM889 225l-8 -9l-5 2zM876 218l-8 -9l-6 2zM862 211l-7 -8l-7 2zM848 205l-7 -8l-6 3zM742 300l0 -11l-11 4zM742 289l0 -10l-11 3zM930 382l1 14l7 -7zM923 388l1 15l7 -7zM742 300l0 11l12 -7zM742 311l12 5l0 -12zM906 403l10 8l-1 -15zM915 396l1 15l8 -8zM742 311l0 13l12 -8zM742 324l12 5l0 -13zM896 411l10 8l0 -16zM906 403l0 16l10 -8zM754 329l1 14l12 -8zM755 343l13 6l-1 -14zM874 411l12 8l0 -16zM886 403l0 16l10 -8zM768 349l0 15l13 -9zM768 364l13 7l0 -16zM849 411l13 8l0 -16zM862 403l0 16l12 -8zM795 378l0 16l14 -8zM809 386l0 17l14 -9zM823 394l0 17l13 -8z"/>
<path fill="#ff9100" stroke="#ff9100" stroke-width="1.2" d="M827 204l-14 -4l7 8zM813 200l-8 4l15 4zM750 255l-8 8l14 0zM756 263l-14 0l7 8zM805 204l-15 -2l7 8zM790 202l-8 6l15 2zM797 210l-15 -2l7 9zM782 208l-8 7l15 2zM774 215l-8 7l15 1zM766 222l-8 8l15 1zM758 230l-8 8l15 1zM765 239l-15 -1l7 9zM750 238l-8 9l15 0zM757 247l-15 0l8 8zM938 389l1 -12l-9 5zM753 282l-4 -11l-7 8zM946 373l-7 -9l0 13zM946 373l0 -13l-7 4zM953 355l-7 -9l0 14zM953 355l-1 -13l-6 4zM952 342l-8 -9l2 13zM952 342l-1 -14l-7 5zM951 328l-3 -13l-6 4zM948 315l-3 -14l-6 4zM945 301l-4 -13l-5 3zM941 288l-5 -13l-5 3zM936 275l-10 -9l5 12zM926 266l-6 -12l-5 2zM920 254l-12 -10l7 12zM908 244l-7 -11l-5 3zM901 233l-12 -8l7 11zM896 236l-7 -11l-6 2zM889 225l-13 -7l7 9zM876 218l-14 -7l7 9zM862 211l-14 -6l7 9zM855 214l-7 -9l-7 3zM848 205l-13 -5l6 8zM841 208l-6 -8l-8 4zM742 279l0 10l11 -7zM742 289l12 4l-1 -11zM923 388l8 8l-1 -14zM742 289l0 11l12 -7zM742 300l12 4l0 -11zM915 396l9 7l-1 -15zM754 304l0 12l12 -8zM906 388l0 15l9 -7zM754 316l0 13l13 -8zM754 329l13 6l0 -14zM886 403l10 8l0 -16zM896 395l0 16l10 -8zM767 335l1 14l12 -8zM768 349l13 6l-1 -14zM862 403l12 8l0 -16zM874 395l0 16l12 -8zM781 355l0 16l13 -8zM781 371l14 7l-1 -15zM794 363l1 15l13 -8zM795 378l14 8l-1 -16zM809 386l14 8l-1 -16zM823 394l13 9l0 -17zM836 386l0 17l13 -9zM836 403l13 8l0 -17zM849 394l0 17l13 -8z"/>
<path fill="#ff9200" stroke="#ff9200" stroke-width="1.2" d="M820 208l-15 -4l7 9zM805 204l-8 6l15 3zM812 213l-15 -3l7 9zM797 210l-8 7l15 2zM773 231l-8 8l14 1zM765 239l-8 8l14 1zM771 248l-14 -1l7 8zM757 247l-7 8l14 0zM764 255l-14 0l6 8zM789 217l-15 -2l7 8zM781 223l-15 -1l7 9zM773 231l-15 -1l7 9zM939 377l-8 -8l-1 13zM930 382l1 -13l-9 5zM765 286l-4 -12l-8 8zM761 274l-12 -3l4 11zM939 377l0 -13l-8 5zM939 364l-9 -8l1 13zM768 267l-12 -4l5 11zM761 274l-5 -11l-7 8zM946 360l-8 -9l1 13zM939 364l-1 -13l-8 5zM768 267l-4 -12l-8 8zM946 360l0 -14l-8 5zM946 346l-9 -9l1 14zM946 346l-2 -13l-7 4zM951 328l-9 -9l2 14zM948 315l-9 -10l3 14zM945 301l-9 -10l3 14zM941 288l-10 -10l5 13zM936 291l-5 -13l-6 4zM931 278l-5 -12l-6 2zM926 266l-11 -10l5 12zM915 256l-7 -12l-5 3zM908 244l-12 -8l7 11zM896 236l-13 -9l7 11zM869 220l-14 -6l7 10zM855 214l-14 -6l7 10zM848 218l-7 -10l-7 4zM841 208l-14 -4l7 8zM834 212l-7 -8l-7 4zM883 227l-7 -9l-7 2zM869 220l-7 -9l-7 3zM753 282l1 11l11 -7zM754 293l11 4l0 -11zM914 380l9 8l-1 -14zM922 374l1 14l7 -6zM754 293l0 11l11 -7zM754 304l12 4l-1 -11zM906 388l9 8l-1 -16zM914 380l1 16l8 -8zM754 316l13 5l-1 -13zM766 308l1 13l12 -7zM896 395l10 8l0 -15zM767 321l0 14l12 -8zM767 335l13 6l-1 -14zM874 395l12 8l-1 -16zM885 387l1 16l10 -8zM780 341l1 14l13 -8zM781 355l13 8l0 -16zM794 347l0 16l13 -8zM794 363l14 7l-1 -15zM836 386l13 8l-1 -16zM849 394l13 9l-1 -17zM861 386l1 17l12 -8zM808 370l1 16l13 -8zM822 378l1 16l13 -8z"/>
<path fill="#ff9400" stroke="#ff9400" stroke-width="1.2" d="M804 219l-15 -2l7 9zM789 217l-8 6l15 3zM796 226l-15 -3l7 10zM781 223l-8 8l15 2zM788 233l-15 -2l6 9zM779 240l-14 -1l6 9zM931 369l-9 -8l0 13zM922 374l0 -13l-9 5zM777 290l-4 -12l-8 8zM773 278l-12 -4l4 12zM931 369l-1 -13l-8 5zM773 278l-5 -11l-7 7zM938 351l-8 -9l0 14zM776 259l-12 -4l4 12zM938 351l-1 -14l-7 5zM776 259l-5 -11l-7 7zM944 333l-8 -10l1 14zM784 251l-5 -11l-8 8zM944 333l-2 -14l-6 4zM942 319l-9 -10l3 14zM942 319l-3 -14l-6 4zM939 305l-9 -10l3 14zM939 305l-3 -14l-6 4zM936 291l-11 -9l5 13zM931 278l-11 -10l5 14zM826 217l-14 -4l6 10zM818 223l-6 -10l-8 6zM920 268l-5 -12l-6 3zM915 256l-12 -9l6 12zM903 247l-13 -9l6 12zM848 218l-14 -6l6 10zM840 222l-6 -10l-8 5zM834 212l-14 -4l6 9zM826 217l-6 -9l-8 5zM903 247l-7 -11l-6 2zM890 238l-7 -11l-7 4zM883 227l-14 -7l7 11zM876 231l-7 -11l-7 4zM862 224l-7 -10l-7 4zM765 286l0 11l12 -7zM765 297l13 4l-1 -11zM904 372l10 8l-1 -14zM913 366l1 14l8 -6zM765 297l1 11l12 -7zM766 308l13 6l-1 -13zM895 379l11 9l-2 -16zM904 372l2 16l8 -8zM767 321l12 6l0 -13zM779 314l0 13l13 -8zM779 327l14 6l-1 -14zM885 387l11 8l-1 -16zM895 379l1 16l10 -7zM779 327l1 14l13 -8zM780 341l14 6l-1 -14zM793 333l1 14l12 -7zM794 347l13 8l-1 -15zM861 386l13 9l-1 -16zM873 379l1 16l11 -8zM807 355l1 15l13 -8zM808 370l14 8l-1 -16zM821 362l1 16l13 -8zM822 378l14 8l-1 -16zM835 370l1 16l12 -8zM848 378l1 16l12 -8z"/>
<path fill="#ff9600" stroke="#ff9600" stroke-width="1.2" d="M922 361l-10 -9l1 14zM789 295l-4 -13l-8 8zM785 282l-12 -4l4 12zM930 356l-9 -9l1 14zM922 361l-1 -14l-9 5zM785 282l-4 -12l-8 8zM781 270l-13 -3l5 11zM930 356l0 -14l-9 5zM789 262l-13 -3l5 11zM781 270l-5 -11l-8 8zM937 337l-9 -9l2 14zM789 262l-5 -11l-8 8zM784 251l-13 -3l5 11zM937 337l-1 -14l-8 5zM936 323l-10 -9l2 14zM793 243l-14 -3l5 11zM936 323l-3 -14l-7 5zM933 309l-10 -10l3 15zM801 236l-13 -3l5 10zM793 243l-5 -10l-9 7zM933 309l-3 -14l-7 4zM930 295l-11 -10l4 14zM810 229l-14 -3l5 10zM801 236l-5 -10l-8 7zM930 295l-5 -13l-6 3zM925 282l-11 -10l5 13zM818 223l-14 -4l6 10zM810 229l-6 -10l-8 7zM925 282l-5 -14l-6 4zM920 268l-11 -9l5 13zM914 272l-5 -13l-7 4zM909 259l-13 -9l6 13zM840 222l-14 -5l6 10zM832 227l-6 -10l-8 6zM909 259l-6 -12l-7 3zM896 250l-6 -12l-7 4zM890 238l-14 -7l7 11zM883 242l-7 -11l-7 3zM876 231l-14 -7l7 10zM869 234l-7 -10l-7 4zM862 224l-14 -6l7 10zM855 228l-7 -10l-8 4zM777 290l1 11l11 -6zM778 301l13 5l-2 -11zM903 358l1 14l9 -6zM778 301l1 13l12 -8zM779 314l13 5l-1 -13zM884 371l11 8l-1 -15zM894 364l1 15l9 -7zM792 319l1 14l12 -8zM793 333l13 7l-1 -15zM860 370l13 9l-1 -16zM872 363l1 16l11 -8zM873 379l12 8l-1 -16zM884 371l1 16l10 -8zM806 340l1 15l13 -8zM807 355l14 7l-1 -15zM820 347l1 15l13 -8zM821 362l14 8l-1 -16zM834 354l1 16l12 -8zM835 370l13 8l-1 -16zM847 362l1 16l12 -8zM848 378l13 8l-1 -16zM860 370l1 16l12 -7z"/>
<path fill="#ff9800" stroke="#ff9800" stroke-width="1.2" d="M913 366l-1 -14l-9 6zM912 352l-11 -8l2 14zM802 300l-4 -13l-9 8zM798 287l-13 -5l4 13zM921 347l-10 -9l1 14zM912 352l-1 -14l-10 6zM798 287l-4 -13l-9 8zM794 274l-13 -4l4 12zM930 342l-10 -9l1 14zM921 347l-1 -14l-9 5zM802 267l-13 -5l5 12zM794 274l-5 -12l-8 8zM930 342l-2 -14l-8 5zM928 328l-10 -9l2 14zM802 267l-4 -12l-9 7zM798 255l-14 -4l5 11zM928 328l-2 -14l-8 5zM926 314l-11 -10l3 15zM806 247l-13 -4l5 12zM798 255l-5 -12l-9 8zM926 314l-3 -15l-8 5zM815 240l-14 -4l5 11zM806 247l-5 -11l-8 7zM923 299l-4 -14l-8 5zM919 285l-12 -9l4 14zM824 233l-14 -4l5 11zM815 240l-5 -11l-9 7zM919 285l-5 -13l-7 4zM914 272l-12 -9l5 13zM847 233l-15 -6l6 12zM838 239l-6 -12l-8 6zM832 227l-14 -4l6 10zM824 233l-6 -10l-8 6zM902 263l-6 -13l-7 4zM896 250l-13 -8l6 12zM889 254l-6 -12l-8 4zM883 242l-14 -8l6 12zM875 246l-6 -12l-8 5zM869 234l-14 -6l6 11zM861 239l-6 -11l-8 5zM855 228l-15 -6l7 11zM847 233l-7 -11l-8 5zM789 295l2 11l11 -6zM791 306l13 6l-2 -12zM882 356l12 8l-2 -15zM892 349l2 15l9 -6zM894 364l10 8l-1 -14zM791 306l1 13l12 -7zM792 319l13 6l-1 -13zM804 312l1 13l12 -7zM805 325l14 7l-2 -14zM872 363l12 8l-2 -15zM882 356l2 15l10 -7zM805 325l1 15l13 -8zM806 340l14 7l-1 -15zM819 332l1 15l12 -8zM820 347l14 7l-2 -15zM832 339l2 15l12 -7zM834 354l13 8l-1 -15zM846 347l1 15l12 -7zM847 362l13 8l-1 -15zM859 355l1 15l12 -7z"/>
<path fill="#ff9a00" stroke="#ff9a00" stroke-width="1.2" d="M903 358l-2 -14l-9 5zM901 344l-11 -9l2 14zM892 349l-2 -14l-10 6zM815 306l-4 -14l-9 8zM811 292l-13 -5l4 13zM911 338l-11 -9l1 15zM901 344l-1 -15l-10 6zM811 292l-4 -13l-9 8zM807 279l-13 -5l4 13zM920 333l-11 -9l2 14zM911 338l-2 -14l-9 5zM816 272l-14 -5l5 12zM807 279l-5 -12l-8 7zM920 333l-2 -14l-9 5zM918 319l-12 -10l3 15zM816 272l-5 -13l-9 8zM811 259l-13 -4l4 12zM918 319l-3 -15l-9 5zM915 304l-12 -9l3 14zM820 252l-14 -5l5 12zM811 259l-5 -12l-8 8zM923 299l-12 -9l4 14zM915 304l-4 -14l-8 5zM911 290l-12 -9l4 14zM829 245l-14 -5l5 12zM820 252l-5 -12l-9 7zM911 290l-4 -14l-8 5zM907 276l-13 -9l5 14zM853 245l-15 -6l6 12zM844 251l-6 -12l-9 6zM838 239l-14 -6l5 12zM829 245l-5 -12l-9 7zM907 276l-5 -13l-8 4zM902 263l-13 -9l5 13zM894 267l-5 -13l-8 5zM889 254l-14 -8l6 13zM881 259l-6 -13l-8 5zM875 246l-14 -7l6 12zM867 251l-6 -12l-8 6zM861 239l-14 -6l6 12zM853 245l-6 -12l-9 6zM802 300l2 12l11 -6zM804 312l13 6l-2 -12zM815 306l2 12l12 -6zM817 318l14 7l-2 -13zM870 348l12 8l-2 -15zM880 341l2 15l10 -7zM817 318l2 14l12 -7zM819 332l13 7l-1 -14zM831 325l1 14l12 -7zM832 339l14 8l-2 -15zM844 332l2 15l11 -7zM846 347l13 8l-2 -15zM857 340l2 15l11 -7zM859 355l13 8l-2 -15zM870 348l2 15l10 -7z"/>
<path fill="#ff9c00" stroke="#ff9c00" stroke-width="1.2" d="M890 335l-12 -8l2 14zM880 341l-2 -14l-10 6zM878 327l-13 -8l3 14zM868 333l-3 -14l-10 7zM865 319l-13 -7l3 14zM855 326l-3 -14l-10 7zM852 312l-14 -7l4 14zM842 319l-4 -14l-9 7zM838 305l-13 -7l4 14zM829 312l-4 -14l-10 8zM825 298l-14 -6l4 14zM900 329l-12 -8l2 14zM890 335l-2 -14l-10 6zM888 321l-13 -8l3 14zM878 327l-3 -14l-10 6zM838 305l-4 -14l-9 7zM834 291l-13 -6l4 13zM825 298l-4 -13l-10 7zM821 285l-14 -6l4 13zM909 324l-12 -9l3 14zM900 329l-3 -14l-9 6zM897 315l-12 -8l3 14zM834 291l-4 -14l-9 8zM830 277l-14 -5l5 13zM821 285l-5 -13l-9 7zM909 324l-3 -15l-9 6zM906 309l-12 -8l3 14zM897 315l-3 -14l-9 6zM840 270l-15 -6l5 13zM830 277l-5 -13l-9 8zM825 264l-14 -5l5 13zM906 309l-3 -14l-9 6zM903 295l-13 -9l4 15zM894 301l-4 -15l-9 6zM849 264l-14 -7l5 13zM840 270l-5 -13l-10 7zM835 257l-15 -5l5 12zM825 264l-5 -12l-9 7zM903 295l-4 -14l-9 5zM899 281l-13 -9l4 14zM890 286l-4 -14l-9 6zM886 272l-14 -8l5 14zM872 264l-14 -7l5 13zM863 270l-5 -13l-9 7zM858 257l-14 -6l5 13zM849 264l-5 -13l-9 6zM844 251l-15 -6l6 12zM835 257l-6 -12l-9 7zM899 281l-5 -14l-8 5zM894 267l-13 -8l5 13zM886 272l-5 -13l-9 5zM881 259l-14 -8l5 13zM872 264l-5 -13l-9 6zM867 251l-14 -6l5 12zM858 257l-5 -12l-9 6zM829 312l2 13l11 -6zM831 325l13 7l-2 -13zM842 319l2 13l11 -6zM844 332l13 8l-2 -14zM855 326l2 14l11 -7zM857 340l13 8l-2 -15zM868 333l2 15l10 -7z"/>
<path fill="#ff9e00" stroke="#ff9e00" stroke-width="1.2" d="M875 313l-13 -8l3 14zM865 319l-3 -14l-10 7zM862 305l-14 -7l4 14zM852 312l-4 -14l-10 7zM848 298l-14 -7l4 14zM888 321l-3 -14l-10 6zM885 307l-13 -9l3 15zM875 313l-3 -15l-10 7zM872 298l-14 -7l4 14zM862 305l-4 -14l-10 7zM858 291l-14 -7l4 14zM848 298l-4 -14l-10 7zM844 284l-14 -7l4 14zM894 301l-13 -9l4 15zM885 307l-4 -15l-9 6zM881 292l-13 -8l4 14zM872 298l-4 -14l-10 7zM868 284l-14 -7l4 14zM858 291l-4 -14l-10 7zM854 277l-14 -7l4 14zM844 284l-4 -14l-10 7zM890 286l-13 -8l4 14zM881 292l-4 -14l-9 6zM877 278l-14 -8l5 14zM868 284l-5 -14l-9 7zM863 270l-14 -6l5 13zM854 277l-5 -13l-9 6zM877 278l-5 -14l-9 6z"/>
<circle cx="806.8" cy="346.4" r="150" fill="url(#gS)" style="mix-blend-mode:plus-lighter"/>
<path fill="none" stroke="#000" stroke-width="1" shape-rendering="crispEdges" mask="url(#mF)" d="M924 302l0 -3M924 302l-3 0M924 302l1 5M924 302l3 1M924 302l-3 -5M858 384l2 -3M858 384l-3 3M858 384l3 4M858 384l-5 -4M796 449l1 -3M796 449l-1 4M796 449l-4 -2M796 449l5 0M946 266l1 1M946 266l1 1M946 266l-2 -3M946 266l-2 -4M946 266l4 5M870 371l5 -3M870 371l-3 3M870 371l4 2M870 371l-1 7M870 371l0 -7M870 371l-6 -2M913 317l-3 2M913 317l0 -3M913 317l1 5M913 317l3 1M913 317l-4 -3M797 446l-1 -5M797 446l-5 1M797 446l5 -4M797 446l4 3M935 283l2 -1M935 283l0 3M935 283l-4 -2M935 283l3 4M935 283l-2 -5M860 381l4 -5M860 381l5 1M860 381l-2 -7M860 381l1 7M860 381l-7 -1M908 322l2 -3M908 322l-2 4M908 322l3 6M908 322l6 0M908 322l-4 -1M908 322l-3 -5M794 460l1 -7M794 460l7 3M794 460l5 -4M794 460l0 6M794 460l-6 -5M794 460l-6 3M945 268l-1 0M945 268l1 0M945 268l-2 -4M945 268l2 3M842 400l4 -4M842 400l-4 2M842 400l-4 -2M842 400l-2 6M842 400l4 2M842 400l-3 -8M795 453l-3 -6M795 453l4 3M795 453l-7 2M795 453l6 -4M942 272l1 -1M942 272l1 4M942 272l-3 -1M942 272l3 4M942 272l-3 -4M894 339l3 -1M894 339l-2 5M894 339l-4 -1M894 339l4 4M894 339l-1 -6M947 266l-1 -1M947 266l1 2M947 266l-2 -3M947 266l3 5M947 266l3 5M947 266l-4 -5M800 438l-4 3M800 438l0 -6M800 438l5 -2M800 438l-7 -2M800 438l2 4M855 387l-4 5M855 387l-5 0M855 387l1 7M855 387l6 1M855 387l-2 -7M904 329l2 -3M904 329l-3 1M904 329l0 5M904 329l4 3M904 329l-3 -4M937 282l0 -2M937 282l1 5M937 282l3 3M937 282l-4 -4M851 392l-5 4M851 392l0 5M851 392l-1 -5M851 392l5 2M851 392l-5 -2M846 396l5 1M846 396l0 -6M846 396l0 6M846 396l-7 -4M940 275l0 1M940 275l3 1M940 275l-1 -4M940 275l3 4M940 275l-3 -4M931 291l-2 2M931 291l0 -3M931 291l-3 -3M931 291l3 1M931 291l2 5M807 428l-2 3M807 428l5 -2M807 428l0 -5M807 428l-4 -2M807 428l3 4M924 299l3 -1M924 299l-1 -6M924 299l3 4M924 299l-3 -2M864 376l3 -2M864 376l5 2M864 376l1 6M864 376l-6 -2M864 376l0 -7M875 368l0 -6M875 368l4 -4M875 368l-1 5M875 368l-5 -4M875 368l6 4M940 276l-3 -1M940 276l3 3M940 276l-3 -5M940 276l1 5M919 308l2 -2M919 308l0 3M919 308l-3 -1M919 308l-2 -5M919 308l3 3M946 267l-1 -1M946 267l1 0M946 267l-2 -4M946 267l3 4M946 267l2 4M946 267l-4 -6M944 271l-1 0M944 271l1 -1M944 271l-4 -5M944 271l-2 -5M944 271l3 5M944 271l4 4M937 280l1 -2M937 280l4 1M937 280l3 5M937 280l-4 -2M937 280l-2 -5M927 298l0 -4M927 298l4 0M927 298l-4 -5M927 298l0 5M927 298l5 6M943 271l-3 -5M943 271l2 5M943 271l4 5M943 271l-4 -3M944 268l1 2M944 268l-2 -2M944 268l-1 -4M944 268l3 3M944 268l4 7M944 268l-5 -6M899 334l-2 4M899 334l2 -4M899 334l5 0M899 334l3 6M899 334l-3 -8M899 334l-6 -1M946 268l-1 -2M946 268l-3 -4M946 268l1 3M946 268l2 3M878 359l-3 3M878 359l1 -4M878 359l4 0M878 359l1 5M878 359l-5 -2M910 319l4 3M910 319l-1 -5M910 319l-5 -2M929 293l-2 1M929 293l2 5M929 293l-1 -5M929 293l-4 -3M929 293l4 3M834 406l4 -4M834 406l-4 5M834 406l-6 -1M834 406l6 0M834 406l-1 -7M834 406l2 7M887 352l-3 3M887 352l1 -5M887 352l-5 -2M887 352l0 6M887 352l5 2M805 431l-5 1M805 431l0 5M805 431l-2 -5M805 431l5 1M938 278l-1 -3M938 278l3 3M938 278l-3 -3M906 326l5 2M906 326l-2 -5M906 326l2 6M906 326l-5 -1M838 402l0 -4M838 402l2 4M838 402l-5 -3M897 338l1 5M897 338l5 2M897 338l-4 -5M916 313l-3 1M916 313l3 -2M916 313l0 -6M916 313l0 5M916 313l-5 -5M916 313l6 4M901 330l3 4M901 330l0 -5M901 330l-5 -4M812 426l5 -4M812 426l-5 -3M812 426l-2 6M812 426l-1 -7M812 426l5 5M817 422l4 -2M817 422l1 -7M817 422l5 3M817 422l-6 -3M817 422l0 9M921 302l0 4M921 302l4 5M921 302l-4 1M921 302l0 -5M921 302l-5 -5M884 355l-5 0M884 355l-2 4M884 355l-2 -5M884 355l3 3M933 287l2 -1M933 287l-2 1M933 287l-2 -6M933 287l-4 -3M933 287l1 5M933 287l5 5M945 270l-3 -4M945 270l3 5M821 420l2 -4M821 420l5 1M821 420l-3 -5M821 420l1 5M927 294l4 4M927 294l-2 -4M927 294l-4 -1M935 286l-4 -5M935 286l3 1M935 286l3 6M931 288l-3 0M931 288l-2 -4M931 288l3 4M892 344l-4 3M892 344l0 5M892 344l-5 -3M892 344l-2 -6M892 344l6 -1M892 344l5 6M945 266l-2 -2M945 266l3 5M945 266l-3 -5M921 306l4 1M921 306l-4 -3M921 306l1 5M947 267l-3 -4M947 267l2 4M947 267l3 4M796 441l-4 6M796 441l-7 1M796 441l-3 -5M796 441l6 1M867 374l2 4M867 374l-3 -5M946 265l1 2M946 265l-2 -3M946 265l4 6M946 265l-3 -4M913 314l3 4M913 314l-4 0M913 314l-2 -6M823 416l6 0M823 416l2 -5M823 416l3 5M823 416l-5 -1M875 362l4 2M875 362l-5 2M875 362l-2 -5M888 347l4 2M888 347l-6 3M888 347l-1 -6M888 347l4 7M888 347l-7 -6M947 267l-3 -5M947 267l3 4M947 267l3 4M830 411l-1 5M830 411l-5 0M830 411l-2 -6M830 411l6 2M611 467l2 -6M611 467l-8 1M611 467l-5 -7M611 467l10 1M611 467l1 9M831 523l-1 -3M831 523l7 2M831 523l8 -8M831 523l-4 7M831 523l-9 -1M594 538l0 3M594 538l0 -4M594 538l-5 -2M594 538l7 5M595 547l-1 -6M595 547l0 6M595 547l8 7M595 547l-5 -5M595 547l-7 -1M595 547l6 -4M607 604l3 -1M607 604l-3 -3M607 604l-4 -2M607 604l5 3M607 604l0 3M826 563l5 -5M826 563l-7 4M826 563l5 2M826 563l0 5M826 563l-5 -7M592 528l2 -6M592 528l2 6M592 528l-4 2M592 528l-7 -6M592 528l7 3M762 593l-7 2M762 593l7 -2M762 593l6 3M762 593l0 5M762 593l-3 -6M678 612l6 0M678 612l-5 -1M678 612l3 3M678 612l-3 -4M746 597l9 -2M746 597l-5 3M746 597l0 5M746 597l8 4M746 597l0 -7M746 597l-9 -3M642 610l6 1M642 610l-6 -1M642 610l-3 1M642 610l6 4M642 610l1 4M642 610l-7 -6M642 610l4 -5M592 493l1 -7M592 493l1 7M592 493l-4 1M592 493l-5 -6M592 493l8 3M594 522l0 -8M594 522l-6 -6M594 522l-9 0M594 522l10 1M594 522l5 9M801 463l-2 -7M801 463l5 6M801 463l-7 3M801 463l6 -9M801 463l-3 10M801 463l10 -1M806 580l-6 2M806 580l4 -4M806 580l-1 4M806 580l7 1M806 580l-3 -5M684 612l6 1M684 612l-3 3M684 612l5 5M684 612l-9 -4M684 612l3 -6M839 553l-8 5M839 553l6 -3M839 553l2 -6M839 553l5 2M839 553l-1 8M839 553l-7 -3M648 611l6 -1M648 611l4 2M648 611l0 3M648 611l-2 -6M655 447l6 1M655 447l-5 5M655 447l4 -9M655 447l-8 -6M655 447l4 10M633 455l-5 0M633 455l4 -1M633 455l-3 -6M633 455l0 7M610 603l-6 -2M610 603l-6 -5M610 603l7 2M610 603l2 4M610 603l6 5M610 603l3 -3M673 611l-7 1M673 611l0 4M673 611l8 4M673 611l-12 -5M673 611l2 -3M819 494l0 9M819 494l-3 -3M819 494l9 1M819 494l4 -8M819 494l-10 3M596 559l-1 -6M596 559l0 5M596 559l7 7M596 559l-5 0M596 559l6 1M596 559l-7 -6M831 558l0 7M831 558l7 3M831 558l-10 -2M831 558l1 -8M673 446l7 -3M673 446l-7 -2M673 446l-2 -11M673 446l5 9M673 446l-5 7M781 587l6 0M781 587l-4 3M781 587l3 5M781 587l4 -6M781 587l-9 -4M813 486l-3 -5M813 486l3 5M813 486l4 -10M813 486l10 0M813 486l-12 0M813 486l-4 11M792 447l-3 -5M792 447l-4 8M792 447l-12 0M807 476l-1 -7M807 476l3 5M807 476l6 -7M807 476l10 0M807 476l-9 -3M807 476l-6 10M604 601l0 -3M604 601l-1 1M604 601l-5 -4M636 609l-5 -1M636 609l3 2M636 609l0 3M636 609l-1 -5M594 514l-2 -8M594 514l-6 2M594 514l-8 -6M594 514l10 9M594 514l7 -5M603 587l-1 -4M603 587l-1 2M603 587l5 1M603 587l7 6M603 587l-6 -3M620 605l-3 0M620 605l5 2M620 605l2 4M620 605l-7 -5M620 605l2 -4M593 486l-1 -8M593 486l-5 -6M593 486l-6 1M593 486l8 -5M593 486l7 10M793 585l7 -3M793 585l-6 2M793 585l-2 5M793 585l2 -8M793 585l-8 -4M793 585l6 4M826 512l-3 -4M826 512l4 4M826 512l7 -2M826 512l4 -8M826 512l-11 2M826 512l-4 10M711 430l7 -2M711 430l-9 4M711 430l-9 -7M711 430l2 -12M711 430l9 9M711 430l-2 11M800 582l5 2M800 582l-5 -5M800 582l3 -7M800 582l-1 7M660 612l-6 -2M660 612l6 0M660 612l3 3M660 612l-2 2M660 612l1 -6M604 594l0 4M604 594l-2 -5M604 594l-6 -5M604 594l6 -1M604 594l9 6M604 594l-7 -2M738 419l-3 0M738 419l5 -3M738 419l-3 -7M738 419l1 8M755 595l-1 6M755 595l7 3M755 595l-9 -5M755 595l4 -8M919 311l-3 -4M919 311l3 0M919 311l3 6M593 500l-1 6M593 500l-5 -6M593 500l-7 0M593 500l8 9M593 500l7 -4M741 600l-4 0M741 600l5 2M741 600l-2 4M741 600l-4 -6M819 567l-4 7M819 567l-10 3M819 567l7 1M819 567l2 6M819 567l2 -11M819 567l-9 -6M593 473l-1 5M593 473l4 -4M593 473l-2 -8M593 473l-6 -1M593 473l8 8M661 448l5 -4M661 448l-2 -10M661 448l-2 9M661 448l7 5M654 610l-2 3M654 610l4 4M654 610l7 -4M654 610l-8 -5M592 478l-4 2M592 478l-5 -6M592 478l9 3M755 409l-6 5M755 409l7 3M755 409l-9 -1M755 409l8 -5M755 409l-1 11M755 409l-2 -10M735 419l-5 2M735 419l0 -7M735 419l4 8M774 425l5 4M774 425l-7 -7M774 425l3 -9M774 425l9 -2M774 425l-10 5M774 425l1 10M838 541l3 6M838 541l-1 -8M838 541l10 -6M838 541l10 2M838 541l-15 1M838 541l-6 9M799 456l2 -7M799 456l8 -2M594 541l-4 1M594 541l-5 -5M594 541l7 2M806 469l7 0M806 469l-8 4M806 469l5 -7M595 553l8 1M595 553l-7 -7M595 553l7 7M595 553l-6 0M769 591l8 -1M769 591l-1 5M769 591l7 4M769 591l-10 -4M769 591l3 -8M650 452l-7 -1M650 452l-3 -11M650 452l9 5M650 452l-4 12M604 598l9 2M604 598l-5 -1M604 598l-7 -6M700 610l-5 2M700 610l7 -1M700 610l8 3M700 610l3 5M700 610l-13 -4M700 610l0 -6M810 576l5 -2M810 576l-1 -6M810 576l3 5M810 576l-7 -1M845 550l-4 -3M845 550l-1 5M845 550l3 -7M845 550l6 0M784 438l0 -7M784 438l5 4M784 438l9 -2M784 438l-4 9M784 438l-9 -3M937 275l0 -4M937 275l4 6M937 275l-2 0M937 275l-4 -5M601 579l-1 -5M601 579l1 4M601 579l-5 0M601 579l8 1M601 579l7 5M601 579l-7 -5M749 414l-6 2M749 414l-3 -6M749 414l5 6M823 508l-4 -5M823 508l7 -4M823 508l-8 6M666 612l7 3M666 612l-3 3M666 612l4 5M666 612l-5 -6M819 503l9 -8M819 503l11 1M819 503l-10 5M819 503l-10 -6M819 503l-4 11M690 613l5 -1M690 613l-1 4M690 613l7 4M690 613l-3 -7M743 416l3 -8M743 416l-8 -4M743 416l-4 11M743 416l11 4M800 432l5 4M800 432l3 -6M800 432l-7 4M800 432l-6 -6M628 455l-3 4M628 455l2 -6M628 455l-6 -5M628 455l5 7M690 441l-5 0M690 441l4 -5M690 441l-6 -10M690 441l-1 10M690 441l10 5M841 547l7 -4M841 547l-9 3M779 429l5 2M779 429l4 -6M779 429l-4 6M815 574l-6 -4M815 574l6 -1M815 574l-2 7M631 608l-6 -1M631 608l5 4M631 608l0 4M631 608l4 -4M631 608l-9 -7M600 574l-2 -6M600 574l-6 -5M600 574l9 6M600 574l5 -1M600 574l-6 0M718 428l4 -6M718 428l-5 -10M718 428l2 11M718 428l9 2M787 587l4 3M787 587l-3 5M787 587l-2 -6M613 461l6 -3M613 461l-7 -1M613 461l-2 -9M613 461l8 7M717 605l-7 1M717 605l7 -1M717 605l5 3M717 605l-2 6M717 605l2 -6M717 605l-8 -5M617 605l-1 3M617 605l5 4M617 605l-4 -5M767 418l-5 -6M767 418l2 -8M767 418l10 -2M767 418l-3 12M767 418l-13 2M830 520l0 -4M830 520l9 -5M830 520l-8 2M685 441l-5 2M685 441l-1 -10M685 441l4 10M643 451l-6 3M643 451l4 -10M643 451l-6 -7M643 451l3 13M603 468l-6 1M603 468l3 -8M603 468l-6 -7M603 468l-2 13M603 468l9 8M948 268l-3 -5M948 268l-3 -5M948 268l2 3M948 268l5 7M830 516l3 -6M830 516l9 -1M830 516l-8 6M694 436l8 -2M694 436l1 -7M694 436l-10 -5M694 436l6 10M619 458l6 1M619 458l-8 -6M619 458l3 -8M619 458l2 10M879 355l3 4M879 355l3 -5M879 355l-6 2M879 355l-3 -7M943 276l-4 -5M943 276l0 3M943 276l2 0M943 276l3 5M710 606l-3 3M710 606l5 5M710 606l-1 -6M710 606l-10 -2M810 481l7 -5M810 481l-9 5M598 568l-2 -4M598 568l-4 1M598 568l5 -2M598 568l7 5M598 568l-6 -4M794 466l-6 -3M794 466l-4 4M794 466l4 7M816 491l7 -5M816 491l-7 6M945 263l0 0M945 263l-5 -6M762 412l7 -2M762 412l1 -8M762 412l-8 8M737 600l-7 0M737 600l2 4M737 600l0 -6M594 534l-6 -4M594 534l-5 2M594 534l7 9M594 534l5 -3M730 421l-8 1M730 421l5 -9M730 421l-7 -8M730 421l9 6M730 421l-3 9M702 434l-7 -5M702 434l0 -11M702 434l-2 12M702 434l7 7M695 612l8 3M695 612l2 5M695 612l-8 -6M625 459l-3 -9M625 459l-4 9M625 459l8 3M680 443l-9 -8M680 443l4 -12M680 443l9 8M680 443l-2 12M730 600l-6 4M730 600l9 4M730 600l0 7M730 600l-11 -1M730 600l-5 -8M730 600l7 -6M602 583l-6 -4M602 583l6 5M602 583l6 1M602 583l-5 1M596 564l7 2M596 564l-5 -5M596 564l-4 0M882 359l-3 5M882 359l5 -1M882 359l3 6M784 431l9 5M784 431l10 -5M784 431l-1 -8M784 431l-9 4M602 589l-4 0M602 589l8 4M602 589l-5 -5M707 609l1 4M707 609l8 2M707 609l-7 -5M829 416l-4 -5M829 416l-3 5M829 416l7 -3M829 416l3 5M625 607l-3 2M625 607l6 5M625 607l-3 -6M637 454l-7 -5M637 454l0 -10M637 454l-4 8M637 454l9 10M939 271l-2 0M939 271l0 -3M939 271l-4 -6M838 398l-5 1M838 398l1 -6M945 263l-2 -2M945 263l-5 -6M722 422l-9 -4M722 422l1 -9M722 422l5 8M892 349l0 5M892 349l5 1M666 444l-7 -6M666 444l5 -9M666 444l2 9M825 411l3 -6M825 411l-7 4M825 411l-4 -4M639 611l-3 1M639 611l4 3M724 604l-2 4M724 604l6 3M724 604l-5 -5M777 590l7 2M777 590l-1 5M777 590l-5 -7M769 410l8 6M769 410l-6 -6M769 410l8 -6M851 397l5 -3M851 397l-5 5M851 397l3 7M603 602l0 3M603 602l4 5M603 602l-4 -5M603 602l-7 -3M597 469l-6 -4M597 469l0 -8M597 469l4 12M789 442l4 -6M789 442l-9 5M838 525l-1 8M838 525l10 2M838 525l10 -6M838 525l1 -10M838 525l-11 5M805 436l-3 6M805 436l5 -4M805 436l6 6M837 533l11 -6M837 533l11 2M837 533l-14 9M837 533l-10 -3M850 387l-4 3M850 387l3 -7M850 387l-6 -3M652 613l-4 1M652 613l6 1M652 613l3 4M856 394l5 -6M856 394l-2 10M856 394l6 4M592 506l-6 -6M592 506l-6 2M592 506l9 3M916 307l1 -4M916 307l-5 1M916 307l-4 -6M588 516l-3 6M588 516l-2 -8M588 516l-9 -5M673 615l8 0M673 615l-3 2M673 615l5 4M879 364l2 8M879 364l6 1M826 421l-4 4M826 421l6 0M826 421l3 9M943 279l-2 2M943 279l3 2M943 279l3 7M931 298l2 -2M931 298l1 6M931 298l5 5M940 266l2 0M940 266l-1 2M940 266l-2 -4M940 266l-6 -6M942 266l-3 -4M942 266l-4 -4M594 569l0 5M594 569l-2 -5M594 569l-8 -3M874 373l-5 5M874 373l7 -1M874 373l2 7M612 607l4 1M612 607l-5 0M612 607l1 3M612 607l7 5M944 263l0 -1M944 263l-2 -2M944 263l-5 -6M904 334l4 -2M904 334l-2 6M904 334l4 6M931 281l-2 3M931 281l2 -3M931 281l-6 -5M931 281l-3 -7M937 271l-4 -1M937 271l-2 -6M937 271l-5 -6M941 281l-1 4M941 281l5 5M941 281l4 9M882 350l-6 -2M882 350l-1 -9M911 328l3 -6M911 328l-3 4M911 328l6 1M911 328l4 9M869 378l-4 4M869 378l7 2M869 378l1 10M870 364l-6 5M870 364l3 -7M870 364l-5 -5M865 382l-4 6M865 382l5 6M768 596l-6 2M768 596l8 -1M768 596l4 4M846 390l-7 2M846 390l-2 -6M914 322l2 -4M914 322l3 7M914 322l6 2M925 307l2 -4M925 307l-3 4M925 307l6 3M925 307l3 8M928 288l-3 2M928 288l1 -4M928 288l-5 -6M916 318l6 -1M916 318l4 6M945 276l2 0M945 276l1 5M945 276l5 6M828 405l5 -6M828 405l-7 2M828 405l-6 -8M887 341l3 -3M887 341l-6 0M887 341l-2 -9M925 290l-2 3M925 290l-5 -3M925 290l-2 -8M938 287l2 -2M938 287l0 5M938 287l5 5M858 374l6 -5M858 374l-5 6M858 374l-1 -10M858 374l-6 -4M695 429l7 -6M695 429l-11 2M695 429l-4 -10M949 271l-1 0M949 271l1 0M949 271l3 5M807 423l-4 3M807 423l4 -4M807 423l-5 -6M603 605l4 2M603 605l-2 1M603 605l6 6M603 605l-7 -6M840 406l6 -4M840 406l-4 7M840 406l5 5M923 293l-2 4M923 293l-3 -6M923 293l-7 -4M909 314l-4 3M909 314l2 -6M909 314l-5 -5M788 455l0 8M788 455l-7 4M788 455l-8 -8M904 321l-3 4M904 321l1 -4M904 321l-5 -5M929 284l-4 -8M929 284l-6 -2M818 415l-7 4M818 415l3 -8M818 415l-6 -8M943 264l-1 -3M943 264l-4 -2M943 264l-6 -7M616 608l6 1M616 608l3 4M890 338l3 -5M890 338l-5 -6M947 276l1 -1M947 276l4 5M947 276l3 6M947 271l1 0M947 271l1 4M947 271l5 6M917 303l-1 -6M917 303l-5 -2M887 358l5 -4M887 358l-2 7M887 358l6 6M861 388l1 10M861 388l9 0M846 402l8 2M846 402l-1 9M908 332l0 8M908 332l7 5M934 292l-1 4M934 292l4 0M934 292l4 7M950 271l0 0M950 271l3 4M950 271l4 5M803 426l-9 0M803 426l-1 -9M940 285l5 5M940 285l3 7M596 579l-2 -5M596 579l1 5M596 579l-7 -3M927 303l5 1M927 303l4 7M898 343l4 -3M898 343l-1 7M898 343l6 6M793 436l1 -10M933 278l2 -3M933 278l-5 -4M933 278l-4 -8M921 297l-5 0M921 297l-5 -8M636 612l-5 0M636 612l7 2M636 612l4 4M948 271l4 6M948 271l4 5M933 296l3 7M933 296l5 3M922 311l0 6M922 311l6 4M864 369l-7 -5M864 369l1 -10M901 325l-5 1M901 325l-2 -9M805 584l8 -3M805 584l-6 5M805 584l2 4M844 555l-6 6M844 555l7 -5M844 555l5 3M802 442l-1 7M802 442l9 0M810 432l7 -1M810 432l1 10M622 609l9 3M622 609l-3 3M622 609l5 5M788 463l2 7M788 463l-7 -4M788 463l-8 7M935 275l-2 -5M935 275l-6 -5M948 275l4 2M948 275l3 6M948 275l7 9M746 602l8 -1M746 602l-7 2M746 602l4 5M607 607l6 3M607 607l2 4M944 262l-1 -1M944 262l-5 -5M944 262l-6 -7M822 425l-5 6M822 425l7 5M833 399l6 -7M833 399l-3 -9M833 399l-11 -2M801 449l6 5M801 449l10 -7M950 271l0 0M950 271l4 5M950 271l5 8M938 292l5 0M938 292l0 7M938 292l7 11M663 615l-5 -1M663 615l7 2M663 615l2 4M902 340l6 0M902 340l2 9M588 494l-1 -7M588 494l-2 6M588 494l-7 -4M681 615l8 2M681 615l-3 4M681 615l6 6M939 268l-4 -3M939 268l-5 -8M648 614l-5 0M648 614l7 3M648 614l2 5M905 317l-6 -1M905 317l-1 -8M943 261l-3 -4M943 261l-5 -6M873 357l3 -9M873 357l-8 2M873 357l-6 -8M896 326l-3 7M896 326l3 -10M896 326l-8 -1M896 326l-7 -11M831 565l7 -4M831 565l-5 3M831 565l0 6M942 261l-3 -4M942 261l-5 -4M942 261l-6 -7M598 589l-1 3M598 589l-1 -5M598 589l-6 -4M689 617l8 0M689 617l-2 4M689 617l7 4M811 419l-9 -2M811 419l1 -12M791 590l-7 2M791 590l8 -1M791 590l1 5M911 308l1 -7M911 308l-7 1M911 308l-6 -8M658 614l-3 3M658 614l7 5M922 317l6 -2M922 317l-2 7M922 317l7 10M893 333l-8 -1M893 333l-5 -8M722 608l-7 3M722 608l8 -1M722 608l3 6M853 380l-9 4M853 380l-1 -10M853 380l-10 -7M784 592l-8 3M784 592l8 3M784 592l-2 7M839 392l5 -8M839 392l-9 -2M839 392l-4 -10M854 404l-2 12M854 404l-9 7M854 404l8 -6M854 404l8 7M852 452l-3 7M852 452l-1 -9M852 452l6 8M852 452l-9 0M852 452l9 -7M851 464l-2 -5M851 464l1 6M851 464l7 -4M851 464l-8 1M704 284l10 -3M704 284l-7 2M704 284l3 -9M704 284l10 7M704 284l-5 10M704 284l-10 -7M850 435l1 -8M850 435l1 8M850 435l7 -2M850 435l-8 2M809 570l-6 5M809 570l-10 -2M809 570l1 -9M843 352l-6 -9M843 352l5 10M843 352l4 -13M843 352l-8 8M843 352l-8 0M843 352l12 0M591 447l3 -7M591 447l-1 7M591 447l-7 -4M591 447l8 4M597 383l-2 11M597 383l3 -10M597 383l-10 5M597 383l12 -4M597 383l10 10M597 383l-9 -10M603 554l-1 6M603 554l11 11M603 554l-2 -11M603 554l9 -1M714 281l9 0M714 281l-7 -6M714 281l4 -9M714 281l0 10M609 580l-4 -7M609 580l-1 4M609 580l10 3M609 580l8 10M609 580l4 -6M749 278l8 5M749 278l-8 -1M749 278l-3 -8M749 278l-5 8M749 278l8 -5M812 319l6 5M812 319l-6 -5M812 319l-7 6M812 319l7 -5M646 313l6 -5M646 313l-6 6M646 313l-7 -5M646 313l6 7M634 328l-8 5M634 328l6 -9M634 328l-8 -8M634 328l9 2M634 328l1 10M837 343l-8 -6M837 343l10 -4M837 343l-1 -13M837 343l-12 6M837 343l-2 9M776 290l5 6M776 290l-9 -2M776 290l8 -2M776 290l0 -9M776 290l-5 9M838 561l11 -3M838 561l-7 10M838 561l4 8M781 296l8 1M781 296l3 -8M781 296l2 8M781 296l-10 3M590 422l1 -10M590 422l-1 10M590 422l-6 -5M590 422l-8 5M590 422l9 7M590 422l7 -5M595 394l-4 9M595 394l-8 3M595 394l-8 -6M595 394l5 12M595 394l12 -1M795 577l-10 4M795 577l8 -2M795 577l-7 -5M795 577l4 -9M681 293l-10 6M681 293l10 -5M681 293l2 -9M681 293l-7 -4M681 293l1 8M681 293l8 3M849 496l-2 -10M849 496l0 9M849 496l10 3M849 496l11 -11M849 496l-8 8M849 496l-10 -1M818 324l8 6M818 324l9 -2M818 324l-1 11M818 324l-13 1M818 324l1 -10M847 486l6 -8M847 486l13 -1M847 486l-3 -9M847 486l-12 -1M847 486l-8 9M603 566l2 7M603 566l-1 -6M603 566l11 -1M603 566l10 8M849 459l9 1M849 459l-6 -7M849 459l-6 6M848 527l0 8M848 527l0 -8M848 527l9 3M848 527l12 -8M793 305l-4 -8M793 305l7 2M793 305l7 -7M793 305l-10 -1M793 305l-2 11M848 535l0 8M848 535l9 -5M848 535l11 5M606 357l4 -9M606 357l-4 8M606 357l-7 1M606 357l-4 -8M606 357l11 -2M606 357l3 10M591 403l0 9M591 403l-4 -6M591 403l-7 4M591 403l9 3M848 519l6 -8M848 519l-9 -4M848 519l12 0M857 364l-9 -2M857 364l8 -5M857 364l-5 6M857 364l-2 -12M733 281l-10 0M733 281l8 -4M733 281l-1 -9M733 281l11 5M733 281l-4 10M789 297l-5 -9M789 297l11 1M789 297l-6 7M789 297l7 -9M608 588l2 5M608 588l0 -4M608 588l9 2M849 505l5 6M849 505l-10 10M849 505l10 -6M849 505l-8 -1M617 341l9 -8M617 341l-7 7M617 341l0 -10M617 341l-8 -3M617 341l9 5M617 341l0 14M800 307l6 7M800 307l0 -9M800 307l-9 9M800 307l11 -4M588 480l-1 7M588 480l-1 -8M588 480l-8 -4M826 568l-5 5M826 568l5 3M829 337l-3 -7M829 337l7 -7M829 337l-4 12M829 337l-12 -2M723 281l-5 -9M723 281l9 -9M723 281l-9 10M723 281l6 10M626 333l-9 -2M626 333l0 -13M626 333l0 13M626 333l9 5M610 348l-1 -10M610 348l-8 1M610 348l7 7M594 440l-5 -8M594 440l-10 3M594 440l5 -11M594 440l11 0M594 440l5 11M754 601l8 -3M754 601l-4 6M754 601l9 4M785 581l-6 -6M785 581l3 -9M785 581l-13 2M821 573l-8 8M821 573l10 -2M821 573l2 6M826 330l1 -8M826 330l10 0M826 330l-9 5M762 598l1 7M762 598l10 2M591 465l-1 -11M591 465l-4 7M591 465l6 -4M591 465l-9 -5M631 612l9 4M631 612l-4 2M631 612l5 7M848 362l4 8M848 362l-13 -2M848 362l-5 11M848 362l7 -10M671 299l-11 2M671 299l3 -10M671 299l-8 -8M671 299l-7 13M671 299l8 12M671 299l11 2M851 427l1 -11M851 427l8 -4M851 427l-10 -5M851 427l6 6M851 427l-9 10M591 412l-7 5M591 412l-7 -5M591 412l9 -6M591 412l6 5M691 288l6 -2M691 288l-8 -4M691 288l8 6M691 288l-2 8M691 288l3 -11M601 606l-3 1M601 606l8 5M601 606l-5 -7M601 606l5 7M601 606l-8 -5M610 593l3 7M610 593l12 8M610 593l7 -3M853 478l-1 -8M853 478l7 7M853 478l-9 -1M853 478l9 -7M892 354l5 -4M892 354l1 10M892 354l7 4M708 613l7 -2M708 613l-5 2M708 613l6 3M767 288l-10 -5M767 288l-1 -9M767 288l9 -7M767 288l-12 7M767 288l4 11M643 614l-3 2M643 614l7 5M939 262l-1 0M939 262l-2 -5M939 262l-7 -9M715 611l10 3M715 611l-1 5M590 454l7 7M590 454l-6 -11M590 454l-8 6M590 454l9 -3M757 283l9 -4M757 283l-2 12M757 283l-13 3M757 283l0 -10M852 416l-7 -5M852 416l7 7M852 416l-11 6M852 416l10 -5M813 581l-6 7M813 581l10 -2M813 581l5 8M933 270l-1 -5M933 270l-4 0M933 270l-8 -10M852 470l6 -10M852 470l-9 -5M852 470l-8 7M852 470l10 1M881 372l4 -7M881 372l-5 8M881 372l3 9M881 372l9 2M602 365l-2 8M602 365l-3 -7M602 365l-7 0M602 365l7 2M605 573l8 1M590 542l-1 -6M590 542l-2 4M590 542l-7 -4M746 408l-11 4M746 408l-7 -11M746 408l7 -9M697 286l2 8M697 286l-3 -9M591 559l1 5M591 559l-2 -6M591 559l-7 -2M600 373l-5 -8M600 373l9 6M600 373l9 -6M600 373l-12 0M946 281l0 5M946 281l4 1M946 281l6 8M836 413l-4 8M836 413l9 -2M836 413l5 9M950 271l2 5M950 271l5 8M670 617l8 2M670 617l-5 2M670 617l3 4M613 600l9 1M741 277l5 -7M741 277l-9 -5M741 277l3 9M854 511l-15 4M854 511l5 -12M854 511l6 8M854 511l15 -6M806 314l-15 2M806 314l-1 11M806 314l13 0M806 314l5 -11M660 301l-8 7M660 301l3 -10M660 301l-10 -4M660 301l4 11M848 543l3 7M848 543l11 -3M587 487l-6 3M587 487l-7 -11M588 530l1 6M588 530l-3 -8M588 530l-7 -1M703 615l-6 2M703 615l11 1M703 615l4 7M652 308l-13 0M652 308l-2 -11M652 308l12 4M652 308l0 12M589 536l-8 -7M589 536l-6 2M953 275l1 1M953 275l6 10M599 597l-2 -5M599 597l-3 2M599 597l-10 -7M876 348l5 -7M876 348l-9 1M876 348l-5 -9M640 319l-14 1M640 319l-1 -11M640 319l3 11M640 319l12 1M851 443l6 -10M851 443l-8 9M851 443l-9 -6M851 443l10 2M803 575l-4 -7M790 470l-10 0M790 470l8 3M790 470l-2 9M597 592l-5 -7M597 592l-8 -2M739 604l-9 3M739 604l11 3M739 604l0 8M589 432l-5 11M589 432l-7 -5M589 432l10 -3M588 546l1 7M588 546l-5 -8M588 546l-10 -1M697 617l-1 4M697 617l10 5M817 431l-6 11M817 431l12 -1M817 431l4 9M885 365l8 -1M885 365l5 9M932 304l-1 6M932 304l4 -1M932 304l5 8M613 610l6 2M613 610l-4 1M613 610l5 5M602 560l12 5M897 350l7 -1M897 350l2 8M730 607l-5 7M730 607l9 5M608 584l9 6M940 257l-2 -2M940 257l-8 -10M851 550l-2 8M851 550l8 -10M851 550l10 2M594 574l-8 -8M594 574l-5 2M587 472l-5 -12M587 472l-7 4M585 522l-6 -11M585 522l-4 7M585 522l-12 -5M597 584l-5 1M597 584l-8 -8M916 297l-4 4M916 297l0 -8M916 297l-7 -5M619 612l8 2M619 612l-1 3M619 612l7 5M832 421l-3 9M832 421l9 1M821 407l-9 0M821 407l1 -10M592 564l-6 2M592 564l-8 -7M935 265l-3 0M935 265l-1 -5M935 265l-7 -8M845 411l-4 11M586 500l0 8M586 500l-5 -10M586 500l-8 -1M776 595l-4 5M776 595l6 4M912 301l-7 -1M912 301l-3 -9M881 341l4 -9M881 341l-10 -2M881 341l-5 -10M655 617l10 2M655 617l-5 2M655 617l5 5M640 616l10 3M640 616l-4 3M640 616l6 6M938 262l-4 -2M938 262l-6 -9M586 508l-7 3M586 508l-8 -9M931 310l-3 5M931 310l6 2M931 310l4 10M946 286l-1 4M946 286l6 3M946 286l6 10M627 614l9 5M627 614l-1 3M925 276l3 -2M925 276l-2 6M925 276l-8 -5M925 276l-4 -10M917 329l3 -5M917 329l-2 8M917 329l6 5M920 287l3 -5M920 287l-4 2M920 287l-5 -8M813 469l4 7M813 469l-2 -7M813 469l10 -6M844 384l-9 -2M844 384l-1 -11M862 398l8 -10M862 398l0 13M862 398l10 5M678 619l9 2M678 619l-5 2M678 619l5 5M598 607l2 3M598 607l8 6M598 607l-5 -6M598 607l-7 -3M799 589l8 -1M799 589l-7 6M799 589l5 8M952 277l0 -1M952 277l3 7M952 277l5 8M936 303l2 -4M936 303l1 9M936 303l6 7M606 460l5 -8M606 460l-9 1M606 460l-7 -9M928 274l1 -4M928 274l-7 -8M908 340l-4 9M908 340l7 -3M908 340l5 10M609 611l9 4M609 611l-3 2M609 611l7 7M865 359l2 -10M865 359l-10 -7M876 380l-6 8M876 380l8 1M876 380l4 11M596 599l-3 2M596 599l-7 -9M596 599l-9 -6M939 257l-1 -2M939 257l-3 -3M939 257l-8 -10M951 281l-1 1M951 281l4 3M951 281l6 11M945 290l-2 2M945 290l4 10M945 290l7 6M794 426l8 -9M794 426l-11 -3M794 426l-4 -13M943 292l2 11M943 292l6 8M923 282l-6 -11M923 282l-8 -3M950 282l2 7M950 282l7 10M807 454l4 -12M807 454l4 8M807 454l11 -3M811 442l10 -2M811 442l7 9M870 388l10 3M870 388l2 15M952 276l3 3M952 276l5 9M928 315l1 12M928 315l7 5M920 324l9 3M920 324l3 10M938 299l7 4M938 299l4 11M954 276l1 3M954 276l5 9M687 621l9 0M687 621l-4 3M687 621l11 6M777 416l6 7M777 416l0 -12M777 416l13 -3M899 316l5 -7M899 316l-10 -1M899 316l-5 -14M659 438l12 -3M659 438l-12 3M659 438l3 -12M659 438l-9 -13M763 404l14 0M763 404l3 -13M763 404l-10 -5M781 459l-1 11M781 459l-1 -12M781 459l-11 1M937 257l-1 -3M937 257l-5 -4M937 257l-8 -10M589 553l-5 4M589 553l-11 -8M802 417l10 -10M802 417l-2 -13M802 417l-12 -4M665 619l8 2M665 619l-5 3M665 619l7 7M702 423l11 -5M702 423l-2 -17M702 423l-11 -4M812 407l10 -10M812 407l-12 -3M812 407l-3 -14M617 331l-8 7M617 331l9 -11M617 331l-7 -5M885 332l3 -7M885 332l-9 -1M885 332l-7 -13M904 349l-5 9M904 349l9 1M904 349l4 10M828 495l-5 -9M828 495l2 9M828 495l7 -10M828 495l11 0M671 435l13 -4M671 435l-9 -9M671 435l1 -13M932 265l-7 -5M932 265l-4 -8M893 364l6 -6M893 364l-3 10M893 364l9 8M807 588l11 1M807 588l-3 9M746 270l-14 2M746 270l11 3M746 270l-6 -8M746 270l9 -9M650 619l10 3M650 619l-4 3M650 619l9 7M600 610l6 3M600 610l-3 0M600 610l-9 -6M600 610l4 5M611 452l11 -2M611 452l-6 -12M611 452l4 -10M611 452l-12 -1M833 510l6 5M833 510l-3 -6M833 510l8 -6M839 515l2 -11M938 255l-7 -8M938 255l-6 -8M830 390l5 -8M830 390l-8 7M830 390l-10 -9M780 470l8 9M780 470l-12 2M780 470l-10 -10M780 470l-7 14M713 418l10 -5M713 418l-13 -12M713 418l2 -14M618 615l8 2M618 615l-2 3M618 615l8 6M609 338l-7 11M609 338l1 -12M609 338l-12 -1M766 279l10 2M766 279l-9 -6M766 279l4 -10M735 412l-12 1M735 412l4 -15M735 412l-9 -11M829 430l12 -8M829 430l-8 10M829 430l13 7M829 430l1 17M636 619l-10 -2M636 619l10 3M636 619l-2 3M636 619l10 8M904 309l1 -9M904 309l-10 -7M929 270l-4 -10M929 270l-8 -4M849 558l-7 11M849 558l12 -6M849 558l7 7M916 289l-7 3M916 289l-1 -10M916 289l-12 -12M852 370l-9 3M934 260l-2 -7M934 260l-6 -3M934 260l-9 -10M684 431l-3 -13M684 431l7 -12M684 431l-12 -9M817 476l6 10M817 476l6 -13M817 476l14 -3M750 607l13 -2M750 607l-11 5M750 607l12 4M750 607l0 10M783 423l7 -10M647 441l-10 3M647 441l-10 -10M647 441l3 -16M798 473l-10 6M798 473l3 13M888 325l1 -10M888 325l-10 -6M606 613l10 5M606 613l-2 2M606 613l8 7M630 449l7 -5M630 449l-8 1M630 449l-5 -11M597 461l2 -10M780 447l-16 -2M780 447l-10 13M780 447l-5 -12M811 462l12 1M811 462l7 -11M587 397l0 -9M587 397l-3 10M587 397l-9 1M637 444l0 -13M637 444l-12 -6M592 585l-3 -9M592 585l-3 5M592 585l-10 -7M905 300l4 -8M905 300l-11 2M905 300l-7 -12M792 595l-10 4M792 595l12 2M792 595l0 8M683 284l-9 5M683 284l11 -7M683 284l-10 -6M626 617l8 5M626 617l0 4M673 621l10 3M673 621l-1 5M823 486l12 -1M823 486l8 -13M763 605l9 -5M763 605l-1 6M763 605l15 4M725 614l14 -2M725 614l-11 2M725 614l10 4M725 614l-2 8M584 417l0 -10M584 417l-2 10M584 417l-10 -2M831 571l-8 8M831 571l11 -2M831 571l1 9M830 504l11 0M830 504l9 -9M867 349l4 -10M867 349l-12 3M867 349l-7 -12M723 413l-8 -9M723 413l3 -12M915 337l8 -3M915 337l-2 13M915 337l9 11M584 443l-2 17M584 443l-2 -16M584 443l-10 6M584 443l-12 -9M626 320l13 -12M626 320l-16 6M626 320l0 -13M626 320l-12 -7M739 612l-4 6M739 612l11 5M593 601l-2 3M593 601l-6 -8M593 601l-11 -8M859 499l1 -14M859 499l10 6M859 499l12 -8M847 339l-11 -9M847 339l8 13M847 339l13 -2M847 339l3 -18M827 322l9 8M827 322l-8 -8M827 322l7 -8M597 610l3 4M597 610l-6 -6M597 610l7 5M597 610l-8 -4M772 600l10 -1M772 600l6 9M674 289l-11 2M674 289l-1 -11M639 308l11 -11M639 308l-13 -1M639 308l-2 -13M586 566l3 10M586 566l-2 -9M586 566l-7 2M586 566l-13 -12M823 579l-5 10M823 579l9 1M936 254l-5 -7M936 254l-7 -7M696 621l11 1M696 621l2 6M899 358l9 1M899 358l3 14M599 358l-4 7M599 358l3 -9M599 358l-9 -3M714 616l-7 6M714 616l9 6M884 381l6 -7M884 381l-4 10M884 381l9 8M587 388l1 -15M587 388l-9 10M587 388l-12 -4M835 382l-5 -10M835 382l-15 -1M835 382l8 -9M589 576l-7 2M589 576l-10 -8M595 365l-7 8M595 365l-5 -10M955 279l4 6M955 279l2 6M955 279l8 13M622 450l3 -12M622 450l-7 -8M777 404l-11 -13M777 404l12 -4M777 404l5 -13M777 404l13 9M784 288l-8 -7M784 288l12 0M784 288l5 -14M589 590l-2 3M589 590l-7 -12M589 590l-14 -9M660 622l12 4M660 622l-1 4M859 423l-2 10M859 423l3 -12M859 423l11 3M584 407l-6 -9M584 407l-10 8M582 460l-2 16M582 460l-8 -11M582 460l-11 2M952 289l0 7M952 289l5 3M952 289l7 14M707 275l11 -3M707 275l-13 2M707 275l-1 -10M932 253l-3 -6M932 253l-7 -3M932 253l-16 -17M822 397l-13 -4M822 397l-2 -16M646 622l13 4M646 622l0 5M841 422l1 15M909 292l-11 -4M909 292l-5 -15M782 599l-4 10M782 599l10 4M581 490l-1 -14M581 490l-3 9M581 490l-12 -9M857 433l4 12M857 433l13 -7M579 511l-1 -12M579 511l-6 6M579 511l-13 -11M718 272l14 0M718 272l7 -12M718 272l-12 -7M862 411l10 -8M862 411l8 15M937 312l5 -2M937 312l-2 8M937 312l7 11M955 284l2 8M955 284l2 1M955 284l9 14M945 303l4 -3M945 303l-3 7M945 303l8 9M945 303l6 17M800 298l11 5M800 298l-4 -10M800 298l14 -13M860 485l2 -14M860 485l11 6M860 485l16 -10M581 529l2 9M581 529l-8 -12M581 529l-10 0M857 530l3 -11M857 530l2 10M857 530l11 -1M683 624l-11 2M683 624l15 3M683 624l4 8M929 327l-6 7M929 327l6 -7M929 327l5 16M929 327l13 8M583 538l-5 7M583 538l-12 -9M858 460l4 11M858 460l3 -15M858 460l16 -7M602 349l-5 -12M602 349l-12 6M871 339l5 -8M871 339l-11 -2M871 339l-5 -14M836 330l-2 -16M836 330l14 -9M600 614l4 1M600 614l-5 -2M600 614l10 7M600 614l-11 -8M600 614l5 6M821 440l9 7M821 440l-3 11M580 476l-9 -14M580 476l-11 5M732 272l8 -10M732 272l-7 -12M616 618l10 3M616 618l-2 2M616 618l10 8M582 427l-8 -12M582 427l-10 7M663 291l-13 6M663 291l10 -13M663 291l-10 -7M776 281l-6 -12M776 281l13 -7M788 479l13 7M788 479l-2 13M788 479l-15 5M650 297l-13 -2M650 297l3 -13M796 391l4 13M796 391l-7 9M796 391l-14 0M796 391l7 -11M796 391l13 2M796 391l-7 -12M769 522l-10 -2M769 522l10 -2M769 522l-1 -12M769 522l5 10M769 522l-5 8M799 555l-7 -13M799 555l8 -13M799 555l12 -4M799 555l-9 8M799 555l-15 0M799 555l0 13M799 555l11 6M634 569l-8 1M634 569l5 -7M634 569l10 6M634 569l-9 -9M634 569l0 6M843 452l0 13M843 452l-9 8M843 452l-1 -15M843 452l-13 -5M700 406l-15 1M700 406l9 -11M700 406l15 -2M700 406l-11 -15M700 406l-9 13M700 406l2 -16M626 357l11 -5M626 357l-5 12M626 357l0 -11M626 357l6 7M626 357l-9 -2M766 391l-8 -14M766 391l-17 -4M766 391l8 -13M766 391l16 0M766 391l-13 8M656 511l-10 4M656 511l0 10M656 511l11 -6M656 511l11 10M656 511l-2 -13M656 511l-9 -6M775 313l8 -9M775 313l16 3M775 313l-10 8M775 313l-4 -14M775 313l-14 -4M775 313l3 12M717 466l5 -7M717 466l-3 -14M717 466l9 12M717 466l-15 -3M717 466l13 -2M717 466l-6 12M613 429l-14 0M613 429l14 -6M613 429l12 9M613 429l-8 11M613 429l5 -15M613 429l-7 -12M613 429l2 13M821 556l2 -14M821 556l-10 -5M821 556l11 -6M821 556l-11 5M741 472l8 10M741 472l-15 6M741 472l3 -15M741 472l15 -4M741 472l-11 -8M741 472l-4 11M733 572l11 2M733 572l-10 -8M733 572l1 11M733 572l6 -8M733 572l-8 3M646 381l-13 -5M646 381l-4 -17M646 381l12 -4M646 381l12 9M646 381l-13 13M646 381l0 16M646 381l9 -15M685 548l-10 -11M685 548l5 -11M685 548l-6 7M685 548l9 10M685 548l13 0M685 548l-10 -1M660 472l13 3M660 472l-1 -15M660 472l-10 11M660 472l-14 -8M660 472l7 12M660 472l11 -8M756 342l9 13M756 342l-15 -6M756 342l12 2M756 342l-1 -14M756 342l-12 5M756 342l11 -9M756 342l-4 11M675 537l-15 -5M675 537l15 0M675 537l5 -11M675 537l-8 -16M675 537l-11 6M675 537l0 10M636 486l-7 9M636 486l14 -3M636 486l-1 -11M636 486l6 9M636 486l-12 -3M683 576l1 -10M683 576l10 -1M683 576l7 7M683 576l-12 -4M683 576l-5 9M792 518l-13 2M792 518l-8 -12M792 518l12 10M792 518l7 -10M792 518l-5 13M792 518l11 -2M761 542l8 15M761 542l-8 -13M761 542l17 2M761 542l-14 6M761 542l13 -10M761 542l3 -12M761 542l-16 -4M761 542l-5 13M661 573l-10 -5M661 573l-6 4M661 573l4 8M661 573l-1 -9M661 573l10 -1M758 377l-9 10M758 377l16 1M758 377l-4 -13M758 377l-16 -5M758 377l8 -9M777 351l-12 4M777 351l0 -13M777 351l3 14M777 351l13 5M777 351l-9 -7M777 351l9 -6M717 490l7 13M717 490l-13 -2M717 490l9 -12M717 490l12 0M717 490l-9 11M717 490l-6 -12M720 343l-2 -14M720 343l11 5M720 343l-12 1M720 343l8 -7M720 343l-3 11M646 515l-9 -9M646 515l10 6M646 515l-12 4M646 515l2 12M646 515l1 -10M764 445l-7 11M764 445l0 -15M764 445l6 15M764 445l-12 3M764 445l-12 -9M764 445l11 -10M629 495l8 11M629 495l-8 -4M629 495l-11 2M629 495l13 0M629 495l-5 12M629 495l-5 -12M648 557l3 11M648 557l-3 -12M648 557l-9 5M648 557l10 -6M648 557l12 7M648 557l-9 -6M741 358l13 6M741 358l-10 -10M741 358l1 14M741 358l-13 5M741 358l3 -11M741 358l11 -5M740 495l18 0M740 495l-4 15M740 495l9 -13M740 495l-16 8M740 495l-11 -5M740 495l-3 -12M740 495l7 10M677 397l8 10M677 397l-4 12M677 397l-8 -7M677 397l12 -6M677 397l0 -13M677 397l-12 3M700 582l-3 7M700 582l4 -8M700 582l-7 -7M700 582l10 8M700 582l-10 1M700 582l10 -2M759 520l-6 9M759 520l-11 -3M759 520l9 -10M759 520l5 10M759 520l-3 -11M769 557l9 -13M769 557l0 14M769 557l10 9M769 557l-14 8M769 557l15 -2M769 557l-13 -2M800 404l-11 -4M800 404l9 -11M800 404l-10 9M841 504l-2 -9M633 376l9 -12M633 376l-12 -7M633 376l-12 10M633 376l0 18M633 376l-1 -12M652 539l8 -7M652 539l-12 -6M652 539l-7 6M652 539l-4 -12M652 539l6 12M652 539l12 4M704 332l2 -12M704 332l14 -3M704 332l4 12M704 332l-8 8M704 332l-9 -4M600 406l7 -13M600 406l6 11M600 406l-3 11M600 406l10 0M755 295l-9 13M755 295l-11 -9M755 295l-14 2M755 295l16 4M755 295l6 14M758 577l-14 -3M758 577l11 -6M758 577l1 10M758 577l-3 -12M758 577l-10 5M758 577l14 6M753 529l-5 -12M753 529l-16 -4M753 529l11 1M753 529l-8 9M601 481l13 6M601 481l11 -5M601 481l-1 15M601 481l8 12M599 429l6 11M599 429l7 -12M599 429l-2 -12M758 495l-9 -13M758 495l10 15M758 495l-2 14M758 495l15 -11M758 495l16 2M758 495l-11 10M758 495l3 -15M642 364l11 -15M642 364l-5 -12M642 364l13 2M642 364l-10 0M689 451l-3 19M689 451l-11 4M689 451l11 -5M689 451l13 12M637 506l-3 13M637 506l5 -11M637 506l-13 1M637 506l10 -1M658 377l8 -8M658 377l0 13M658 377l8 3M658 377l-3 -11M804 336l-7 10M804 336l-13 -3M804 336l7 10M804 336l13 -1M804 336l1 -11M614 487l7 4M614 487l-2 -11M614 487l4 10M614 487l10 -4M614 487l-5 6M725 516l11 -6M725 516l-1 -13M725 516l12 9M725 516l-13 -2M725 516l-5 11M686 470l-8 -15M686 470l7 13M686 470l-5 14M686 470l-13 5M686 470l16 -7M686 470l13 7M686 470l-15 -6M621 468l12 -6M621 468l-9 8M621 468l14 7M621 468l3 15M662 493l5 12M662 493l-12 -10M662 493l-8 5M662 493l5 -9M662 493l13 2M651 568l4 9M651 568l-12 -6M651 568l-7 7M651 568l9 -4M835 360l-15 4M835 360l-5 12M835 360l-10 -11M835 360l0 -8M835 360l8 13M708 525l-10 -6M708 525l-9 6M708 525l2 10M708 525l4 -11M708 525l12 2M749 387l-10 10M749 387l-7 -15M749 387l-12 -3M749 387l4 12M700 378l13 -10M700 378l13 6M700 378l-14 -5M700 378l-11 13M700 378l-2 -13M700 378l2 12M797 346l-6 -13M797 346l9 12M797 346l14 0M797 346l-7 10M797 346l-11 -1M791 333l0 -17M791 333l-14 5M791 333l-5 12M791 333l14 -8M791 333l-13 -8M820 364l10 8M820 364l5 -15M820 364l-14 -6M820 364l-4 -10M820 364l0 17M820 364l-11 6M792 542l15 0M792 542l-14 2M792 542l12 -14M792 542l-8 13M792 542l-5 -11M713 368l14 8M713 368l0 16M713 368l-15 -3M713 368l15 -5M713 368l-6 -11M713 368l4 -14M620 400l1 -14M620 400l13 -6M620 400l-13 -7M620 400l-2 14M620 400l-10 6M620 400l9 9M783 304l8 12M783 304l-12 -5M779 575l-10 -4M779 575l0 -9M779 575l9 -3M779 575l-7 8M627 423l10 8M627 423l11 -6M627 423l-2 15M627 423l-9 -9M627 423l2 -14M639 583l14 2M639 583l6 9M639 583l-14 -5M639 583l-9 6M639 583l5 -8M639 583l-5 -8M664 312l9 9M664 312l15 -1M664 312l-12 8M664 312l0 14M710 546l13 -4M710 546l-2 10M710 546l0 -11M710 546l-9 -6M710 546l10 6M710 546l-12 2M757 456l13 4M757 456l-5 -8M757 456l-13 1M757 456l-1 12M779 520l5 -14M779 520l-11 -10M779 520l-5 12M779 520l8 11M830 372l-10 9M830 372l13 1M706 320l0 -14M706 320l12 9M706 320l12 -7M706 320l-13 -5M706 320l-11 8M733 326l-15 3M733 326l8 10M733 326l-5 10M733 326l3 -10M733 326l11 -4M733 326l-6 -8M626 570l-1 8M626 570l-12 -5M626 570l-1 -10M626 570l8 5M656 521l4 11M656 521l11 0M656 521l-8 6M825 349l-14 -3M825 349l-8 -14M825 349l-9 5M825 349l10 3M719 599l6 -7M719 599l-10 1M719 599l-9 -9M706 306l8 -15M706 306l-15 -2M706 306l12 7M706 306l-13 9M706 306l14 -5M706 306l-7 -12M637 431l1 -14M637 431l-12 7M637 431l13 -6M653 585l-8 7M653 585l2 -8M653 585l4 11M653 585l12 -4M653 585l-9 -10M653 585l14 6M715 573l8 -9M715 573l5 9M715 573l-11 1M715 573l-5 7M715 573l-8 -8M715 573l10 2M688 591l2 8M688 591l-8 4M688 591l9 -2M688 591l2 -8M688 591l11 5M688 591l-10 -6M727 376l-14 8M727 376l0 13M727 376l15 -4M727 376l1 -13M727 376l10 8M660 532l7 -11M660 532l-12 -5M660 532l4 11M685 407l-12 2M685 407l-4 11M685 407l4 -16M685 407l6 12M736 510l12 7M736 510l-12 -7M736 510l1 15M736 510l11 -5M713 384l-4 11M713 384l5 10M713 384l14 5M713 384l-11 6M843 465l-9 -5M843 465l1 12M843 465l-12 8M653 349l-16 3M653 349l0 -15M653 349l12 -2M653 349l-9 -8M653 349l2 17M653 349l14 7M653 349l11 -11M806 358l5 -12M806 358l-16 -2M806 358l-10 10M806 358l10 -4M806 358l3 12M678 455l-7 9M678 455l-10 -2M674 332l1 12M674 332l-1 -11M674 332l10 -8M674 332l11 3M674 332l-10 -6M674 332l-10 6M834 460l-11 3M834 460l-4 -13M834 460l-3 13M637 352l-11 -6M637 352l-2 -14M637 352l7 -11M637 352l-5 12M635 604l-13 -3M635 604l-6 -7M635 604l4 -6M635 604l11 1M673 409l8 9M673 409l-8 -9M673 409l-12 4M673 409l-1 13M746 557l1 -9M746 557l-7 7M746 557l9 8M746 557l-13 -4M746 557l10 -2M739 397l-12 -8M739 397l-13 4M739 397l-2 -13M739 397l14 2M681 418l10 1M681 418l-9 4M645 592l4 8M645 592l-15 -3M645 592l12 4M645 592l-6 6M791 316l14 9M791 316l-13 9M723 542l-13 -7M723 542l13 1M723 542l-3 10M723 542l9 -7M723 542l10 11M723 542l-3 -15M698 519l-7 -10M698 519l2 -11M698 519l1 12M698 519l14 -5M698 519l-8 7M698 519l-12 -2M691 509l9 -1M691 509l-11 -3M691 509l1 -12M691 509l-5 8M807 542l9 -9M807 542l16 0M807 542l4 9M807 542l-3 -14M784 506l-16 4M784 506l15 2M784 506l2 -14M784 506l-10 -9M784 506l11 -8M693 483l-12 1M693 483l11 5M693 483l6 -6M693 483l-1 14M661 606l-12 -6M661 606l14 2M661 606l-4 -10M661 606l10 -6M661 606l-15 -1M621 491l-3 6M621 491l3 -8M725 592l-5 -10M725 592l9 -9M725 592l-15 -2M725 592l12 2M700 508l12 6M700 508l-8 -11M700 508l8 -7M640 533l-13 -4M640 533l-6 -14M640 533l5 12M640 533l8 -6M640 533l-6 8M722 459l-8 -7M722 459l7 -9M722 459l8 5M697 352l-10 7M697 352l11 -8M697 352l1 13M697 352l10 5M697 352l-10 -5M697 352l-1 -12M616 529l-12 -6M616 529l11 0M616 529l-5 8M616 529l7 10M616 529l1 -12M714 452l-14 -6M714 452l15 -2M714 452l6 -13M714 452l-12 11M714 452l-5 -11M622 601l7 -4M622 601l-5 -11M619 548l-8 -11M619 548l-7 5M619 548l11 2M619 548l6 12M619 548l4 -9M619 548l-8 -2M669 551l1 9M669 551l10 4M669 551l-11 0M669 551l-5 -8M669 551l6 -4M709 395l6 9M709 395l9 -1M709 395l-7 -5M816 533l7 9M816 533l-12 -5M816 533l11 -3M816 533l6 -11M749 482l7 -14M749 482l-12 1M749 482l12 -2M778 544l-4 -12M778 544l6 11M778 544l9 -13M746 590l13 -3M746 590l-12 -7M746 590l2 -8M746 590l-9 4M823 542l-12 9M823 542l9 8M823 542l4 -12M774 378l6 -13M774 378l8 13M774 378l-8 -10M774 378l15 1M744 574l-10 9M744 574l-5 -10M744 574l11 -9M744 574l4 8M604 523l7 14M604 523l-3 -14M604 523l13 -6M604 523l-5 8M676 515l-9 -10M676 515l4 -9M676 515l4 11M676 515l-9 6M676 515l10 2M811 551l-1 10M633 462l2 13M633 462l13 2M811 346l6 -11M811 346l5 8M714 291l6 10M714 291l-15 3M714 291l15 0M842 437l-12 10M708 556l15 8M708 556l12 -4M708 556l-14 2M708 556l-1 9M708 556l-10 -8M747 548l-11 -5M747 548l-2 -10M747 548l-14 5M747 548l9 7M748 517l-11 8M748 517l8 -8M748 517l-1 -12M690 599l-10 -4M690 599l-3 7M690 599l10 5M690 599l9 -3M718 329l0 -16M718 329l-10 15M718 329l10 7M718 329l9 -11M765 355l-11 9M765 355l15 10M765 355l3 -11M765 355l1 13M765 355l-13 -2M724 503l5 -13M724 503l-12 11M724 503l-16 -2M723 564l16 0M723 564l-3 -12M723 564l10 -11M723 564l-16 1M723 564l2 11M823 463l7 -16M823 463l-5 -12M823 463l8 10M621 369l-12 10M621 369l0 17M621 369l11 -5M621 369l-4 -14M621 369l-12 -2M681 484l-8 -9M681 484l11 13M681 484l-14 0M681 484l-6 11M715 404l3 -10M715 404l11 -3M804 528l-17 3M804 528l11 -14M804 528l-1 -12M804 528l18 -6M769 571l10 -5M769 571l-14 -6M769 571l3 12M742 443l10 5M742 443l2 14M742 443l-13 7M742 443l10 -7M742 443l-3 -16M742 443l-11 -5M670 560l9 -5M670 560l14 6M670 560l-12 -9M670 560l-10 4M670 560l1 12M809 508l-10 0M809 508l0 -11M809 508l6 6M809 508l-6 8M649 600l8 -4M649 600l-10 -2M649 600l-3 5M675 344l-10 3M675 344l10 -9M675 344l4 10M675 344l12 3M675 344l-8 12M675 344l-11 -6M691 304l2 11M691 304l-12 7M691 304l8 -10M691 304l-9 -3M691 304l-2 -8M609 379l12 7M609 379l-2 14M609 379l0 -12M765 321l-11 -4M765 321l-10 7M765 321l-4 -12M765 321l2 12M765 321l13 4M648 410l7 -8M648 410l-10 7M648 410l-10 -5M648 410l2 15M648 410l-2 -13M648 410l13 3M655 402l3 -12M655 402l-9 -5M655 402l10 -2M655 402l6 11M759 587l-11 -5M759 587l13 -4M673 475l-6 9M673 475l-2 -11M625 578l-11 -13M625 578l5 11M625 578l-6 5M625 578l-12 -4M625 578l9 -3M638 417l0 -12M638 417l12 8M638 417l-9 -8M754 364l-12 8M754 364l12 4M754 364l-2 -11M669 390l-11 0M669 390l8 -6M669 390l-3 -10M669 390l-4 10M627 529l7 -10M627 529l-4 10M627 529l-10 -12M627 529l7 12M659 457l-13 7M659 457l12 7M659 457l9 -4M746 308l-15 -2M746 308l-5 -11M746 308l8 9M746 308l15 1M746 308l-10 8M746 308l-2 14M612 476l12 7M614 565l-2 -12M614 565l11 -5M614 565l-1 9M777 338l-9 6M777 338l9 7M777 338l-10 -5M777 338l1 -13M629 597l1 -8M629 597l10 1M629 597l-12 -7M764 430l-12 6M764 430l11 5M764 430l-10 -10M675 608l-4 -8M675 608l12 -2M618 497l-6 7M618 497l6 10M618 497l-9 -4M655 577l10 4M655 577l-11 -2M625 438l-10 4M768 510l-12 -1M768 510l6 -13M667 505l13 1M667 505l0 16M667 505l-13 -7M667 505l8 -10M612 504l-11 5M612 504l12 3M612 504l-12 -8M612 504l5 13M612 504l-3 -11M677 364l-11 5M677 364l9 9M677 364l2 -10M677 364l10 -5M677 364l-3 10M677 364l-10 -8M666 369l0 11M666 369l8 5M666 369l-11 -3M666 369l1 -13M611 537l-10 6M611 537l12 2M611 537l0 9M611 537l-12 -6M718 394l9 -5M718 394l8 7M790 563l-11 3M790 563l-6 -8M790 563l-2 9M790 563l9 5M690 537l9 -6M690 537l-10 -11M690 537l11 3M690 537l0 -11M690 537l8 11M658 390l8 -10M658 390l-12 7M658 390l7 10M634 519l-10 -12M634 519l14 8M634 519l-17 -2M720 582l14 1M720 582l-10 8M720 582l-10 -2M720 582l5 -7M673 321l11 3M673 321l6 -10M673 321l-9 5M601 543l11 10M601 543l10 3M601 543l-2 -12M844 477l-9 8M844 477l-13 -4M799 508l10 -11M799 508l4 8M799 508l-4 -10M630 589l-11 -6M630 589l9 9M630 589l-13 1M696 567l-12 -1M696 567l8 7M696 567l-3 8M696 567l-2 -9M696 567l11 -2M653 334l-10 -4M653 334l-1 -14M653 334l-9 7M653 334l11 -8M653 334l11 4M744 286l-3 11M744 286l-15 5M650 483l-15 -8M650 483l-8 12M650 483l4 15M650 483l-4 -19M650 483l17 1M657 596l14 4M657 596l10 -5M704 488l-5 -11M704 488l-12 9M704 488l4 13M704 488l7 -10M699 531l11 4M699 531l2 9M699 531l-9 -5M780 365l10 -9M780 365l16 3M780 365l-14 3M780 365l9 14M726 478l3 12M726 478l4 -14M726 478l11 5M726 478l-15 0M731 306l10 -9M731 306l-13 7M731 306l-11 -5M731 306l-2 -15M731 306l5 10M731 306l-4 12M635 475l11 -11M635 475l-11 8M619 583l-2 7M619 583l-6 -9M601 509l-1 -13M601 509l16 8M686 373l3 18M686 373l-9 11M686 373l1 -14M686 373l12 -8M686 373l-12 1M621 386l12 8M621 386l-14 7M741 297l-12 -6M626 346l9 -8M626 346l-9 9M680 506l12 -9M680 506l-5 -11M680 506l6 11M718 313l2 -12M718 313l9 5M729 490l8 -7M700 446l2 17M700 446l9 -5M768 472l2 -12M768 472l-12 -4M768 472l5 12M768 472l-7 8M734 583l14 -1M734 583l-9 -8M734 583l3 11M790 356l6 12M790 356l-4 -11M680 526l-13 -5M680 526l10 0M680 526l6 -9M741 336l-10 12M741 336l-13 0M741 336l14 -8M741 336l3 11M741 336l3 -14M689 391l-12 -7M689 391l13 -1M633 394l5 11M633 394l13 3M633 394l-4 15M737 525l-5 10M737 525l8 13M737 525l-17 2M645 545l13 6M645 545l-11 -4M645 545l-6 6M665 347l2 9M665 347l-1 -9M731 348l-3 -12M731 348l-3 15M731 348l13 -1M731 348l-14 6M677 384l-11 -4M677 384l-3 -10M612 553l13 7M612 553l-1 -7M774 532l-10 -2M774 532l13 -1M642 495l12 3M642 495l5 10M684 324l9 -9M684 324l1 11M684 324l-5 -13M684 324l11 4M693 315l-14 -4M693 315l2 13M665 581l2 10M665 581l6 -9M665 581l13 4M662 426l-12 -1M662 426l-1 -13M662 426l10 -4M789 400l-7 -9M789 400l1 13M685 335l2 12M685 335l11 5M685 335l10 -7M770 460l-14 8M638 405l8 -8M638 405l-9 4M680 595l-9 5M680 595l7 11M680 595l-13 -4M680 595l-2 -10M624 507l-7 10M710 535l-9 5M710 535l10 -8M639 562l-9 -12M639 562l5 13M639 562l-14 -2M639 562l0 -11M752 448l-8 9M752 448l0 -12M744 457l-15 -7M744 457l12 11M744 457l-14 7M630 550l-5 10M630 550l-7 -11M630 550l4 -9M630 550l9 1M801 486l-15 6M801 486l8 11M801 486l-6 12M754 317l1 11M754 317l7 -8M754 317l-10 5M779 566l5 -11M779 566l9 6M729 450l-9 -11M729 450l2 -12M729 450l1 14M643 330l9 -10M643 330l-8 8M643 330l1 11M679 555l5 11M679 555l15 3M679 555l-4 -8M739 564l16 1M739 564l-6 -11M756 509l-9 -4M607 393l3 13M605 440l10 2M605 440l-6 11M679 311l3 -10M786 492l-13 -8M786 492l-12 5M786 492l9 6M768 344l-1 -11M684 566l9 9M684 566l10 -8M684 566l-13 6M782 391l7 -12M796 368l7 12M796 368l-7 11M796 368l13 2M803 380l6 13M803 380l17 1M803 380l-14 -1M803 380l6 -10M727 389l-1 12M727 389l10 -5M817 335l-12 -10M720 301l9 -10M720 439l11 -1M720 439l-11 2M720 439l7 -9M712 514l-4 -13M712 514l8 13M699 294l-10 2M709 600l1 -10M709 600l-9 4M709 600l-10 -4M755 565l1 -10M752 436l-13 -9M752 436l2 -16M652 320l12 6M679 354l8 5M679 354l8 -7M679 354l-12 2M687 359l11 6M687 359l0 -12M702 463l-3 14M702 463l9 15M701 540l-3 8M690 526l-4 -9M708 344l-1 13M708 344l9 10M708 344l-12 -4M671 600l16 6M671 600l-4 -9M635 338l9 3M835 485l-4 -12M835 485l4 10M698 365l9 -8M736 543l-4 -8M736 543l9 -5M736 543l-3 10M644 575l-10 0M618 414l-12 3M618 414l-8 -8M618 414l11 -5M666 380l8 -6M697 589l13 1M697 589l-7 -6M697 589l2 7M623 539l11 2M809 393l11 -12M658 551l2 13M658 551l6 -8M742 372l-14 -9M742 372l-5 12M606 417l-9 0M606 417l4 -11M756 468l5 12M788 572l11 -4M660 564l11 8M699 477l12 1M755 328l12 5M755 328l-11 -6M650 425l11 -12M799 568l11 -7M820 381l-11 -11M773 484l1 13M773 484l-12 -4M600 496l9 -3M639 598l7 7M830 447l-12 4M720 552l13 1M655 366l12 -10M692 497l16 4M692 497l-17 -2M771 299l-10 10M654 498l-7 7M728 363l-11 -9M634 541l5 10M809 497l-14 1M707 357l10 -3M704 574l-11 1M704 574l6 6M704 574l3 -9M732 535l13 3M732 535l-12 -8M667 484l8 11M744 347l8 6M739 427l-8 11M739 427l15 -7M739 427l-12 3M671 464l-3 -11M767 333l11 -8M693 575l-3 8M736 316l8 6M736 316l-9 2M687 347l9 -7M710 590l0 -10M710 590l-11 6M815 514l-12 2M815 514l7 8M731 438l-4 -8M694 558l13 7M694 558l4 -10M665 400l-4 13M690 583l-12 2M687 606l13 -2M700 604l-1 -8M664 326l0 12M661 413l11 9M667 591l11 -6M664 543l11 4M671 572l7 13M696 340l-1 -12M682 301l7 -5M827 530l-5 -8M617 355l-8 12M591 604l-2 2M591 604l-9 -11M591 604l-10 -7M694 277l-21 1M694 277l12 -12M694 277l-10 -18M819 314l-8 -11M819 314l15 0M819 314l5 -12M757 273l13 -4M757 273l-2 -12M584 557l-6 -12M584 557l-11 -3M917 271l-2 8M917 271l4 -5M917 271l-10 -4M917 271l-9 -15M949 300l3 -4M949 300l4 12M949 300l9 11M952 296l7 7M952 296l6 15M890 374l12 -2M890 374l3 15M923 334l1 14M923 334l11 9M842 569l-10 11M842 569l14 -4M842 569l4 9M860 519l9 -14M860 519l8 10M860 519l19 -3M604 615l10 5M604 615l6 6M915 279l-11 -2M915 279l-8 -12M855 352l5 -15M862 471l12 -18M862 471l14 4M634 622l-8 -1M634 622l12 5M634 622l3 5M913 350l-5 9M913 350l11 -2M913 350l7 19M859 540l2 12M859 540l9 -11M859 540l21 -1M811 303l13 -1M811 303l3 -18M876 331l2 -12M876 331l-10 -6M595 612l1 2M595 612l-6 -6M595 612l10 8M595 612l-8 -6M880 391l-8 12M880 391l13 -2M880 391l5 16M889 315l5 -13M889 315l-11 4M889 315l-10 -13M957 292l2 11M957 292l7 6M957 292l8 16M959 285l4 7M959 285l8 16M626 621l11 6M626 621l0 5M925 260l-4 6M925 260l3 -3M925 260l-12 -8M925 260l-10 -16M942 310l2 13M942 310l9 10M957 285l6 7M957 285l7 13M596 614l-6 -4M596 614l7 5M596 614l9 6M596 614l-9 -8M596 614l-6 -4M596 614l7 5M935 320l9 3M935 320l7 15M861 552l-5 13M861 552l9 6M861 552l19 -13M872 403l13 4M872 403l-2 23M861 445l9 -19M861 445l13 8M921 266l-8 -14M921 266l-13 -10M588 373l2 -18M588 373l-13 11M588 373l-13 -10M614 620l-4 1M614 620l12 6M614 620l6 6M672 626l-13 0M672 626l15 6M672 626l3 8M928 257l-3 -7M928 257l-13 -13M818 589l-14 8M818 589l14 -9M818 589l-2 10M818 589l14 2M804 597l-12 6M804 597l12 2M804 597l-2 13M578 499l-9 -18M578 499l-12 1M931 247l1 0M931 247l-2 0M931 247l-9 -10M931 247l-9 -11M707 622l-9 5M707 622l16 0M707 622l13 9M908 359l-6 13M908 359l12 10M610 621l-5 -1M610 621l10 5M610 621l10 7M587 593l-5 0M587 593l-12 -12M590 610l13 9M590 610l-3 -4M590 610l-13 -11M589 606l-2 0M589 606l-8 -9M589 606l-16 -13M610 326l-13 11M610 326l4 -13M610 326l-14 -8M578 545l-5 9M578 545l-7 -16M578 545l-16 -11M932 247l-10 -11M659 626l-13 1M659 626l16 8M659 626l3 8M698 627l-11 5M698 627l22 4M698 627l8 10M603 619l2 1M603 619l11 7M603 619l10 6M735 618l-12 4M735 618l15 -1M735 618l4 8M723 622l-3 9M723 622l16 4M894 302l4 -14M894 302l-15 0M894 302l-12 -18M929 247l-7 -10M929 247l-13 -11M646 627l-9 0M646 627l16 7M646 627l4 7M762 611l-12 6M762 611l16 -2M762 611l5 7M832 580l14 -2M832 580l0 11M605 620l8 5M605 620l15 8M637 627l-11 -1M637 627l2 5M637 627l13 7M740 262l-15 -2M740 262l15 -1M740 262l2 -16M574 449l-3 13M574 449l-2 -15M574 449l-12 -4M902 372l-9 17M902 372l18 -3M902 372l8 21M626 626l-6 0M626 626l13 6M626 626l8 8M898 288l6 -11M898 288l-16 -4M898 288l-9 -16M925 250l-9 -14M925 250l-10 -6M582 578l-3 -10M582 578l-7 3M582 578l-13 -13M626 307l11 -12M626 307l-12 6M626 307l-11 -11M878 319l-12 6M878 319l1 -17M878 319l-15 -12M750 617l-11 9M750 617l17 1M750 617l8 10M687 632l-12 2M687 632l19 5M687 632l6 8M587 606l-10 -7M587 606l-14 -13M778 609l14 -6M778 609l-11 9M778 609l24 1M778 609l5 16M856 565l-10 13M856 565l14 -7M856 565l9 8M924 348l10 -5M924 348l-4 21M924 348l10 11M904 277l3 -10M904 277l-15 -5M904 277l-15 -24M792 603l10 7M620 626l0 2M620 626l14 8M578 398l-4 17M578 398l-3 -14M578 398l-13 3M796 288l-7 -14M796 288l18 -3M614 626l-1 -1M614 626l12 7M613 625l7 3M613 625l13 8M579 568l-6 -14M579 568l-10 -3M574 415l-2 19M574 415l-9 -14M574 415l-14 8M597 337l-7 18M597 337l-16 3M597 337l-1 -19M869 505l2 -14M869 505l10 11M869 505l22 -15M963 292l1 6M963 292l4 9M963 292l7 15M959 303l-1 8M959 303l6 5M959 303l11 24M573 517l-2 12M573 517l-7 -17M573 517l-17 -7M893 389l-8 18M893 389l17 4M893 389l6 19M673 278l-20 6M673 278l11 -19M673 278l-13 -10M953 312l5 -1M953 312l-2 8M953 312l9 20M582 593l-1 4M582 593l-7 -12M582 593l-13 -9M637 295l16 -11M637 295l-22 1M637 295l2 -19M860 337l6 -12M860 337l-10 -16M571 462l-2 19M571 462l-9 -17M571 462l-13 -1M934 343l8 -8M934 343l0 16M934 343l14 14M590 355l-15 8M590 355l-9 -15M620 628l14 6M620 628l6 5M620 628l15 9M572 434l-10 11M572 434l-12 -11M770 269l-15 -8M770 269l19 5M770 269l6 -18M675 634l-13 0M675 634l18 6M675 634l4 8M871 491l5 -16M871 491l20 -1M944 323l7 -3M944 323l-2 12M944 323l9 15M964 298l1 10M964 298l6 9M964 298l11 25M907 267l1 -11M907 267l-18 -14M834 314l-10 -12M834 314l16 7M834 314l8 -17M725 260l-19 5M725 260l17 -14M725 260l-13 -11M575 384l-10 17M575 384l0 -21M575 384l-16 -5M706 265l-22 -6M706 265l6 -16M816 599l16 -8M816 599l-14 11M816 599l11 7M569 481l-3 19M569 481l-11 -20M569 481l-20 -3M581 597l-8 -4M581 597l-12 -13M653 284l7 -16M653 284l-14 -8M868 529l11 -13M868 529l12 10M885 407l-15 19M885 407l14 1M885 407l6 22M662 634l-12 0M662 634l17 8M662 634l4 8M755 261l-13 -15M755 261l21 -10M639 632l11 2M639 632l-5 2M639 632l12 8M846 578l-14 13M846 578l19 -5M846 578l4 14M573 554l-4 11M573 554l-11 -20M573 554l-18 -10M870 426l4 27M870 426l21 3M571 529l-9 5M571 529l-15 -19M913 252l2 -8M913 252l-5 4M913 252l-19 -18M967 301l3 6M967 301l9 19M650 634l1 6M650 634l16 8M634 634l1 3M634 634l17 6M634 634l17 9M958 311l4 21M958 311l12 16M951 320l11 12M951 320l2 18M626 633l9 4M626 633l23 10M824 302l-10 -17M824 302l18 -5M614 313l-18 5M614 313l1 -17M866 325l-16 -4M866 325l-3 -18M720 631l-14 6M720 631l19 -5M720 631l7 9M720 631l24 4M942 335l11 3M942 335l6 22M850 321l13 -14M850 321l-8 -24M832 591l-5 15M832 591l18 1M879 302l3 -18M879 302l-16 5M879 302l-16 -17M874 453l2 22M874 453l17 -24M874 453l21 4M920 369l-10 24M920 369l14 -10M920 369l6 26M920 369l21 14M706 637l-13 3M706 637l21 3M706 637l13 10M739 626l19 1M739 626l5 9M693 640l-14 2M693 640l5 7M693 640l26 7M789 274l25 11M789 274l-13 -23M789 274l20 -16M922 237l-6 -1M922 237l0 -1M922 237l-14 -14M575 581l-6 -16M575 581l-6 3M575 581l-21 -20M876 475l15 15M876 475l19 -18M965 308l5 19M965 308l10 15M577 599l-4 -6M577 599l-20 -19M916 236l-1 8M916 236l-16 -9M916 236l-8 -13M916 236l-28 -25M915 244l-21 -10M915 244l-15 -17M635 637l16 6M635 637l14 6M870 558l-5 15M870 558l10 -19M870 558l16 2M767 618l-9 9M767 618l16 7M573 593l-4 -9M573 593l-16 -13M573 593l-20 -22M566 500l-10 10M566 500l-17 -22M882 284l7 -12M882 284l-19 1M882 284l-16 -23M908 256l-19 -3M908 256l-14 -22M922 236l-14 -13M569 565l-14 -21M569 565l-15 -4M679 642l-13 0M679 642l19 5M679 642l8 7M802 610l25 -4M802 610l-19 15M802 610l11 13M910 393l-11 15M910 393l16 2M910 393l6 32M934 359l14 -2M934 359l7 24M684 259l-24 9M684 259l28 -10M684 259l8 -20M684 259l-29 -14M814 285l28 12M814 285l-5 -27M814 285l25 -15M565 401l-5 22M565 401l-6 -22M565 401l-18 3M651 640l15 2M651 640l0 3M651 640l19 8M970 307l5 16M970 307l6 13M666 642l4 6M666 642l21 7M758 627l-14 8M758 627l25 -2M758 627l8 9M562 445l-2 -22M562 445l-4 16M562 445l-20 -7M575 363l6 -23M575 363l-16 16M575 363l-16 -14M562 534l-6 -24M562 534l-7 10M562 534l-19 -18M865 573l-15 19M865 573l21 -13M865 573l13 12M889 272l0 -19M889 272l-23 -11M581 340l15 -22M581 340l-6 -16M581 340l-22 9M879 516l1 23M879 516l12 -26M879 516l22 -1M742 246l-30 3M742 246l34 5M742 246l25 -26M742 246l-21 -18M560 423l-13 -19M560 423l-18 15M596 318l19 -22M596 318l-21 6M596 318l-10 -21M863 307l-21 -10M863 307l0 -22M962 332l-9 6M962 332l8 -5M962 332l14 29M962 332l2 30M660 268l-21 8M660 268l-5 -23M651 643l-2 0M651 643l19 5M651 643l21 8M649 643l23 8M615 296l24 -20M615 296l-29 1M615 296l1 -25M639 276l16 -31M639 276l-23 -5M727 640l17 -5M727 640l-8 7M727 640l26 6M569 584l-15 -23M569 584l-16 -13M899 408l-8 21M899 408l17 17M558 461l-9 17M558 461l-16 -23M698 647l-11 2M698 647l21 0M698 647l15 7M953 338l-5 19M953 338l11 24M827 606l23 -14M827 606l-14 17M827 606l21 6M880 539l6 21M880 539l26 -1M880 539l21 -24M670 648l17 1M670 648l2 3M670 648l25 7M744 635l22 1M744 635l9 11M712 249l-20 -10M712 249l9 -21M970 327l5 -4M970 327l6 34M970 327l13 29M559 379l-12 25M559 379l0 -30M559 379l-19 -3M850 592l28 -7M850 592l-2 20M891 429l4 28M891 429l25 -4M776 251l33 7M776 251l-9 -31M776 251l23 -14M783 625l-17 11M783 625l30 -2M783 625l5 13M556 510l-7 -32M556 510l-13 6M556 510l-19 -19M687 649l8 6M687 649l26 5M555 544l-1 17M555 544l-20 -17M555 544l-12 -28M926 395l15 -12M926 395l-10 30M926 395l11 16M889 253l5 -19M889 253l-20 -24M889 253l-23 8M889 253l-30 -15M672 651l23 4M672 651l27 7M948 357l-7 26M948 357l10 26M948 357l16 5M557 580l-4 -9M557 580l-20 -27M891 490l4 -33M891 490l26 -26M891 490l24 1M891 490l10 25M894 234l6 -7M894 234l-14 -20M894 234l-25 -5M894 234l-32 -22M975 323l1 -3M975 323l10 27M975 323l8 33M719 647l34 -1M719 647l-6 7M719 647l28 8M842 297l21 -12M842 297l-3 -27M976 320l9 30M695 655l4 3M695 655l18 -1M695 655l36 5M886 560l-8 25M886 560l20 -22M886 560l19 1M554 561l-1 10M554 561l-20 -20M554 561l-19 -34M900 227l-12 -16M900 227l-20 -13M908 223l-20 -12M908 223l-22 -17M549 478l-7 -40M549 478l-24 -17M549 478l-12 13M766 636l-13 10M766 636l22 2M863 285l3 -24M863 285l-24 -15M895 457l21 -32M895 457l22 7M699 658l32 2M553 571l-19 -30M553 571l-16 -18M941 383l13 27M941 383l17 0M941 383l-4 28M809 258l23 -16M809 258l-10 -21M809 258l30 12M878 585l5 18M878 585l24 -6M878 585l27 -24M878 585l-30 27M813 623l11 12M813 623l35 -11M813 623l-25 15M547 404l-5 34M547 404l-19 0M547 404l-7 -28M575 324l-16 25M575 324l11 -27M575 324l-17 -4M753 646l33 4M753 646l-6 9M753 646l35 -8M692 239l-1 -18M692 239l-37 6M692 239l29 -11M713 654l34 1M713 654l18 6M559 349l-19 27M559 349l-21 -3M559 349l-1 -29M542 438l-17 23M542 438l-14 -34M542 438l-21 -10M916 425l25 17M916 425l1 39M916 425l21 -14M939 553l19 -28M939 553l12 -6M939 553l4 -26M939 553l-11 22M939 553l-16 6M939 553l-25 27M524 493l1 -32M524 493l11 34M524 493l19 23M524 493l-9 8M524 493l-14 -30M524 493l13 -2M883 603l-28 20M883 603l19 -24M883 603l18 -3M883 603l-10 17M883 603l-35 9M883 603l31 -23M888 211l-8 3M888 211l-27 -19M888 211l-34 -16M888 211l-2 -5M754 160l10 3M754 160l-18 3M754 160l32 4M754 160l-41 2M754 160l42 7M927 512l22 -20M927 512l-21 26M927 512l16 15M927 512l-12 -21M927 512l8 -34M927 512l-26 3M927 512l-3 29M530 280l20 -24M530 280l-6 7M530 280l0 12M530 280l10 -16M530 280l-15 28M557 262l-7 -6M557 262l-27 30M557 262l14 3M557 262l-12 29M557 262l20 -29M557 262l22 -17M949 492l16 -24M949 492l-6 35M949 492l3 -28M949 492l14 6M949 492l-14 -14M662 175l-22 12M662 175l35 -8M662 175l15 3M662 175l-17 5M662 175l-28 11M662 175l18 -7M534 541l-15 -19M534 541l1 -14M534 541l-19 -40M534 541l3 12M773 180l38 1M773 180l-38 5M773 180l28 9M773 180l1 -12M773 180l-34 -8M773 180l-10 15M773 180l11 11M691 221l33 -17M691 221l-36 24M691 221l1 -18M691 221l30 7M691 221l-26 -7M764 163l-28 0M764 163l10 5M764 163l32 4M985 426l6 -12M985 426l-12 -25M985 426l-10 14M985 426l-7 39M985 426l3 18M985 426l1 -35M958 525l-7 22M958 525l-15 2M958 525l5 -27M958 525l15 -28M958 525l8 -5M985 473l-1 -3M985 473l-8 26M985 473l6 -33M799 202l9 20M799 202l-32 18M799 202l39 16M799 202l30 -5M799 202l2 -13M799 202l-36 -7M799 202l-15 -11M855 623l-31 12M855 623l18 -3M855 623l-7 -11M855 623l-8 10M524 322l-14 39M524 322l-14 9M524 322l6 -30M524 322l16 -4M524 322l21 -31M524 322l1 21M508 322l16 -35M508 322l-5 17M508 322l-12 43M508 322l7 -14M550 256l-20 36M550 256l20 -25M550 256l7 -14M550 256l-10 8M550 256l27 -23M837 179l27 13M837 179l-8 0M837 179l24 13M837 179l-41 -12M808 222l-41 -2M808 222l30 -4M808 222l24 20M808 222l-9 15M510 361l0 -30M510 361l13 11M510 361l0 41M510 361l-10 31M510 361l-12 8M510 361l15 -18M736 163l-24 6M736 163l-39 4M736 163l-23 -1M736 163l38 5M736 163l3 9M622 215l23 -20M622 215l26 -8M622 215l-22 25M622 215l-11 -8M622 215l-25 12M622 215l12 11M525 461l-14 -25M525 461l-4 -33M525 461l-15 2M525 461l12 30M985 350l5 31M985 350l5 24M985 350l-2 6M712 169l-15 -2M712 169l-4 10M712 169l-35 9M712 169l27 3M888 615l13 -15M888 615l-32 19M888 615l-15 5M888 615l26 -22M492 423l2 -16M492 423l4 32M492 423l0 -29M492 423l3 13M524 287l16 -23M524 287l-9 21M902 579l3 -18M902 579l21 -20M902 579l12 1M510 331l20 -39M510 331l-7 8M510 331l-12 38M510 331l5 -23M906 538l-1 23M906 538l-5 -23M906 538l18 3M530 292l15 -1M530 292l-15 16M570 231l-13 11M570 231l23 -18M570 231l13 -14M570 231l7 2M824 635l-38 15M824 635l-4 12M824 635l24 -23M824 635l-36 3M824 635l23 -2M523 531l-4 -9M523 531l14 22M523 531l-13 -26M645 195l-5 -8M645 195l3 12M645 195l32 -2M645 195l32 -17M645 195l-34 12M901 600l27 -25M901 600l-28 20M901 600l13 -7M901 600l13 -20M767 220l-43 -16M767 220l-46 8M767 220l32 17M767 220l-4 -25M724 204l11 -19M724 204l-32 -1M724 204l-3 24M724 204l-18 -12M724 204l39 -9M991 414l-1 -33M991 414l2 -14M991 414l0 26M991 414l-3 30M991 414l-5 -23M523 372l-13 30M523 372l5 32M523 372l17 4M523 372l15 -26M523 372l2 -29M864 192l-3 0M864 192l22 14M951 547l11 -16M951 547l-23 28M951 547l-14 22M951 547l15 -27M571 265l-8 28M571 265l29 -25M571 265l-26 26M571 265l20 3M571 265l8 -20M505 488l14 34M505 488l-4 -26M505 488l-9 -33M505 488l10 13M505 488l5 17M811 181l18 -2M811 181l-8 -9M811 181l18 16M811 181l-10 8M811 181l-37 -13M811 181l43 14M640 187l37 -9M640 187l-29 20M640 187l-6 -1M640 187l-24 10M519 522l-4 -21M519 522l18 31M519 522l-9 -17M962 531l15 -32M962 531l-25 38M962 531l4 -11M880 214l-18 -2M880 214l-26 -19M965 468l10 -28M965 468l13 -3M965 468l-13 -4M965 468l-2 30M965 468l-3 -30M786 650l34 -3M786 650l-9 8M786 650l-39 5M786 650l2 -12M943 527l20 -29M943 527l-20 32M943 527l-19 14M735 185l-27 -6M735 185l4 -13M735 185l-29 7M735 185l28 10M557 242l-17 22M557 242l26 -25M757 661l20 -3M757 661l-26 -1M990 381l3 19M990 381l0 -7M990 381l-7 -25M990 381l-4 10M838 218l-6 24M838 218l31 11M838 218l-9 -21M838 218l24 -6M838 218l21 20M563 293l-23 25M563 293l-18 -2M563 293l28 -25M563 293l23 4M563 293l-5 27M655 245l-36 4M655 245l10 -31M655 245l-21 -19M655 245l-39 26M593 213l18 -6M593 213l19 -16M593 213l-10 4M593 213l23 -16M593 213l-16 20M511 436l-1 -34M511 436l-11 -8M511 436l10 -8M511 436l-1 27M510 402l18 2M510 402l-10 26M510 402l11 26M510 402l-10 -10M503 339l-7 26M503 339l-5 30M503 339l12 -31M786 164l10 3M494 407l6 21M494 407l-2 -13M494 407l6 -15M494 407l4 -38M494 407l1 29M820 647l-43 11M820 647l14 -3M820 647l36 -13M820 647l-14 6M820 647l27 -14M535 527l8 -11M535 527l-20 -26M648 207l29 -14M648 207l17 7M648 207l-14 19M697 167l16 -5M697 167l-20 11M697 167l-17 1M829 179l-26 -7M829 179l32 13M829 179l-33 -12M829 179l25 16M832 242l-33 -5M832 242l34 19M832 242l27 -4M832 242l7 28M905 561l18 -2M905 561l19 -20M619 249l-19 -9M619 249l-28 19M619 249l15 -23M619 249l-3 22M984 470l-6 -5M984 470l-7 29M984 470l7 -30M984 470l4 -26M984 470l-11 27M803 172l-29 -4M803 172l-7 -5M973 401l2 39M973 401l-19 9M973 401l-15 -18M973 401l3 -40M973 401l13 -10M973 401l-11 37M973 401l-9 -39M528 404l-7 24M528 404l12 -28M677 193l31 -14M677 193l0 -15M677 193l15 10M677 193l29 -1M677 193l-12 21M869 229l-7 -17M869 229l-10 9M540 318l5 -27M540 318l-2 28M540 318l-15 25M540 318l18 2M543 516l-6 -25M975 440l3 25M975 440l-13 -2M941 442l13 -32M941 442l11 22M941 442l-24 22M941 442l-6 36M941 442l21 -4M941 442l-4 -31M501 462l-5 -7M501 462l-1 -34M501 462l14 39M501 462l9 1M501 462l-6 -26M708 179l-31 -1M708 179l31 -7M708 179l-2 13M777 658l-30 -3M777 658l-46 2M777 658l29 -5M834 644l22 -10M834 644l-28 9M928 575l9 -6M928 575l-14 18M928 575l-14 5M713 162l-33 6M600 240l-3 -13M600 240l-9 28M600 240l34 -14M600 240l-21 5M611 207l-14 20M611 207l5 -10M611 207l-34 26M954 410l4 -27M954 410l8 28M954 410l-17 1M496 455l-1 -19M829 197l33 15M829 197l-28 -8M829 197l25 -2M958 383l6 -21M993 400l-2 40M993 400l-3 -26M692 203l14 -11M692 203l-27 11M645 180l-33 17M645 180l-11 6M645 180l35 -12M856 634l17 -14M856 634l-9 -1M978 465l-15 33M978 465l10 -21M978 465l-5 32M977 499l-4 -2M977 499l-11 21M500 428l0 -36M500 428l10 35M500 428l-5 8M952 464l-17 14M952 464l10 -26M612 197l22 -11M612 197l-29 20M612 197l4 0M937 569l-23 24M492 394l4 -29M492 394l6 -25M976 361l7 -5M976 361l10 30M976 361l-12 1M862 212l-8 -17M597 227l-20 6M597 227l-18 18M917 464l-2 27M917 464l18 14M991 440l-3 4M634 186l-18 11M591 268l-5 29M591 268l25 3M801 189l-17 2M915 491l20 -13M915 491l-14 24M496 365l2 4M500 392l-2 -23M774 168l22 -1M774 168l-35 4M515 501l-5 -38M861 192l-7 3M861 192l25 14M983 356l3 35M963 498l10 -1M747 655l-16 5M873 620l-26 13M540 376l-2 -30M923 559l1 -18M923 559l-9 21M973 497l-7 23M866 261l-7 -23M866 261l-27 9M538 346l-13 -3M538 346l20 -26M763 195l21 -4M586 297l-28 23M586 297l30 -26M665 214l-31 12M577 233l2 12"/>
<path fill="none" stroke="#000" stroke-width="1" shape-rendering="crispEdges" clip-path="url(#cF)" d="M562.8 213.3l393.9 69.5M561.9 217.9l393.9 69.5M561.1 222.6l393.9 69.5M560.3 227.3l393.9 69.5M559.5 232.0l393.9 69.5M558.6 236.7l393.9 69.5M557.8 241.4l393.9 69.5M557.0 246.1l393.9 69.5M556.2 250.8l393.9 69.5M555.3 255.5l393.9 69.5M554.5 260.2l393.9 69.5M553.7 264.9l393.9 69.5M552.9 269.5l393.9 69.5M552.0 274.2l393.9 69.5M551.2 278.9l393.9 69.5M550.4 283.6l393.9 69.5M549.5 288.3l393.9 69.5M548.7 293.0l393.9 69.5M547.9 297.7l393.9 69.5M547.1 302.4l393.9 69.5M546.2 307.1l393.9 69.5M545.4 311.8l393.9 69.5M544.6 316.5l393.9 69.5M543.8 321.1l393.9 69.5M542.9 325.8l393.9 69.5M542.1 330.5l393.9 69.5M541.3 335.2l393.9 69.5M540.4 339.9l393.9 69.5M539.6 344.6l393.9 69.5M538.8 349.3l393.9 69.5M538.0 354.0l393.9 69.5M537.1 358.7l393.9 69.5M536.3 363.4l393.9 69.5M535.5 368.1l393.9 69.5M534.7 372.7l393.9 69.5M533.8 377.4l393.9 69.5M533.0 382.1l393.9 69.5M532.2 386.8l393.9 69.5M531.3 391.5l393.9 69.5M530.5 396.2l393.9 69.5M529.7 400.9l393.9 69.5M528.9 405.6l393.9 69.5M528.0 410.3l393.9 69.5M527.2 415.0l393.9 69.5M526.4 419.7l393.9 69.5M525.6 424.3l393.9 69.5M524.7 429.0l393.9 69.5M523.9 433.7l393.9 69.5M523.1 438.4l393.9 69.5M522.2 443.1l393.9 69.5M521.4 447.8l393.9 69.5M520.6 452.5l393.9 69.5M519.8 457.2l393.9 69.5M518.9 461.9l393.9 69.5M518.1 466.6l393.9 69.5M517.3 471.3l393.9 69.5M516.5 475.9l393.9 69.5M515.6 480.6l393.9 69.5M514.8 485.3l393.9 69.5M514.0 490.0l393.9 69.5M513.2 494.7l393.9 69.5M512.3 499.4l393.9 69.5M511.5 504.1l393.9 69.5M510.7 508.8l393.9 69.5M509.8 513.5l393.9 69.5M509.0 518.2l393.9 69.5M508.2 522.8l393.9 69.5M507.4 527.5l393.9 69.5M506.5 532.2l393.9 69.5M505.7 536.9l393.9 69.5M504.9 541.6l393.9 69.5M504.1 546.3l393.9 69.5M503.2 551.0l393.9 69.5M502.4 555.7l393.9 69.5M501.6 560.4l393.9 69.5M500.7 565.1l393.9 69.5M499.9 569.8l393.9 69.5M499.1 574.4l393.9 69.5M498.3 579.1l393.9 69.5M497.4 583.8l393.9 69.5M496.6 588.5l393.9 69.5M495.8 593.2l393.9 69.5M495.0 597.9l393.9 69.5M494.1 602.6l393.9 69.5M493.3 607.3l393.9 69.5M844.6 188.6l136.8 375.9M840.1 190.3l136.8 375.9M835.6 191.9l136.8 375.9M831.2 193.5l136.8 375.9M826.7 195.2l136.8 375.9M822.2 196.8l136.8 375.9M817.7 198.4l136.8 375.9M813.3 200.0l136.8 375.9M808.8 201.7l136.8 375.9M804.3 203.3l136.8 375.9M799.8 204.9l136.8 375.9M795.3 206.6l136.8 375.9M790.9 208.2l136.8 375.9M786.4 209.8l136.8 375.9M781.9 211.4l136.8 375.9M777.4 213.1l136.8 375.9M773.0 214.7l136.8 375.9M768.5 216.3l136.8 375.9M764.0 218.0l136.8 375.9M759.5 219.6l136.8 375.9M755.1 221.2l136.8 375.9M750.6 222.9l136.8 375.9M746.1 224.5l136.8 375.9M741.6 226.1l136.8 375.9M737.2 227.7l136.8 375.9M732.7 229.4l136.8 375.9M728.2 231.0l136.8 375.9M723.7 232.6l136.8 375.9M719.3 234.3l136.8 375.9M714.8 235.9l136.8 375.9M710.3 237.5l136.8 375.9M705.8 239.1l136.8 375.9M701.4 240.8l136.8 375.9M696.9 242.4l136.8 375.9M692.4 244.0l136.8 375.9M687.9 245.7l136.8 375.9M683.5 247.3l136.8 375.9M679.0 248.9l136.8 375.9M674.5 250.5l136.8 375.9M670.0 252.2l136.8 375.9M665.5 253.8l136.8 375.9M661.1 255.4l136.8 375.9M656.6 257.1l136.8 375.9M652.1 258.7l136.8 375.9M647.6 260.3l136.8 375.9M643.2 261.9l136.8 375.9M638.7 263.6l136.8 375.9M634.2 265.2l136.8 375.9M629.7 266.8l136.8 375.9M625.3 268.5l136.8 375.9M620.8 270.1l136.8 375.9M616.3 271.7l136.8 375.9M611.8 273.4l136.8 375.9M607.4 275.0l136.8 375.9M602.9 276.6l136.8 375.9M598.4 278.2l136.8 375.9M593.9 279.9l136.8 375.9M589.5 281.5l136.8 375.9M585.0 283.1l136.8 375.9M580.5 284.8l136.8 375.9M576.0 286.4l136.8 375.9M571.6 288.0l136.8 375.9M567.1 289.6l136.8 375.9M562.6 291.3l136.8 375.9M558.1 292.9l136.8 375.9M553.7 294.5l136.8 375.9M549.2 296.2l136.8 375.9M544.7 297.8l136.8 375.9M540.2 299.4l136.8 375.9M535.7 301.0l136.8 375.9M531.3 302.7l136.8 375.9M526.8 304.3l136.8 375.9M522.3 305.9l136.8 375.9M517.8 307.6l136.8 375.9M513.4 309.2l136.8 375.9M508.9 310.8l136.8 375.9M504.4 312.5l136.8 375.9M499.9 314.1l136.8 375.9M495.5 315.7l136.8 375.9M491.0 317.3l136.8 375.9M486.5 319.0l136.8 375.9M482.0 320.6l136.8 375.9M477.6 322.2l136.8 375.9M473.1 323.9l136.8 375.9M468.6 325.5l136.8 375.9M1006.8 420.4l-257.1 306.4M1003.2 417.3l-257.1 306.4M999.5 414.3l-257.1 306.4M995.9 411.2l-257.1 306.4M992.2 408.1l-257.1 306.4M988.6 405.1l-257.1 306.4M984.9 402.0l-257.1 306.4M981.3 399.0l-257.1 306.4M977.6 395.9l-257.1 306.4M974.0 392.8l-257.1 306.4M970.3 389.8l-257.1 306.4M966.7 386.7l-257.1 306.4M963.0 383.6l-257.1 306.4M959.4 380.6l-257.1 306.4M955.7 377.5l-257.1 306.4M952.1 374.5l-257.1 306.4M948.4 371.4l-257.1 306.4M944.8 368.3l-257.1 306.4M941.1 365.3l-257.1 306.4M937.5 362.2l-257.1 306.4M933.8 359.1l-257.1 306.4M930.2 356.1l-257.1 306.4M926.5 353.0l-257.1 306.4M922.9 350.0l-257.1 306.4M919.2 346.9l-257.1 306.4M915.6 343.8l-257.1 306.4M911.9 340.8l-257.1 306.4M908.3 337.7l-257.1 306.4M904.6 334.7l-257.1 306.4M901.0 331.6l-257.1 306.4M897.3 328.5l-257.1 306.4M893.7 325.5l-257.1 306.4M890.0 322.4l-257.1 306.4M886.4 319.3l-257.1 306.4M882.7 316.3l-257.1 306.4M879.1 313.2l-257.1 306.4M875.5 310.2l-257.1 306.4M871.8 307.1l-257.1 306.4M868.2 304.0l-257.1 306.4M864.5 301.0l-257.1 306.4M860.9 297.9l-257.1 306.4M857.2 294.9l-257.1 306.4M853.6 291.8l-257.1 306.4M849.9 288.7l-257.1 306.4M846.3 285.7l-257.1 306.4M842.6 282.6l-257.1 306.4M839.0 279.5l-257.1 306.4M835.3 276.5l-257.1 306.4M831.7 273.4l-257.1 306.4M828.0 270.4l-257.1 306.4M824.4 267.3l-257.1 306.4M820.7 264.2l-257.1 306.4M817.1 261.2l-257.1 306.4M813.4 258.1l-257.1 306.4M809.8 255.1l-257.1 306.4M806.1 252.0l-257.1 306.4M802.5 248.9l-257.1 306.4M798.8 245.9l-257.1 306.4M795.2 242.8l-257.1 306.4M791.5 239.7l-257.1 306.4M787.9 236.7l-257.1 306.4M784.2 233.6l-257.1 306.4M780.6 230.6l-257.1 306.4M776.9 227.5l-257.1 306.4M773.3 224.4l-257.1 306.4M769.6 221.4l-257.1 306.4M766.0 218.3l-257.1 306.4M762.3 215.2l-257.1 306.4M758.7 212.2l-257.1 306.4M755.0 209.1l-257.1 306.4M751.4 206.1l-257.1 306.4M747.7 203.0l-257.1 306.4M744.1 199.9l-257.1 306.4M740.4 196.9l-257.1 306.4M736.8 193.8l-257.1 306.4M733.1 190.8l-257.1 306.4M729.5 187.7l-257.1 306.4M725.9 184.6l-257.1 306.4M722.2 181.6l-257.1 306.4M718.6 178.5l-257.1 306.4M714.9 175.4l-257.1 306.4M711.3 172.4l-257.1 306.4M707.6 169.3l-257.1 306.4M704.0 166.3l-257.1 306.4M700.3 163.2l-257.1 306.4"/>
<polygon points="592.0,471.0 640.0,452.0 683.0,440.0 720.0,425.0 751.0,412.0 765.0,410.0 798.0,458.0 816.0,491.0 841.0,542.0 846.0,549.0 803.0,582.0 740.0,600.0 690.0,613.0 640.0,610.0 604.0,603.0 596.0,560.0 592.0,520.0" fill="#000" fill-opacity="1.0"/>
<path fill="none" stroke="#e07000" stroke-width="1.5" stroke-dasharray="1 1.6" shape-rendering="crispEdges" clip-path="url(#cD)" mask="url(#mR)" d="M793.0 549.0L793.0 550.8L792.8 552.6L792.6 554.3L792.3 556.1L791.8 557.8L791.3 559.5L790.7 561.2L790.1 562.8L789.3 564.4L788.4 566.0L787.5 567.5L786.5 569.0L785.4 570.4L784.3 571.8L783.0 573.0L781.8 574.3L780.4 575.4L779.0 576.5L777.5 577.5L776.0 578.4L774.4 579.3L772.8 580.1L771.2 580.7L769.5 581.3L767.8 581.8L766.1 582.3L764.3 582.6L762.6 582.8L760.8 583.0L759.0 583.0L757.2 583.0L755.4 582.8L753.7 582.6L751.9 582.3L750.2 581.8L748.5 581.3L746.8 580.7L745.2 580.1L743.6 579.3L742.0 578.4L740.5 577.5L739.0 576.5L737.6 575.4L736.2 574.3L735.0 573.0L733.7 571.8L732.6 570.4L731.5 569.0L730.5 567.5L729.6 566.0L728.7 564.4L727.9 562.8L727.3 561.2L726.7 559.5L726.2 557.8L725.7 556.1L725.4 554.3L725.2 552.6L725.0 550.8L725.0 549.0L725.0 547.2L725.2 545.4L725.4 543.7L725.7 541.9L726.2 540.2L726.7 538.5L727.3 536.8L727.9 535.2L728.7 533.6L729.6 532.0L730.5 530.5L731.5 529.0L732.6 527.6L733.7 526.2L735.0 525.0L736.2 523.7L737.6 522.6L739.0 521.5L740.5 520.5L742.0 519.6L743.6 518.7L745.2 517.9L746.8 517.3L748.5 516.7L750.2 516.2L751.9 515.7L753.7 515.4L755.4 515.2L757.2 515.0L759.0 515.0L760.8 515.0L762.6 515.2L764.3 515.4L766.1 515.7L767.8 516.2L769.5 516.7L771.2 517.3L772.8 517.9L774.4 518.7L776.0 519.6L777.5 520.5L779.0 521.5L780.4 522.6L781.8 523.7L783.0 525.0L784.3 526.2L785.4 527.6L786.5 529.0L787.5 530.5L788.4 532.0L789.3 533.6L790.1 535.2L790.7 536.8L791.3 538.5L791.8 540.2L792.3 541.9L792.6 543.7L792.8 545.4L793.0 547.2zM799.2 549.0L799.1 551.1L798.9 553.2L798.6 555.3L798.2 557.3L797.7 559.4L797.0 561.4L796.3 563.3L795.5 565.3L794.6 567.1L793.6 569.0L792.5 570.7L791.3 572.5L790.0 574.1L788.6 575.7L787.2 577.2L785.7 578.6L784.1 580.0L782.4 581.2L780.7 582.4L778.9 583.5L777.1 584.5L775.2 585.4L773.3 586.2L771.3 586.9L769.3 587.5L767.3 588.0L765.2 588.3L763.2 588.6L761.1 588.8L759.0 588.8L756.9 588.8L754.8 588.6L752.8 588.4L750.7 588.0L748.7 587.5L746.7 587.0L744.7 586.3L742.8 585.5L740.9 584.6L739.0 583.6L737.2 582.6L735.5 581.4L733.8 580.2L732.1 578.8L730.6 577.4L729.1 575.9L727.7 574.4L726.3 572.7L725.1 571.0L723.9 569.3L722.8 567.4L721.8 565.6L720.9 563.6L720.2 561.6L719.5 559.6L719.0 557.5L718.7 555.4L718.4 553.3L718.2 551.1L718.1 549.0L718.2 546.9L718.3 544.7L718.6 542.6L719.0 540.5L719.5 538.4L720.0 536.3L720.7 534.3L721.6 532.3L722.5 530.4L723.6 528.5L724.7 526.7L726.0 525.0L727.3 523.3L728.7 521.7L730.2 520.2L731.8 518.8L733.4 517.4L735.1 516.1L736.9 515.0L738.7 513.9L740.6 512.8L742.5 511.9L744.5 511.1L746.5 510.4L748.5 509.8L750.6 509.3L752.6 508.9L754.8 508.6L756.9 508.4L759.0 508.4L761.1 508.4L763.2 508.7L765.3 509.0L767.4 509.4L769.5 510.0L771.5 510.6L773.5 511.4L775.4 512.2L777.3 513.1L779.1 514.2L780.9 515.3L782.6 516.5L784.3 517.8L785.9 519.2L787.4 520.6L788.8 522.1L790.2 523.7L791.5 525.4L792.6 527.2L793.7 528.9L794.7 530.8L795.6 532.7L796.5 534.6L797.2 536.6L797.8 538.6L798.3 540.7L798.7 542.7L798.9 544.8L799.1 546.9zM805.0 549.0L804.9 551.4L804.6 553.8L804.2 556.2L803.7 558.5L803.1 560.8L802.4 563.1L801.5 565.3L800.6 567.5L799.5 569.6L798.3 571.7L797.1 573.7L795.7 575.7L794.2 577.5L792.7 579.3L791.0 581.0L789.3 582.6L787.5 584.1L785.6 585.6L783.6 586.9L781.6 588.1L779.5 589.3L777.4 590.3L775.2 591.2L773.0 591.9L770.7 592.6L768.4 593.2L766.1 593.6L763.7 593.9L761.4 594.1L759.0 594.2L756.6 594.2L754.3 594.0L751.9 593.7L749.6 593.3L747.3 592.8L745.0 592.1L742.7 591.4L740.5 590.5L738.3 589.5L736.2 588.5L734.1 587.3L732.1 586.0L730.2 584.6L728.2 583.2L726.4 581.6L724.6 579.9L723.0 578.2L721.4 576.4L719.8 574.4L718.4 572.4L717.0 570.4L715.7 568.3L714.6 566.0L713.7 563.7L712.9 561.4L712.3 558.9L711.8 556.5L711.5 554.0L711.3 551.5L711.2 549.0L711.3 546.5L711.4 544.0L711.7 541.5L712.1 539.0L712.7 536.6L713.3 534.2L714.1 531.8L715.1 529.4L716.2 527.2L717.5 525.0L718.9 523.0L720.4 521.0L722.1 519.1L723.7 517.3L725.5 515.5L727.4 513.9L729.3 512.3L731.3 510.9L733.4 509.5L735.5 508.2L737.6 507.1L739.9 506.0L742.1 505.1L744.5 504.3L746.8 503.5L749.2 503.0L751.6 502.5L754.1 502.1L756.5 501.9L759.0 501.8L761.5 501.9L763.9 502.3L766.3 502.7L768.7 503.3L771.1 504.0L773.4 504.8L775.6 505.7L777.8 506.7L780.0 507.8L782.1 509.0L784.1 510.3L786.1 511.7L788.0 513.2L789.8 514.8L791.5 516.5L793.1 518.3L794.7 520.1L796.1 522.0L797.5 524.0L798.7 526.1L799.9 528.2L800.9 530.3L801.8 532.6L802.6 534.8L803.3 537.1L803.9 539.5L804.4 541.8L804.7 544.2L805.0 546.6zM810.6 549.0L810.4 551.7L810.0 554.4L809.5 557.0L808.9 559.6L808.2 562.2L807.3 564.7L806.3 567.2L805.2 569.6L804.0 571.9L802.7 574.2L801.3 576.5L799.7 578.6L798.1 580.7L796.3 582.6L794.5 584.5L792.6 586.3L790.5 588.0L788.5 589.5L786.3 591.0L784.0 592.4L781.7 593.6L779.4 594.7L776.9 595.7L774.5 596.6L771.9 597.3L769.4 597.9L766.8 598.4L764.2 598.8L761.6 599.0L759.0 599.1L756.4 599.0L753.8 598.9L751.1 598.6L748.6 598.1L746.0 597.6L743.4 596.9L740.9 596.1L738.5 595.2L736.0 594.1L733.6 592.9L731.3 591.7L729.0 590.3L726.8 588.8L724.6 587.2L722.5 585.5L720.4 583.7L718.5 581.8L716.6 579.8L714.8 577.7L713.0 575.5L711.4 573.3L709.8 570.9L708.3 568.5L707.2 565.8L706.3 563.1L705.6 560.4L705.1 557.5L704.7 554.7L704.4 551.9L704.3 549.0L704.4 546.1L704.5 543.3L704.8 540.4L705.3 537.6L705.9 534.8L706.6 532.0L707.5 529.2L708.6 526.5L709.9 524.0L711.4 521.5L713.1 519.2L714.9 517.0L716.8 514.9L718.8 512.8L720.9 510.9L723.0 509.1L725.3 507.3L727.5 505.7L729.9 504.2L732.3 502.8L734.8 501.5L737.3 500.3L739.9 499.2L742.5 498.3L745.2 497.4L747.9 496.7L750.6 496.2L753.4 495.7L756.2 495.5L759.0 495.3L761.8 495.6L764.6 496.0L767.3 496.6L770.0 497.4L772.6 498.2L775.2 499.2L777.7 500.2L780.2 501.4L782.6 502.7L784.9 504.1L787.2 505.6L789.4 507.2L791.5 508.9L793.5 510.7L795.4 512.6L797.2 514.6L798.9 516.7L800.5 518.8L802.0 521.1L803.4 523.4L804.7 525.7L805.9 528.1L806.9 530.6L807.8 533.1L808.6 535.7L809.3 538.3L809.8 541.0L810.2 543.6L810.5 546.3zM815.8 549.0L815.5 552.0L815.0 554.9L814.4 557.8L813.7 560.6L812.9 563.4L811.9 566.2L810.8 568.9L809.5 571.5L808.2 574.1L806.7 576.5L805.1 578.9L803.4 581.3L801.6 583.5L799.7 585.6L797.7 587.7L795.5 589.6L793.3 591.4L791.0 593.1L788.7 594.7L786.2 596.2L783.7 597.5L781.1 598.7L778.5 599.8L775.8 600.7L773.1 601.5L770.3 602.2L767.5 602.7L764.7 603.1L761.9 603.4L759.0 603.5L756.1 603.5L753.3 603.3L750.4 603.0L747.6 602.5L744.8 601.9L742.0 601.2L739.3 600.4L736.6 599.4L733.9 598.3L731.2 597.1L728.7 595.7L726.1 594.3L723.6 592.7L721.2 591.0L718.8 589.2L716.4 587.3L714.2 585.3L712.0 583.2L709.9 580.9L707.8 578.5L705.8 576.1L703.9 573.5L702.1 570.8L700.8 567.9L699.7 564.9L698.9 561.8L698.3 558.6L697.9 555.4L697.6 552.2L697.5 549.0L697.5 545.8L697.7 542.6L698.0 539.3L698.5 536.1L699.1 532.9L699.8 529.8L700.8 526.7L702.1 523.6L703.6 520.8L705.4 518.0L707.4 515.5L709.5 513.0L711.7 510.7L714.0 508.5L716.3 506.3L718.8 504.3L721.3 502.4L723.9 500.7L726.5 499.0L729.2 497.4L732.0 496.0L734.8 494.7L737.7 493.5L740.6 492.4L743.6 491.5L746.6 490.7L749.7 490.0L752.7 489.5L755.9 489.2L759.0 489.0L762.1 489.3L765.2 489.9L768.2 490.7L771.2 491.6L774.1 492.7L776.9 493.8L779.7 495.1L782.4 496.4L785.0 497.9L787.6 499.5L790.1 501.2L792.4 503.0L794.7 504.9L796.9 506.9L799.0 509.0L801.0 511.2L802.9 513.5L804.6 515.8L806.3 518.3L807.8 520.8L809.2 523.4L810.5 526.1L811.6 528.8L812.6 531.6L813.5 534.4L814.3 537.3L814.9 540.2L815.3 543.1L815.7 546.0zM820.6 549.0L820.2 552.2L819.7 555.4L818.9 558.5L818.1 561.6L817.1 564.6L816.0 567.5L814.8 570.4L813.4 573.2L811.9 576.0L810.3 578.6L808.6 581.2L806.7 583.7L804.7 586.0L802.7 588.3L800.5 590.5L798.2 592.5L795.8 594.5L793.4 596.3L790.8 598.0L788.2 599.5L785.5 601.0L782.7 602.3L779.9 603.4L777.0 604.4L774.1 605.3L771.1 606.0L768.1 606.6L765.1 607.0L762.1 607.3L759.0 607.4L755.9 607.4L752.9 607.2L749.8 606.9L746.8 606.5L743.8 605.9L740.8 605.1L737.8 604.2L734.9 603.2L732.0 602.1L729.1 600.8L726.3 599.4L723.5 597.9L720.7 596.3L718.0 594.6L715.3 592.7L712.7 590.7L710.1 588.6L707.6 586.3L705.2 583.9L702.8 581.4L700.5 578.8L698.1 576.1L696.0 573.2L694.4 570.0L693.2 566.6L692.3 563.2L691.7 559.7L691.2 556.1L690.9 552.6L690.7 549.0L690.7 545.4L690.9 541.8L691.2 538.3L691.7 534.7L692.3 531.1L693.1 527.6L694.2 524.1L695.6 520.8L697.3 517.6L699.4 514.6L701.7 511.8L704.1 509.1L706.6 506.6L709.2 504.2L711.9 501.9L714.6 499.7L717.4 497.7L720.3 495.8L723.2 493.9L726.2 492.2L729.3 490.7L732.4 489.2L735.6 487.9L738.8 486.8L742.0 485.7L745.4 484.8L748.7 484.1L752.1 483.5L755.5 483.1L759.0 482.9L762.4 483.3L765.8 484.1L769.1 485.0L772.4 486.2L775.5 487.4L778.6 488.7L781.6 490.1L784.5 491.7L787.4 493.3L790.1 495.1L792.8 497.0L795.3 499.0L797.8 501.1L800.1 503.3L802.4 505.6L804.5 508.0L806.5 510.5L808.4 513.1L810.2 515.7L811.9 518.5L813.4 521.3L814.7 524.2L816.0 527.1L817.1 530.1L818.1 533.2L818.9 536.3L819.6 539.4L820.1 542.6L820.5 545.8zM825.1 549.0L824.6 552.4L823.9 555.8L823.1 559.1L822.1 562.4L821.0 565.6L819.8 568.7L818.4 571.8L816.9 574.8L815.3 577.7L813.5 580.5L811.6 583.2L809.6 585.8L807.5 588.3L805.3 590.7L803.0 593.0L800.5 595.1L798.0 597.2L795.4 599.1L792.7 600.8L789.9 602.5L787.0 604.0L784.1 605.4L781.1 606.6L778.0 607.6L775.0 608.5L771.8 609.3L768.6 609.9L765.5 610.4L762.2 610.7L759.0 610.8L755.8 610.8L752.5 610.7L749.3 610.4L746.1 609.9L742.8 609.3L739.6 608.6L736.5 607.7L733.3 606.6L730.2 605.5L727.1 604.2L724.1 602.8L721.0 601.2L718.0 599.6L715.0 597.8L712.1 595.9L709.2 593.9L706.3 591.7L703.5 589.4L700.7 586.9L698.0 584.2L695.2 581.5L692.5 578.6L690.0 575.5L688.1 572.0L686.8 568.3L685.8 564.6L685.1 560.7L684.6 556.8L684.2 552.9L684.0 549.0L684.0 545.1L684.1 541.1L684.4 537.2L684.9 533.3L685.6 529.3L686.4 525.4L687.6 521.6L689.1 517.9L691.0 514.4L693.4 511.1L696.1 508.1L698.8 505.3L701.7 502.6L704.6 500.0L707.5 497.5L710.6 495.2L713.7 493.1L716.9 491.0L720.1 489.1L723.3 487.2L726.7 485.5L730.0 484.0L733.5 482.6L737.0 481.3L740.5 480.1L744.2 479.1L747.8 478.3L751.5 477.6L755.2 477.1L759.0 476.9L762.8 477.4L766.4 478.4L770.0 479.6L773.5 480.9L776.9 482.4L780.2 483.9L783.4 485.5L786.5 487.3L789.5 489.1L792.4 491.1L795.3 493.1L798.0 495.3L800.6 497.6L803.1 500.0L805.5 502.5L807.8 505.1L809.9 507.8L811.9 510.5L813.8 513.4L815.6 516.3L817.2 519.4L818.7 522.4L820.0 525.6L821.2 528.8L822.2 532.1L823.1 535.4L823.9 538.7L824.5 542.1L825.0 545.5zM829.2 549.0L828.6 552.6L827.8 556.2L826.8 559.7L825.7 563.2L824.4 566.5L823.1 569.8L821.6 573.0L819.9 576.1L818.2 579.2L816.3 582.1L814.3 584.9L812.1 587.6L809.9 590.2L807.5 592.7L805.1 595.1L802.5 597.3L799.8 599.4L797.1 601.4L794.2 603.3L791.3 605.0L788.3 606.6L785.3 608.0L782.1 609.2L778.9 610.3L775.7 611.3L772.4 612.1L769.1 612.7L765.8 613.2L762.4 613.6L759.0 613.7L755.6 613.7L752.2 613.6L748.8 613.3L745.4 612.9L742.0 612.3L738.7 611.5L735.3 610.6L732.0 609.6L728.7 608.4L725.4 607.2L722.2 605.7L718.9 604.2L715.6 602.6L712.4 600.8L709.1 598.9L705.9 596.8L702.7 594.6L699.5 592.2L696.5 589.6L693.4 586.9L690.2 584.0L687.0 581.0L684.1 577.8L682.0 574.0L680.5 570.0L679.4 565.9L678.6 561.7L678.0 557.5L677.6 553.3L677.4 549.0L677.3 544.7L677.4 540.4L677.8 536.1L678.2 531.8L678.9 527.5L679.8 523.3L681.0 519.0L682.6 515.0L684.8 511.2L687.4 507.7L690.5 504.5L693.6 501.5L696.8 498.6L700.0 495.9L703.3 493.3L706.7 490.9L710.1 488.6L713.5 486.4L717.0 484.3L720.5 482.4L724.1 480.6L727.8 478.9L731.5 477.4L735.3 476.0L739.1 474.7L743.0 473.7L746.9 472.7L750.9 471.9L754.9 471.4L759.0 471.1L763.1 471.7L767.0 472.9L770.8 474.4L774.5 475.9L778.1 477.6L781.6 479.3L785.0 481.2L788.3 483.1L791.5 485.2L794.6 487.3L797.6 489.6L800.4 492.0L803.2 494.4L805.8 497.0L808.3 499.7L810.7 502.4L813.0 505.3L815.1 508.2L817.1 511.3L818.9 514.4L820.6 517.6L822.2 520.9L823.6 524.2L824.9 527.6L826.0 531.0L827.0 534.5L827.8 538.1L828.5 541.7L829.1 545.3zM832.9 549.0L832.2 552.8L831.2 556.6L830.1 560.3L828.8 563.8L827.5 567.3L826.0 570.8L824.3 574.1L822.6 577.3L820.7 580.4L818.7 583.5L816.5 586.4L814.3 589.1L811.9 591.8L809.4 594.4L806.8 596.8L804.1 599.1L801.4 601.3L798.5 603.4L795.5 605.3L792.5 607.0L789.4 608.6L786.2 610.1L782.9 611.4L779.6 612.5L776.3 613.5L772.9 614.3L769.5 615.0L766.0 615.5L762.5 615.9L759.0 616.1L755.5 616.1L752.0 616.0L748.4 615.7L744.9 615.3L741.4 614.7L737.9 614.0L734.4 613.1L730.9 612.1L727.4 611.0L723.9 609.7L720.5 608.3L717.0 606.8L713.5 605.2L710.0 603.5L706.4 601.6L702.9 599.5L699.4 597.3L695.9 594.9L692.4 592.2L688.9 589.5L685.4 586.5L681.7 583.4L678.3 580.0L675.9 576.0L674.2 571.7L673.0 567.3L672.2 562.7L671.6 558.2L671.1 553.6L670.8 549.0L670.7 544.4L670.8 539.7L671.1 535.1L671.6 530.4L672.3 525.8L673.2 521.1L674.4 516.5L676.2 512.1L678.6 508.0L681.6 504.3L685.0 500.9L688.5 497.8L692.0 494.7L695.5 491.9L699.2 489.2L702.9 486.6L706.5 484.2L710.3 481.9L714.0 479.8L717.9 477.7L721.7 475.8L725.6 474.0L729.6 472.4L733.6 470.9L737.7 469.6L741.9 468.4L746.1 467.3L750.3 466.4L754.6 465.8L759.0 465.4L763.3 466.2L767.5 467.7L771.6 469.4L775.5 471.2L779.3 473.1L783.0 475.1L786.6 477.1L790.0 479.3L793.4 481.5L796.6 483.9L799.7 486.3L802.7 488.9L805.5 491.5L808.3 494.3L810.9 497.1L813.4 500.0L815.7 503.1L817.9 506.2L820.0 509.4L821.9 512.7L823.7 516.0L825.4 519.5L826.9 522.9L828.2 526.5L829.4 530.1L830.5 533.8L831.4 537.5L832.2 541.3L832.8 545.1zM836.2 549.0L835.3 553.0L834.2 556.9L832.9 560.7L831.5 564.4L830.0 568.0L828.4 571.6L826.6 575.0L824.7 578.3L822.7 581.5L820.6 584.6L818.3 587.5L815.9 590.4L813.5 593.1L810.9 595.7L808.2 598.2L805.4 600.6L802.5 602.8L799.6 604.8L796.5 606.8L793.4 608.6L790.2 610.2L786.9 611.7L783.6 613.0L780.2 614.2L776.7 615.2L773.3 616.1L769.7 616.8L766.2 617.3L762.6 617.7L759.0 617.9L755.4 618.0L751.8 617.9L748.1 617.7L744.5 617.3L740.9 616.7L737.2 616.0L733.6 615.2L730.0 614.2L726.3 613.1L722.7 611.9L719.0 610.5L715.3 609.1L711.6 607.5L707.8 605.8L704.0 604.0L700.2 602.0L696.3 599.8L692.5 597.3L688.6 594.7L684.7 591.9L680.7 588.9L676.5 585.7L672.6 582.2L669.9 577.9L668.1 573.4L666.8 568.6L665.9 563.7L665.2 558.9L664.7 553.9L664.4 549.0L664.2 544.0L664.3 539.0L664.6 534.0L665.1 529.0L665.7 524.0L666.6 519.0L667.9 514.0L669.8 509.3L672.5 504.9L675.7 500.9L679.6 497.4L683.4 494.1L687.3 490.9L691.2 488.0L695.2 485.2L699.2 482.5L703.2 480.0L707.2 477.7L711.2 475.4L715.3 473.3L719.4 471.2L723.5 469.4L727.8 467.6L732.0 466.0L736.4 464.6L740.8 463.3L745.2 462.1L749.8 461.1L754.4 460.4L759.0 460.0L763.6 460.9L768.1 462.7L772.4 464.6L776.5 466.8L780.5 468.9L784.3 471.1L788.0 473.4L791.6 475.8L795.1 478.2L798.4 480.7L801.6 483.4L804.7 486.1L807.6 488.9L810.5 491.8L813.2 494.8L815.7 497.9L818.1 501.1L820.4 504.4L822.6 507.7L824.6 511.1L826.4 514.6L828.2 518.2L829.7 521.9L831.1 525.6L832.4 529.3L833.6 533.2L834.6 537.0L835.4 541.0L836.2 545.0zM839.1 549.0L838.1 553.1L836.8 557.2L835.4 561.1L833.8 564.9L832.1 568.6L830.4 572.2L828.5 575.7L826.4 579.0L824.3 582.3L822.1 585.4L819.7 588.4L817.2 591.3L814.6 594.1L812.0 596.7L809.2 599.2L806.3 601.6L803.4 603.8L800.3 605.9L797.2 607.9L794.0 609.7L790.8 611.3L787.4 612.8L784.0 614.2L780.6 615.3L777.1 616.4L773.5 617.3L769.9 618.0L766.3 618.5L762.7 618.9L759.0 619.2L755.3 619.3L751.6 619.2L747.9 619.0L744.2 618.7L740.5 618.2L736.7 617.5L733.0 616.7L729.2 615.8L725.5 614.8L721.7 613.6L717.9 612.3L714.0 611.0L710.0 609.5L706.0 607.9L701.9 606.1L697.7 604.2L693.5 602.0L689.3 599.6L685.1 597.0L680.7 594.2L676.2 591.2L671.5 588.0L667.1 584.3L664.1 579.8L662.0 575.0L660.6 569.9L659.7 564.7L658.9 559.5L658.4 554.3L658.0 549.0L657.8 543.7L657.9 538.4L658.1 533.0L658.6 527.7L659.2 522.3L660.1 516.9L661.4 511.5L663.5 506.5L666.3 501.8L670.0 497.6L674.2 493.9L678.5 490.5L682.7 487.2L687.0 484.2L691.3 481.3L695.6 478.6L699.9 476.0L704.2 473.5L708.5 471.2L712.8 469.0L717.2 466.9L721.6 464.9L726.0 463.1L730.5 461.4L735.1 459.8L739.7 458.4L744.5 457.1L749.2 456.1L754.1 455.2L759.0 454.7L763.9 455.9L768.6 457.9L773.1 460.1L777.4 462.6L781.5 465.0L785.5 467.5L789.3 470.0L793.0 472.6L796.6 475.2L800.0 477.9L803.3 480.8L806.5 483.7L809.5 486.7L812.4 489.7L815.1 492.9L817.7 496.1L820.2 499.4L822.6 502.8L824.8 506.3L826.9 509.8L828.8 513.5L830.5 517.1L832.2 520.9L833.7 524.7L835.0 528.6L836.2 532.6L837.3 536.6L838.2 540.7L839.1 544.8zM841.6 549.0L840.4 553.3L839.0 557.4L837.3 561.4L835.6 565.3L833.8 569.0L831.9 572.7L829.9 576.2L827.7 579.6L825.4 582.9L823.1 586.0L820.6 589.0L818.0 591.9L815.4 594.7L812.7 597.3L809.8 599.8L806.9 602.2L803.9 604.4L800.8 606.5L797.6 608.4L794.4 610.3L791.1 611.9L787.7 613.4L784.2 614.8L780.8 616.0L777.2 617.0L773.6 617.9L770.0 618.6L766.4 619.2L762.7 619.6L759.0 619.9L755.3 620.0L751.5 620.0L747.8 619.9L744.0 619.6L740.2 619.1L736.4 618.5L732.6 617.8L728.7 617.0L724.9 616.0L720.9 614.9L716.9 613.8L712.9 612.5L708.7 611.2L704.4 609.7L700.0 608.0L695.6 606.1L691.0 604.1L686.4 601.8L681.8 599.2L677.0 596.4L671.9 593.4L666.6 590.1L661.7 586.4L658.3 581.7L656.1 576.6L654.6 571.2L653.6 565.7L652.8 560.2L652.1 554.6L651.7 549.0L651.5 543.4L651.5 537.7L651.7 532.0L652.1 526.3L652.8 520.5L653.6 514.8L655.0 509.1L657.2 503.7L660.3 498.7L664.3 494.3L668.9 490.5L673.6 487.0L678.2 483.6L682.9 480.5L687.5 477.5L692.1 474.8L696.7 472.1L701.3 469.6L705.9 467.2L710.4 464.9L715.0 462.7L719.7 460.6L724.3 458.7L729.1 456.9L733.9 455.3L738.8 453.8L743.7 452.4L748.7 451.2L753.8 450.2L759.0 449.7L764.1 451.0L769.1 453.3L773.7 455.9L778.2 458.7L782.5 461.4L786.6 464.1L790.5 466.9L794.3 469.7L798.0 472.6L801.5 475.5L804.8 478.5L808.0 481.6L811.1 484.7L814.0 487.9L816.8 491.2L819.5 494.6L822.0 498.0L824.4 501.5L826.6 505.1L828.7 508.7L830.7 512.5L832.5 516.3L834.2 520.1L835.8 524.1L837.2 528.0L838.5 532.1L839.6 536.2L840.7 540.4L841.6 544.7zM843.7 549.0L842.3 553.4L840.7 557.6L838.9 561.6L836.9 565.6L835.0 569.4L833.0 573.0L830.8 576.5L828.5 579.9L826.1 583.2L823.7 586.4L821.1 589.3L818.4 592.2L815.7 594.9L812.9 597.6L810.1 600.1L807.1 602.4L804.0 604.6L800.9 606.6L797.7 608.6L794.4 610.4L791.1 612.0L787.7 613.5L784.3 614.8L780.8 616.0L777.2 617.0L773.7 617.9L770.0 618.7L766.4 619.3L762.7 619.8L759.0 620.1L755.3 620.2L751.5 620.3L747.7 620.1L743.9 619.9L740.1 619.5L736.3 619.0L732.4 618.4L728.4 617.6L724.5 616.8L720.4 615.8L716.3 614.8L712.0 613.6L707.6 612.4L703.1 611.1L698.4 609.6L693.7 607.8L688.8 605.9L683.7 603.7L678.7 601.1L673.4 598.4L667.8 595.5L661.9 592.2L656.4 588.4L652.7 583.6L650.2 578.1L648.6 572.5L647.6 566.6L646.7 560.8L646.0 554.9L645.6 549.0L645.3 543.0L645.2 537.0L645.4 531.0L645.8 524.9L646.4 518.8L647.2 512.7L648.6 506.6L650.9 500.9L654.3 495.6L658.6 491.0L663.8 487.1L668.8 483.5L673.9 480.1L678.9 476.9L683.9 473.9L688.8 471.1L693.7 468.4L698.6 465.8L703.4 463.4L708.2 461.0L713.0 458.8L717.9 456.6L722.8 454.6L727.7 452.7L732.7 451.0L737.8 449.3L743.0 447.8L748.2 446.5L753.6 445.4L759.0 444.8L764.4 446.3L769.5 449.0L774.4 452.0L779.0 455.1L783.4 458.1L787.6 461.1L791.6 464.1L795.4 467.1L799.1 470.2L802.7 473.3L806.1 476.5L809.3 479.8L812.4 483.1L815.4 486.4L818.2 489.8L820.9 493.3L823.4 496.8L825.8 500.4L828.1 504.1L830.3 507.9L832.3 511.7L834.1 515.6L835.9 519.5L837.5 523.5L838.9 527.6L840.3 531.7L841.5 535.9L842.6 540.2L843.7 544.6zM845.4 549.0L843.8 553.4L841.9 557.7L839.9 561.8L837.8 565.8L835.7 569.5L833.5 573.2L831.2 576.7L828.8 580.1L826.3 583.3L823.8 586.4L821.1 589.3L818.4 592.2L815.6 594.9L812.8 597.4L809.9 599.9L806.9 602.1L803.8 604.3L800.6 606.3L797.4 608.2L794.2 610.0L790.9 611.6L787.5 613.0L784.1 614.3L780.6 615.5L777.1 616.5L773.5 617.4L770.0 618.2L766.3 618.8L762.7 619.3L759.0 619.6L755.3 619.8L751.5 619.9L747.8 619.9L744.0 619.7L740.1 619.4L736.3 619.0L732.3 618.4L728.4 617.8L724.3 617.1L720.2 616.2L715.9 615.3L711.5 614.4L706.9 613.4L702.1 612.2L697.1 610.9L692.1 609.3L686.8 607.5L681.4 605.4L675.9 603.0L670.1 600.3L663.9 597.4L657.4 594.2L651.2 590.4L647.1 585.4L644.5 579.7L642.8 573.7L641.7 567.6L640.7 561.4L640.0 555.2L639.5 549.0L639.2 542.7L639.1 536.4L639.2 530.0L639.5 523.6L640.1 517.1L640.8 510.6L642.2 504.2L644.7 498.1L648.3 492.6L653.0 487.8L658.7 483.8L664.2 480.1L669.6 476.6L675.0 473.4L680.3 470.3L685.7 467.5L690.8 464.8L696.0 462.2L701.0 459.7L706.1 457.3L711.1 455.0L716.2 452.8L721.3 450.7L726.4 448.7L731.6 446.9L736.9 445.1L742.3 443.5L747.8 442.1L753.3 440.9L759.0 440.2L764.6 441.9L769.9 444.9L775.0 448.3L779.7 451.7L784.2 455.1L788.4 458.4L792.5 461.7L796.4 464.9L800.1 468.2L803.7 471.5L807.1 474.9L810.4 478.3L813.5 481.8L816.4 485.2L819.2 488.8L821.9 492.3L824.5 496.0L826.9 499.7L829.2 503.4L831.4 507.2L833.4 511.1L835.3 515.0L837.1 519.0L838.7 523.1L840.3 527.2L841.7 531.4L843.0 535.7L844.2 540.0L845.4 544.5zM846.6 549.0L844.8 553.5L842.7 557.8L840.5 561.9L838.2 565.8L835.9 569.6L833.6 573.2L831.1 576.7L828.6 580.0L826.0 583.2L823.4 586.2L820.7 589.1L817.9 591.8L815.1 594.4L812.2 596.9L809.3 599.3L806.3 601.5L803.2 603.6L800.1 605.5L796.9 607.3L793.7 609.1L790.4 610.7L787.1 612.0L783.7 613.3L780.3 614.5L776.8 615.5L773.3 616.4L769.8 617.1L766.2 617.7L762.6 618.2L759.0 618.6L755.3 618.9L751.6 619.0L747.9 619.0L744.1 618.9L740.3 618.7L736.5 618.4L732.5 618.0L728.5 617.5L724.4 616.9L720.2 616.2L715.8 615.5L711.2 614.7L706.4 613.9L701.4 613.0L696.2 611.8L690.8 610.4L685.1 608.8L679.3 606.9L673.3 604.6L667.0 602.1L660.3 599.3L653.0 596.2L646.2 592.3L641.7 587.1L638.8 581.2L637.1 574.9L635.9 568.5L634.9 562.0L634.1 555.5L633.5 549.0L633.2 542.4L633.0 535.8L633.0 529.1L633.3 522.3L633.8 515.5L634.5 508.5L635.9 501.7L638.5 495.3L642.4 489.6L647.5 484.6L653.6 480.6L659.6 476.8L665.5 473.3L671.3 470.0L677.0 467.0L682.6 464.2L688.1 461.5L693.5 458.8L698.8 456.3L704.1 453.9L709.3 451.5L714.6 449.2L719.9 447.0L725.2 445.0L730.6 443.0L736.1 441.2L741.6 439.4L747.3 437.8L753.1 436.5L759.0 435.7L764.8 437.7L770.3 441.1L775.5 444.8L780.3 448.7L784.9 452.4L789.2 456.0L793.3 459.6L797.3 463.1L801.0 466.6L804.6 470.1L807.9 473.6L811.2 477.2L814.2 480.8L817.2 484.4L820.0 488.0L822.7 491.7L825.2 495.4L827.6 499.1L829.9 502.9L832.1 506.8L834.1 510.7L836.0 514.7L837.8 518.7L839.5 522.8L841.1 527.0L842.6 531.2L844.0 535.5L845.3 539.9L846.6 544.4zM847.4 549.0L845.4 553.5L843.1 557.8L840.6 561.9L838.1 565.8L835.6 569.5L833.2 573.1L830.6 576.5L827.9 579.7L825.3 582.8L822.6 585.7L819.8 588.5L816.9 591.1L814.1 593.6L811.2 596.0L808.3 598.3L805.3 600.4L802.2 602.4L799.1 604.2L796.0 606.0L792.9 607.6L789.7 609.2L786.4 610.5L783.1 611.7L779.7 612.8L776.4 613.8L773.0 614.7L769.5 615.4L766.1 616.1L762.5 616.6L759.0 617.0L755.4 617.3L751.8 617.5L748.1 617.6L744.4 617.6L740.6 617.5L736.8 617.3L732.9 617.0L728.9 616.7L724.7 616.2L720.5 615.8L716.0 615.2L711.3 614.7L706.3 614.1L701.0 613.4L695.5 612.5L689.8 611.3L683.7 610.0L677.4 608.3L671.0 606.1L664.2 603.7L656.8 601.1L648.9 598.0L641.3 594.2L636.4 588.8L633.3 582.7L631.5 576.1L630.2 569.4L629.2 562.6L628.3 555.8L627.7 549.0L627.2 542.1L627.0 535.1L627.0 528.1L627.2 521.0L627.6 513.8L628.2 506.5L629.6 499.3L632.3 492.6L636.5 486.6L642.1 481.5L648.7 477.4L655.2 473.6L661.5 470.0L667.7 466.8L673.7 463.7L679.7 460.9L685.5 458.2L691.2 455.6L696.7 453.1L702.2 450.6L707.6 448.2L713.1 445.8L718.5 443.6L724.0 441.4L729.6 439.4L735.3 437.4L741.0 435.5L746.9 433.8L752.9 432.4L759.0 431.5L765.0 433.8L770.7 437.6L776.0 441.7L780.9 446.0L785.5 450.1L789.9 454.0L794.0 457.8L797.9 461.6L801.6 465.3L805.2 469.0L808.5 472.7L811.7 476.4L814.8 480.1L817.7 483.8L820.4 487.6L823.1 491.3L825.6 495.1L828.0 498.9L830.2 502.7L832.4 506.6L834.4 510.6L836.4 514.6L838.2 518.6L839.9 522.7L841.6 526.9L843.1 531.1L844.6 535.4L846.0 539.9L847.4 544.4zM847.8 549.0L845.5 553.5L842.9 557.8L840.2 561.9L837.6 565.7L834.9 569.3L832.3 572.8L829.5 576.1L826.8 579.2L824.0 582.1L821.3 585.0L818.4 587.6L815.5 590.1L812.7 592.5L809.8 594.7L806.9 596.9L803.9 598.9L800.9 600.7L797.9 602.5L794.8 604.1L791.7 605.7L788.6 607.2L785.5 608.4L782.2 609.6L779.0 610.6L775.8 611.6L772.5 612.4L769.2 613.2L765.8 613.8L762.4 614.4L759.0 614.8L755.5 615.2L752.0 615.4L748.5 615.6L744.8 615.7L741.1 615.7L737.3 615.7L733.5 615.5L729.5 615.3L725.3 615.1L721.0 614.8L716.4 614.5L711.6 614.2L706.4 613.9L700.9 613.5L695.1 612.9L689.1 612.0L682.6 610.9L675.9 609.4L669.0 607.4L661.6 605.2L653.5 602.7L644.8 599.8L636.6 596.0L631.2 590.5L627.9 584.1L625.9 577.3L624.7 570.3L623.6 563.2L622.7 556.1L622.0 549.0L621.4 541.8L621.1 534.5L621.0 527.1L621.2 519.7L621.5 512.2L622.0 504.5L623.4 497.0L626.3 489.9L630.7 483.6L636.7 478.4L643.9 474.2L650.8 470.4L657.6 466.9L664.2 463.6L670.6 460.6L676.9 457.9L683.0 455.2L689.0 452.6L694.7 450.1L700.4 447.5L706.1 445.1L711.7 442.7L717.3 440.4L723.0 438.1L728.7 436.0L734.5 433.9L740.5 431.9L746.5 430.1L752.7 428.5L759.0 427.5L765.2 430.0L771.1 434.3L776.4 438.9L781.4 443.6L786.1 448.0L790.4 452.3L794.5 456.4L798.4 460.4L802.1 464.4L805.6 468.3L808.9 472.2L812.0 476.0L815.0 479.9L817.8 483.7L820.5 487.5L823.1 491.3L825.6 495.1L827.9 498.9L830.2 502.8L832.3 506.7L834.3 510.6L836.3 514.6L838.1 518.6L839.9 522.7L841.6 526.9L843.2 531.1L844.7 535.4L846.2 539.8L847.8 544.3zM847.7 549.0L845.2 553.5L842.3 557.8L839.4 561.7L836.5 565.5L833.6 569.0L830.9 572.4L828.0 575.5L825.1 578.4L822.3 581.2L819.5 583.9L816.5 586.4L813.6 588.7L810.8 590.9L807.9 593.1L805.1 595.1L802.1 596.9L799.2 598.6L796.2 600.2L793.3 601.8L790.3 603.2L787.3 604.6L784.3 605.8L781.2 606.8L778.1 607.8L775.0 608.7L771.9 609.6L768.7 610.3L765.5 610.9L762.3 611.5L759.0 612.0L755.7 612.4L752.3 612.7L748.9 613.0L745.3 613.2L741.8 613.4L738.1 613.5L734.2 613.5L730.3 613.5L726.1 613.5L721.8 613.4L717.2 613.4L712.2 613.4L706.9 613.4L701.2 613.2L695.0 613.0L688.6 612.3L681.8 611.5L674.6 610.3L667.3 608.6L659.2 606.6L650.5 604.3L641.0 601.5L632.0 597.8L626.2 592.1L622.7 585.5L620.6 578.4L619.2 571.1L618.1 563.8L617.1 556.4L616.3 549.0L615.7 541.5L615.3 533.9L615.2 526.2L615.2 518.4L615.5 510.5L615.9 502.5L617.3 494.6L620.2 487.2L625.0 480.7L631.4 475.3L639.1 471.2L646.6 467.3L653.8 463.8L660.8 460.6L667.6 457.6L674.3 455.0L680.7 452.3L686.9 449.8L692.9 447.2L698.8 444.7L704.6 442.2L710.4 439.8L716.2 437.4L722.0 435.1L727.9 432.9L733.8 430.7L739.9 428.5L746.1 426.5L752.5 424.8L759.0 423.7L765.4 426.5L771.4 431.2L776.9 436.3L781.9 441.5L786.5 446.3L790.9 450.9L795.0 455.3L798.8 459.6L802.4 463.8L805.8 467.9L809.0 472.0L812.1 476.0L814.9 479.9L817.7 483.8L820.3 487.7L822.8 491.5L825.2 495.4L827.5 499.2L829.7 503.1L831.8 507.0L833.8 510.9L835.7 514.8L837.6 518.8L839.4 522.9L841.1 527.0L842.8 531.2L844.4 535.5L846.0 539.9L847.7 544.4zM847.2 549.0L844.4 553.5L841.2 557.6L838.1 561.5L834.9 565.1L831.9 568.5L829.0 571.7L825.9 574.7L822.9 577.5L820.0 580.1L817.2 582.6L814.2 584.8L811.3 587.0L808.4 589.0L805.6 591.0L802.8 592.8L799.9 594.5L797.1 596.0L794.2 597.5L791.4 598.9L788.6 600.2L785.7 601.5L782.8 602.5L779.9 603.5L777.0 604.4L774.1 605.3L771.1 606.1L768.2 606.8L765.1 607.5L762.1 608.0L759.0 608.6L755.9 609.0L752.6 609.5L749.4 609.8L746.0 610.2L742.5 610.5L739.0 610.7L735.2 610.9L731.3 611.2L727.2 611.4L722.9 611.6L718.2 611.8L713.1 612.1L707.6 612.5L701.7 612.7L695.3 612.7L688.6 612.4L681.3 611.9L673.7 611.0L665.8 609.5L657.1 607.8L647.7 605.7L637.4 603.2L627.5 599.5L621.3 593.7L617.5 586.9L615.3 579.5L613.9 572.0L612.7 564.4L611.7 556.7L610.8 549.0L610.1 541.2L609.7 533.3L609.4 525.3L609.3 517.2L609.5 508.9L609.8 500.5L611.1 492.2L614.2 484.5L619.3 477.8L626.2 472.3L634.5 468.1L642.5 464.3L650.2 460.9L657.6 457.7L664.8 454.8L671.9 452.2L678.5 449.6L685.0 447.1L691.2 444.6L697.3 442.1L703.3 439.6L709.2 437.1L715.1 434.7L721.1 432.3L727.1 430.0L733.2 427.7L739.4 425.4L745.8 423.2L752.3 421.4L759.0 420.2L765.6 423.2L771.7 428.4L777.2 434.0L782.2 439.7L786.9 444.9L791.2 449.9L795.2 454.6L799.0 459.2L802.5 463.6L805.8 467.9L808.9 472.1L811.9 476.3L814.6 480.3L817.3 484.3L819.8 488.2L822.2 492.1L824.5 496.0L826.7 499.8L828.8 503.6L830.9 507.5L832.9 511.4L834.8 515.3L836.6 519.2L838.4 523.2L840.2 527.3L841.9 531.4L843.6 535.6L845.4 539.9L847.2 544.4zM846.2 549.0L843.1 553.4L839.6 557.5L836.2 561.2L832.8 564.7L829.6 567.9L826.5 570.9L823.4 573.7L820.2 576.3L817.2 578.7L814.4 581.0L811.4 583.0L808.4 584.9L805.6 586.7L802.9 588.5L800.1 590.1L797.3 591.6L794.6 592.9L791.9 594.2L789.2 595.5L786.5 596.7L783.9 597.8L781.1 598.7L778.4 599.6L775.7 600.5L773.0 601.3L770.3 602.0L767.5 602.7L764.7 603.3L761.9 604.0L759.0 604.5L756.1 605.1L753.1 605.6L750.0 606.1L746.8 606.5L743.5 607.0L740.0 607.4L736.4 607.8L732.6 608.3L728.6 608.7L724.2 609.2L719.5 609.8L714.4 610.4L708.7 611.1L702.5 611.7L695.8 612.2L688.8 612.2L681.1 612.1L673.0 611.5L664.5 610.3L655.3 608.9L645.1 607.1L633.9 604.7L623.2 601.1L616.5 595.3L612.5 588.3L610.2 580.6L608.7 572.8L607.5 564.9L606.4 557.0L605.4 549.0L604.7 540.9L604.1 532.7L603.7 524.4L603.6 516.0L603.6 507.4L603.8 498.6L605.1 489.9L608.3 481.9L613.7 475.0L621.0 469.3L629.9 465.2L638.5 461.4L646.7 458.0L654.5 454.9L662.1 452.1L669.5 449.6L676.5 447.1L683.2 444.7L689.6 442.2L695.9 439.7L702.0 437.2L708.1 434.7L714.2 432.2L720.3 429.8L726.4 427.3L732.6 424.9L739.0 422.5L745.5 420.2L752.1 418.1L759.0 416.8L765.7 420.2L771.9 425.9L777.5 432.0L782.6 438.2L787.2 443.9L791.4 449.2L795.4 454.3L799.0 459.1L802.4 463.8L805.6 468.2L808.6 472.7L811.4 476.9L814.0 481.1L816.5 485.1L818.9 489.1L821.2 493.0L823.4 496.8L825.5 500.7L827.6 504.5L829.6 508.3L831.5 512.1L833.3 515.9L835.2 519.8L837.0 523.7L838.8 527.6L840.5 531.7L842.4 535.8L844.2 540.0L846.2 544.4zM844.7 549.0L841.3 553.3L837.6 557.3L833.9 560.9L830.2 564.1L826.8 567.2L823.6 570.0L820.3 572.5L817.0 574.8L814.0 577.0L811.1 579.1L808.0 580.8L805.1 582.5L802.3 584.1L799.6 585.6L797.0 587.0L794.3 588.2L791.7 589.4L789.2 590.5L786.6 591.6L784.2 592.6L781.7 593.6L779.2 594.4L776.7 595.1L774.2 595.9L771.8 596.6L769.3 597.3L766.8 598.0L764.2 598.6L761.6 599.2L759.0 599.9L756.3 600.5L753.5 601.1L750.7 601.7L747.7 602.3L744.6 602.9L741.3 603.5L737.8 604.2L734.1 604.9L730.1 605.6L725.8 606.4L721.1 607.3L715.9 608.3L710.1 609.4L703.7 610.4L696.7 611.3L689.3 611.8L681.2 612.0L672.6 611.8L663.6 610.9L653.7 609.8L642.7 608.3L630.6 606.2L619.0 602.7L611.8 596.8L607.5 589.6L605.1 581.7L603.7 573.6L602.3 565.5L601.2 557.3L600.1 549.0L599.3 540.6L598.6 532.1L598.1 523.5L597.9 514.7L597.8 505.8L597.9 496.6L599.1 487.6L602.4 479.3L608.1 472.1L615.9 466.4L625.5 462.3L634.6 458.6L643.3 455.3L651.6 452.3L659.6 449.6L667.3 447.2L674.6 444.8L681.6 442.4L688.2 440.0L694.7 437.5L700.9 435.0L707.1 432.5L713.3 430.0L719.5 427.5L725.8 424.9L732.1 422.4L738.5 419.8L745.2 417.3L752.0 415.1L759.0 413.7L765.9 417.5L772.2 423.7L777.8 430.3L782.8 437.0L787.4 443.2L791.5 448.9L795.4 454.3L798.9 459.4L802.2 464.3L805.2 469.0L808.0 473.5L810.6 477.9L813.1 482.2L815.5 486.3L817.7 490.3L819.9 494.2L821.9 498.0L823.9 501.8L825.9 505.6L827.8 509.3L829.6 513.0L831.5 516.7L833.3 520.5L835.1 524.3L836.9 528.1L838.7 532.1L840.7 536.1L842.6 540.2L844.8 544.5zM842.8 549.0L839.1 553.2L835.0 557.0L831.0 560.4L827.1 563.5L823.5 566.3L820.1 568.9L816.7 571.1L813.3 573.2L810.2 575.1L807.3 576.9L804.2 578.3L801.3 579.7L798.6 581.0L796.0 582.3L793.5 583.5L790.9 584.4L788.4 585.4L786.1 586.2L783.7 587.1L781.5 588.0L779.3 588.8L777.0 589.4L774.8 590.1L772.5 590.7L770.3 591.3L768.1 592.0L765.9 592.6L763.7 593.2L761.4 593.9L759.0 594.5L756.6 595.2L754.1 595.9L751.5 596.7L748.7 597.4L745.8 598.2L742.7 599.1L739.4 600.0L735.9 601.0L732.0 602.0L727.7 603.1L723.0 604.4L717.7 605.8L711.8 607.3L705.2 608.8L697.9 610.1L690.2 611.0L681.6 611.7L672.5 611.9L662.9 611.4L652.3 610.6L640.5 609.4L627.5 607.5L615.0 604.3L607.3 598.3L602.8 590.9L600.2 582.7L598.7 574.4L597.3 566.0L596.1 557.5L595.0 549.0L594.0 540.4L593.3 531.6L592.7 522.7L592.3 513.6L592.1 504.3L592.0 494.7L593.2 485.3L596.6 476.7L602.6 469.3L610.9 463.5L621.1 459.5L630.8 455.9L640.0 452.7L648.8 449.8L657.2 447.2L665.3 444.9L672.9 442.7L680.1 440.4L686.9 438.0L693.5 435.6L700.0 433.1L706.3 430.6L712.6 428.0L718.8 425.4L725.2 422.8L731.6 420.1L738.2 417.4L744.9 414.8L751.8 412.4L759.0 410.9L766.0 414.9L772.4 421.7L778.0 428.9L783.0 436.2L787.5 442.8L791.5 448.9L795.2 454.7L798.6 460.1L801.7 465.2L804.6 470.1L807.2 474.8L809.6 479.3L811.9 483.7L814.1 487.8L816.2 491.8L818.2 495.7L820.1 499.5L821.9 503.3L823.8 506.9L825.6 510.6L827.4 514.2L829.1 517.8L830.9 521.4L832.7 525.0L834.6 528.8L836.5 532.5L838.5 536.4L840.5 540.4L842.9 544.6z"/>
<polygon points="594.0,500.0 640.0,510.0 690.0,535.0 735.0,580.0 740.0,600.0 690.0,613.0 640.0,610.0 604.0,603.0 596.0,560.0" fill="url(#gSo)"/>
<g clip-path="url(#cE)"><path stroke="#e07000" stroke-width="3" stroke-dasharray="1 1.5" shape-rendering="crispEdges" d="M738.5 513.0L798.5 543.0M735.3 520.0L795.3 550.0M732.1 527.0L792.1 557.0M729.0 534.0L789.0 564.0M725.9 541.0L785.9 571.0M722.7 548.0L782.7 578.0M719.5 555.0L779.5 585.0"/></g>
<path d="M952.0 258.0L947.0 265.0L917.0 311.0L886.0 351.0L856.0 387.0L826.0 414.0L806.0 430.0L797.0 442.0L793.0 462.0" fill="none" stroke="#000" stroke-width="7" stroke-opacity="0.45" filter="url(#fb)"/>
<polygon points="949.6,256.3 944.7,263.5 914.9,309.5 884.2,349.5 854.5,385.5 824.8,412.6 804.8,428.8 795.6,441.4 791.8,461.8 794.2,462.2 798.4,442.6 807.2,431.2 827.2,415.4 857.5,388.5 887.8,352.5 919.1,312.5 949.3,266.5 954.4,259.7" fill="#000" fill-opacity="0.85"/>
<circle cx="806.8" cy="346.4" r="150" fill="url(#gS2)" style="mix-blend-mode:plus-lighter"/>
</g>
<circle cx="742.4" cy="410.8" r="250.29999999999998" fill="none" stroke="#000" stroke-width="1.2"/>
</svg>
</body></html>
